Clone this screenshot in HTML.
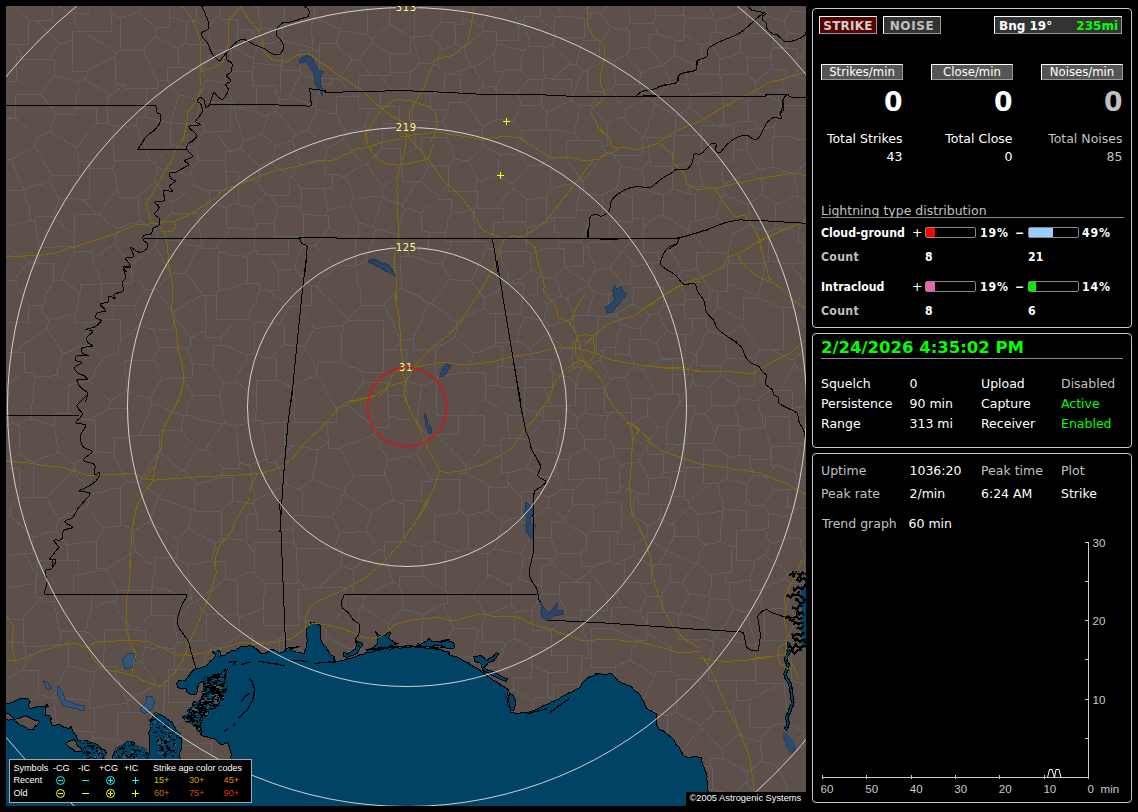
<!DOCTYPE html>
<html><head><meta charset="utf-8"><title>Lightning</title>
<style>
html,body{margin:0;padding:0;background:#000;overflow:hidden}
body{width:1138px;height:812px;position:relative;font-family:"DejaVu Sans","Liberation Sans",sans-serif;font-size:12.5px;color:#fff}
.a{position:absolute;white-space:nowrap;line-height:1}
.pn{position:absolute;border:1px solid #c8c8c8;border-radius:4px;box-sizing:border-box}
.btn{position:absolute;box-sizing:border-box;border:1px solid;border-color:#fff #999 #999 #fff;text-align:center}
.g{color:#c0c0c0}
.gr{color:#00ff00}
.b{font-family:"DejaVu Sans Condensed","DejaVu Sans",sans-serif;font-weight:bold;font-size:12.2px}
.r{text-align:right}
.bar{position:absolute;box-sizing:border-box;width:51px;height:11px;border:1px solid #8a8a8a;border-radius:2px}
.bar i{display:block;height:9px}
.hl{position:absolute;height:1px;background:#8a8a8a}
#map{position:absolute;left:6px;top:6px;width:800px;height:800px;background:#5d4f4a;overflow:hidden}
.lg{font-family:"Liberation Sans",sans-serif;font-size:9.6px}
</style></head><body>
<div id="map">
<svg width="800" height="800" viewBox="6 6 800 800" style="position:absolute;left:0;top:0">
<!--MAP--><defs><pattern id="mk" width="8" height="8" patternUnits="userSpaceOnUse"><rect width="8" height="8" fill="#000"/><rect x="1" y="0" width="2" height="1" fill="#004364"/><rect x="5" y="2" width="2" height="2" fill="#004364"/><rect x="0" y="4" width="1" height="2" fill="#004364"/><rect x="3" y="5" width="2" height="1" fill="#5d4f4a"/><rect x="6" y="6" width="1" height="2" fill="#004364"/><rect x="2" y="2" width="1" height="1" fill="#5d4f4a"/><rect x="4" y="0" width="1" height="1" fill="#5d4f4a"/><rect x="2" y="7" width="2" height="1" fill="#004364"/></pattern><pattern id="mb" width="8" height="8" patternUnits="userSpaceOnUse"><rect width="8" height="8" fill="#004364"/><rect x="1" y="1" width="2" height="1" fill="#000"/><rect x="5" y="0" width="1" height="2" fill="#000"/><rect x="3" y="3" width="2" height="2" fill="#000"/><rect x="6" y="5" width="2" height="1" fill="#000"/><rect x="0" y="6" width="2" height="1" fill="#000"/><rect x="4" y="6" width="1" height="2" fill="#5d4f4a"/><rect x="7" y="2" width="1" height="1" fill="#5d4f4a"/><rect x="1" y="4" width="1" height="1" fill="#000"/></pattern></defs>
<path d="M788 723 793 726 798 729 803 731M788 723 787 718 787 711 786 706 786 700 785 695 784 689 784 684M803 731 808 726 812 722 816 717 820 713M815 688 810 687 805 685 800 683 796 682 791 680M784 684 791 680M806 744 803 744 803 731M814 645 814 648 798 648M798 648 791 648 791 680M400 158 400 148 382 148M400 158 401 165 402 171M382 187 386 184 391 181 394 178 398 175 402 171M382 187 380 183 376 178 373 173 369 168 367 164M367 164 371 160 375 155 378 153 382 148M316 375 317 372M316 375 320 379 323 384 325 389 327 393 330 399 333 403 336 408M317 372 317 362 340 362M336 408 341 407 348 405M348 405 351 400 354 396 357 391 361 386 364 382M364 382 362 382 362 372M340 362 345 364 350 367 356 368 362 372M364 382 387 382 387 395M387 395 406 395 406 380M394 349 406 349 406 380M394 349 383 349 383 351M362 372 383 372 383 351M57 375 51 376 45 376 40 376 34 378M57 375 63 379 68 384M68 384 68 390 68 396 68 402 68 408 68 413M34 378 34 383 33 387 34 393 33 399 32 404 31 408 31 414 32 419M68 413 54 413 54 426M54 426 49 424 43 423 37 420 32 419M57 375 58 369 60 365 61 359 63 354M68 384 73 384 79 383 85 382 89 381M89 381 93 377 95 372 97 367 101 362 103 358M63 354 68 352 73 350 78 347 84 345M103 358 99 354 94 351 89 349 84 345M317 372 315 367 313 361 310 356 306 352 304 346M304 346 307 341 309 338 312 333 315 329M340 362 341 357 341 351 341 345 342 340 341 335 343 330 343 325M315 329 320 328 325 327 331 326 337 326 343 325M383 351 383 320 347 320M343 325 347 320M384 305 379 305 373 306 367 305 362 305M384 305 386 309 388 314 390 318 393 323 395 328 396 332 399 337 401 341M362 305 357 310 352 314 348 319M401 341 394 349M348 319 347 320M420 181 424 176 426 171 429 166M420 181 417 181M400 158 405 155 408 153 413 150 417 147M417 147 421 149M402 171 402 181 417 181M421 149 424 155 426 160 429 166M421 213 425 210 429 206 434 203 438 199M421 213 421 231 428 231M428 231 428 232 445 232M445 232 447 227 448 219 451 214M451 214 451 199 438 199M3 619 10 619 16 619 23 619M23 619 23 646 44 646M1 642 25 642 25 663M44 646 41 650 37 653 33 656 29 659 25 663M-6 682 -1 680 4 678 8 677 14 675 19 672 23 670M23 670 25 663M104 645 99 642 95 639 90 635 85 631M104 645 104 651 103 656 103 661 104 666M104 666 99 668 95 672M95 672 89 671 83 669 78 668 73 666 68 666M85 631 61 631 61 639M68 666 68 644 57 644M57 644 61 639M89 701 89 708 94 708M89 701 90 694 91 688 93 684 94 678 95 672M128 701 125 697 123 691 120 686 119 681 117 677 115 672M128 701 127 703M115 672 115 666 104 666M94 708 99 707 104 706 110 705 116 704 121 704 127 703M91 609 90 615 88 619 87 626 85 631M91 609 97 607 101 604 107 602 112 601M104 645 104 629 130 629M112 601 116 605 118 611 121 615 124 620 128 624 130 629M128 701 133 697 137 695 143 693 147 690 152 687 156 685M115 672 120 670 125 668 130 665 137 663 142 661M142 661 144 666 147 670 150 675 154 680 156 685M383 197 387 200 393 202 397 203 402 205M383 197 381 203 379 208 377 215 375 220 373 226M398 234 399 228 401 223 401 218 404 213 404 208M398 234 392 233 387 232 381 230 376 229M404 208 402 205M376 229 373 226M382 187 382 196 382 196M382 196 383 197M417 181 414 186 412 190 408 196 405 201 402 205M408 249 428 249 428 231M408 249 405 244 401 240 398 234M421 213 415 211 410 209 404 208M420 181 425 184 429 189 433 191 438 195M438 195 438 199M358 223 364 224 368 226 373 226M358 223 358 235 346 235M365 262 360 264 355 265M365 262 367 257 369 251 370 246 373 241 374 235 376 229M355 265 355 235 346 235M346 11 342 7 338 4 334 1 329 -2M346 11 351 8 357 6M357 6 356 1 355 -5 353 -9 352 -15M392 90 380 90 380 106M392 90 398 89 404 89 409 87M409 87 415 93M415 93 414 99 413 105 413 109 412 115 412 120M380 106 399 106 399 123M399 123 410 123 410 122M410 122 412 120M417 147 416 143 414 137 414 133 411 127 410 122M382 146 382 148M382 146 382 123 399 123M298 206 301 206 301 189M298 206 278 206 278 206M278 206 274 201 270 195M270 195 289 195 289 176M301 189 298 185 295 180 292 176M289 176 292 176M293 236 288 236M293 236 303 236 303 214M303 214 298 206M288 236 274 236 274 223M274 223 276 218 276 212 278 206M262 134 263 129 266 122 267 116M262 134 267 138 272 142 276 146M276 146 281 144 287 142 292 140M276 111 272 113 267 116M276 111 279 115 283 118 287 122 289 126 292 131 296 135M296 135 292 140M270 162 264 164 259 166M270 162 273 157 275 151 276 146M244 141 248 140 254 138 258 136 262 134M244 141 240 148M259 166 256 163 251 159 248 155 244 151 240 148M270 162 275 166 280 169 285 172 289 176M300 165 295 170 292 176M300 165 298 160 298 156 295 150 294 146 292 140M327 148 323 144 319 140 316 137 313 135 308 130M327 148 326 155 324 161M308 130 302 132 296 135M324 161 319 162 312 163 305 164 300 165M89 381 94 385 98 389 102 393 106 397 111 401M127 391 122 394 117 397 111 401M127 391 126 387 127 381 126 375 124 371 124 364 124 360M103 358 108 356 113 355 118 354M124 360 118 354M192 363 192 377 184 377M192 363 191 358 188 352 186 347M186 347 160 347 160 349M184 377 179 378 173 378 167 379 162 379M162 379 160 374 157 368 156 363 153 359M153 359 156 353 160 349M190 338 187 333 183 328 179 323 176 319 173 313M190 338 190 347 186 347M173 313 173 329 153 329M153 329 155 334 157 338 158 343 160 349M127 391 133 393 138 396 144 397 150 399M150 399 153 394 156 389 158 384 162 379M124 360 153 360 153 359M120 343 118 343 118 354M120 343 124 338 128 335 133 333 136 328 140 325M140 325 147 328 153 329M-5 395 -2 400 1 405 4 410 7 414 11 419 13 423M-12 435 -7 432 -3 430 2 427 8 425 13 423M-4 394 -0 391 4 387 8 384 12 381 15 379 20 376 24 372M24 372 34 372 34 378M32 419 26 420 22 422 17 425M13 423 17 425M95 451 95 420 89 420M95 451 101 452 108 452 114 453M114 453 114 437 128 437M128 437 128 408 108 408M89 420 94 417 99 414 104 412 108 408M74 464 80 461 85 458 89 455 95 451M74 464 69 460 64 455 58 452M68 413 74 415 79 416 83 419 89 420M58 452 58 446 56 442 56 437 55 431 54 426M74 469 76 474 79 479 83 481 85 486 89 490 91 494M74 469 74 464M120 488 115 488 108 490 103 492 96 492 91 494M120 488 126 481M126 481 123 476 121 471 118 464 116 460 114 453M111 401 108 408M150 399 152 404M140 435 142 430 144 424 146 419 148 414 150 409 152 404M140 435 134 436 128 437M362 305 360 299 360 296 360 290 358 285 357 280 357 276 356 271 354 265M348 319 344 315 341 313 338 309 334 305 330 300 327 298 323 294 320 290 317 286M354 265 334 265 334 268M317 286 320 281 324 277 330 273 334 268M354 265 355 265M328 228 335 231 340 234 346 235M328 228 325 233 322 238 319 241 316 245M334 268 331 263 327 258 323 254 319 250 316 245M293 236 303 236 303 246M325 215 319 215 313 215 309 214 303 214M325 215 328 215 328 228M303 246 309 246 316 245M703 470 703 483 712 483M703 470 703 467 689 467M689 467 685 471M685 471 685 476 684 482 684 487 684 492 684 498M712 483 708 486 704 489 700 493 696 495 691 498 688 501M688 501 684 498M806 291 811 294 815 294 820 296 824 299 830 300 835 301 840 304 844 305 849 307 854 307 858 310 863 312 868 314 872 314 877 317 883 317 888 320 893 321 898 322 902 324 907 326 911 328 917 330 921 331 926 333 931 335M806 291 806 283M806 283 810 280 814 275 818 271 823 269 826 264M806 291 802 295 799 299 795 303 792 307M792 307 795 311 798 316 801 320 805 324 807 330 810 334 813 338M822 384 817 380 813 377 809 373 804 371 798 368 795 364M813 338 809 343 806 347 802 351 797 357 794 360M794 360 795 364M815 443 809 442 804 443M804 443 789 443 789 416M814 404 809 406 804 407 798 407 792 409M789 416 792 409M795 364 792 369 789 373 786 380 783 385 781 390M792 409 792 390 781 390M716 125 714 125M716 125 718 126M722 161 702 161 702 157M722 161 733 161 733 150M702 157 702 151 701 146 701 141M701 141 701 125 714 125M718 126 733 126 733 150M806 105 781 105 781 105M781 136 774 136 774 127M781 136 786 136 791 137 796 139 801 139 806 140M774 127 776 122 778 116 779 111 781 105M718 126 722 124 728 124 734 124 738 122 743 121 748 121M733 150 740 149 747 150M747 150 747 129 756 129M748 121 756 121 756 129M590 12 596 12 600 14M590 12 590 18 584 18M599 44 599 40 583 40M599 44 603 40 605 36 608 31 611 27M583 40 581 37M584 18 584 37 581 37M600 14 604 18 607 23 611 27M649 47 644 47 639 48 634 49 629 50M649 47 649 34 657 34M657 34 656 28 653 23M653 23 629 23 629 25M629 50 629 30 625 30M625 30 629 25M675 40 683 40 683 35M675 40 669 37 664 36 657 34M686 18 685 24 684 28 683 35M686 18 684 15M653 23 656 16M656 16 656 15 684 15M590 12 587 12 587 3M584 18 579 18 573 17 568 16 563 16M556 -0 559 5 560 11 563 16M581 37 576 38 570 37 566 38 561 37 555 38M555 38 554 30M563 16 554 16 554 30M722 161 722 182 728 182M747 150 750 156 752 160 756 165 759 169M728 182 733 179 738 178 743 175 748 174 754 172 759 169M781 136 772 136 772 167M812 159 807 163 803 166 798 170 794 174M794 174 788 172 783 171 778 168 772 167M774 127 768 128 762 128 756 129M759 169 762 170M772 167 767 168 762 170M819 245 803 245 803 242M806 283 802 280 800 275 796 272 793 268 790 263M803 242 803 263 790 263M695 221 701 220 705 218 711 217 716 216M695 221 695 194 689 194M716 216 718 211 719 205 722 199 725 194M689 194 689 186 702 186M702 186 708 187 713 188 718 189 723 191M725 194 723 191M733 234 730 231 726 227 723 223 719 220 716 216M733 234 738 231 744 228 750 224M750 224 750 218 749 211 748 205M748 205 744 203 739 201 734 198 729 197 725 194M698 162 699 168 700 174 702 180 702 186M698 162 702 157M728 182 723 191M748 205 752 202 758 198 762 194M762 194 762 188 762 183 761 177 762 170M698 162 694 162 687 162 683 164 678 164 673 165M672 189 672 166 672 166M672 189 678 190 683 192 689 194M673 165 672 166M494 208 503 208 503 222M494 208 498 205 502 201 505 196 510 192 514 189M503 222 503 221 520 221M520 221 526 221 526 199M526 199 522 196 519 192 514 189M672 525 675 521 679 517 682 514 686 511 690 507M672 525 674 525 674 536M690 507 694 510 698 514M674 536 698 536 698 537M698 514 697 520 698 526 698 531 698 537M732 458 726 455 722 452 716 450M732 458 727 458 727 479M716 450 703 450 703 470M712 483 717 484M717 484 722 481 727 479M764 810 766 804M766 804 771 801 775 800 779 797 783 795 788 792M803 815 802 810 801 805 799 799 798 795M798 795 788 792M817 783 817 795 798 795M806 744 803 747 797 751 794 754 789 757 785 759 781 763 777 766M777 766 780 772 783 777 785 782 787 787 788 792M-34 500 -28 501 -23 501 -17 504 -12 505 -6 506 -2 508 4 508 10 510M10 510 11 516M11 516 -9 516 -9 540M11 516 14 519 18 523 22 526 25 530 28 534 32 537M-3 557 3 557 8 556 14 555 19 554 24 553M24 553 32 553 32 537M33 492 33 497 19 497M33 492 33 488 33 482 34 478 33 472 34 466 35 462M19 497 19 468 -3 468M-3 468 3 466 6 462 11 460 14 457 19 454M35 462 29 460 25 457 19 454M74 469 71 473 67 477 63 481 59 485 55 488 51 494 47 497M58 452 54 455 49 456 43 457 39 460 35 462M47 497 33 497 33 492M10 510 12 505 15 500 19 497M17 425 19 425 19 454M140 746 145 741 149 737M123 745 117 739M117 739 117 712 130 712M151 724 151 712 130 712M94 708 94 732 90 732M90 732 93 737M93 737 98 738 106 739 111 739 117 739M127 703 130 712M91 742 93 737M22 807 21 806M6 790 1 789 -4 787 -9 787M51 806 41 806 41 812M89 701 84 700 79 699 74 699 69 698 63 699 58 699 54 698M90 732 84 731 78 731 72 729M56 725 56 719 55 714 55 709 54 703 54 698M23 670 38 670 38 694M44 646 50 645 57 644M68 666 65 671 63 676 60 681 57 687 56 692 53 697M38 694 43 695 48 697 53 697M53 697 54 698M-15 736 -11 739 -6 744 -3 747 2 750 6 753M4 712 6 712M-13 780 -13 755 6 755M38 694 33 698 30 702M156 685 164 686M164 686 164 692 164 698 164 704 163 709 163 716M211 743 205 743 198 744 193 745 187 745 181 745M211 743 211 759 220 759M220 759 215 762M163 811 168 809 173 806M159 810 158 806M164 686 168 685M168 685 168 702 195 702M174 725 178 722 184 719M211 743 211 738M85 79 79 82M85 79 88 81 93 85 98 87 103 90 106 93 111 96M79 82 78 87 78 93 76 97 75 103 75 108M111 96 107 96 107 122M107 122 107 123 96 123M75 108 96 108 96 123M75 108 75 114 56 114M96 123 93 127 89 131 86 135 83 140 80 144 76 148M76 148 72 145 68 143 63 139 60 137 54 134 50 131M56 114 54 120 52 125 50 131M85 79 88 71M125 84 121 87 115 92 111 96M125 84 115 84 115 56M88 71 92 68 96 66 101 64 105 61 111 58 115 56M339 29 334 26 330 25 325 22 319 20 314 18M339 29 342 23 344 17 346 11M314 18 314 13 315 7 315 2M139 13 132 14 127 16 120 18M139 13 141 7 142 0 143 -6M120 18 116 16 111 12M111 12 110 7 107 1M120 50 116 53M120 50 120 50 120 18M116 53 111 50 107 46 102 43 97 41 94 37 88 35 84 31M84 31 111 31 111 12M120 50 144 50 144 49M155 27 155 36M155 27 151 23 147 20 143 17 139 13M144 49 147 44 152 41 155 36M336 113 339 119 340 124 344 128 346 133M336 113 336 96 354 96M346 133 353 131 359 129 365 127M365 127 366 122 367 117 369 112 371 108M371 108 358 108 358 96M354 96 358 96M327 148 333 145 337 143 343 139M343 139 346 133M317 110 323 111 329 113 336 113M317 110 315 116 312 121 310 125 308 130M367 164 363 164M363 164 360 159 356 156 353 152 350 147 347 143 343 139M382 146 378 141 373 136 369 132 365 127M380 106 380 108 371 108M370 75 379 75M370 75 358 75 358 96M379 75 383 79 385 83 389 87 392 90M346 176 341 176 337 175 332 174M346 176 348 182 351 188 353 193 354 198M332 174 332 188 322 188M322 188 324 193 326 199 327 205 328 210M328 210 333 209 340 207 346 206 350 204M354 198 350 204M363 164 358 168 354 170 350 173 346 176M324 161 324 174 332 174M382 196 376 197 371 196 365 198 360 199 354 198M301 189 306 188 313 188 318 188 322 188M325 215 328 210M358 223 356 219 355 214 352 209 350 204M430 93 444 93 444 73M430 93 430 109 448 109M448 109 448 102 460 102M460 102 460 74 452 74M452 74 444 73M415 93 419 93 425 94 430 93M412 120 417 121 423 120 428 122 433 121 439 122 443 122M443 122 445 116 448 109M370 75 367 69 363 65 359 60M379 75 390 75 390 60M359 60 362 56 365 51 368 48 372 43M372 43 377 46 383 50 389 53M390 60 389 53M409 87 409 83 411 77 410 72M390 60 390 72 410 72M474 353 472 358 470 363 469 368 467 372M474 353 470 350 465 345 460 342 455 337M455 337 450 341 444 344 439 346 435 349M435 349 435 376 439 376M467 372 462 372 456 374 449 375 444 375 439 376M401 341 406 340 413 338M422 386 417 384 412 383 406 380M422 386 428 384 436 381M413 338 413 349 435 349M436 381 439 376M244 141 242 136 240 129 239 124 237 120 236 114 234 108M213 131 230 131 230 109M213 131 217 135 220 138 224 144 227 148 232 151M240 148 232 151M230 109 234 108M259 166 259 180 255 180M270 195 266 194M266 194 262 190 259 184 255 180M279 324 284 324 284 344M279 324 273 323 268 323 263 322 257 323 252 322M284 344 280 348 277 351 274 355 269 358M252 322 254 322 254 353M254 353 259 355 264 357 269 358M316 375 312 377 307 379 302 382 298 384 293 387M304 346 299 346 295 345 289 345 284 344M293 387 286 385 282 382 276 380M269 358 276 358 276 380M185 415 187 410 188 406 190 400 193 395M185 415 191 416 195 418 201 420 206 420 212 422 217 423 222 424M193 395 220 395 220 391M220 391 220 397 221 402 222 407 223 413 224 418 225 423M225 423 222 424M184 377 186 383 190 390 193 395M184 416 178 414 174 412 168 410 163 408 158 405 152 404M184 416 185 415M205 331 206 327 206 320 206 315 205 311 205 305 205 300 205 295M205 331 200 333 195 336 190 338M173 312 173 313M173 312 176 310 182 307 186 305 189 301 194 300 199 297 203 295M203 295 205 295M221 337 226 333 229 328 233 323 237 319M221 337 205 337 205 331M237 319 216 319 216 292M205 295 216 295 216 292M249 319 242 319 237 319M249 319 250 314 252 308 256 303 257 296 259 291M259 291 259 283 247 283M247 283 242 284 238 286 233 288 228 289 223 289 218 291M216 292 218 291M247 283 247 257 246 257M218 291 218 252 221 252M246 257 242 256 236 255 230 255 227 253 221 252M185 273 188 268 191 262 193 256 196 251 199 246M185 273 189 277 193 281 196 286 199 290 203 295M221 252 217 248M217 248 202 248 202 244M199 246 202 244M114 166 114 160 150 160M114 166 115 161 114 157 113 150 113 146 113 141 114 135 113 131 113 126M150 160 148 156 147 150 145 144 142 140 140 135 138 129 136 125M113 126 118 125 125 126 130 126 136 125M185 273 171 273 171 274M158 237 164 238 168 240 173 240 178 241 183 242 188 245 193 245 199 246M158 237 155 246M155 246 158 251 161 256 163 260 165 264 168 269 171 274M173 312 169 308 167 303 162 299 160 294 156 290M171 274 167 277 163 282 160 286 156 290M134 305 138 300 142 295 146 290M134 305 135 310 137 316 139 320 140 325M156 290 151 289 146 290M2 197 2 190 24 190M24 190 25 195 26 200 28 205 30 210 29 216 31 220M31 220 26 222 20 223 14 225 8 225 3 228M86 322 93 322 98 320 105 319M86 322 75 322 75 314M75 314 77 309 78 304 78 299 80 293M80 293 80 284 101 284M101 284 101 305 113 305M113 305 113 319 105 319M84 345 86 345 86 322M120 343 120 319 105 319M134 305 129 305 123 305 118 306 113 305M63 354 60 350 58 345 55 340 52 337 49 332 47 328M75 314 70 315 64 316 59 318 54 318 49 320M47 328 49 320M24 372 24 352 14 352M47 328 43 331 39 334 35 337 31 340 26 342 22 345 19 349 14 352M-1 343 -1 352 14 352M159 451 159 448M159 451 163 455 168 458 172 463 177 467 182 470M159 448 159 430 181 430M181 430 184 434 187 439 192 442 196 446 198 450M198 450 194 454 192 458 189 462 187 467 183 470M182 470 183 470M140 482 143 477 145 474 148 468 150 464 154 459 156 456 159 451M140 482 133 482 126 481M140 435 159 435 159 448M140 482 145 485 148 488 152 492 157 496M157 496 162 492 165 488 168 485 172 481 175 478 178 474 182 470M184 416 182 423 181 430M206 450 208 445 211 441 214 436 217 433 220 428 222 424M206 450 198 450M311 287 307 282 303 279 299 274 295 269M311 287 311 305 297 305M290 307 297 305M290 307 285 304 281 300 275 297 272 293 267 290M295 269 278 269 278 270M267 290 278 290 278 270M317 286 311 287M303 246 300 251 298 257 296 263 295 269M315 329 311 324 307 320 304 315 301 310 297 305M279 324 282 320 284 315 287 311 290 307M252 322 249 319M259 291 267 290M288 236 288 254 268 254M268 254 271 259 274 264 278 270M268 254 256 254 256 251M246 257 250 253 256 251M155 568 151 564 146 562 143 557 139 554 135 551M155 568 155 557 174 557M174 557 177 557 177 539M134 530 133 536 133 540 135 546 135 551M134 530 139 528 143 525 149 522M177 539 172 537 168 533 163 530 159 528 153 525 149 522M120 488 120 525 124 525M124 525 128 527 134 530M157 496 158 497M149 522 151 517 153 512 154 508 157 501 158 497M212 561 225 561 225 579M212 561 207 561 201 563 194 564 188 565M225 579 222 582 216 586 213 590 208 592 204 596 199 600 196 602M188 565 188 571 189 577 190 582 190 587 191 593 191 599M191 599 194 602M196 602 194 602M152 585 152 586M152 585 152 579 155 574 155 568M174 557 178 559 183 562 188 565M152 586 157 588 162 588 167 590 172 592 176 594 182 595 186 597 191 599M804 443 800 446M800 446 771 446 771 448M789 416 765 416 765 428M765 428 767 434 769 441 770 447M771 448 770 447M739 455 739 429 744 429M739 455 749 455 749 459M744 429 749 429 755 428 759 427 764 427M764 427 765 428M770 447 770 459 749 459M732 458 739 455M727 479 733 481 739 482 746 484M746 484 750 480 754 475M754 475 752 470 750 464 749 459M660 519 666 522 672 525M660 519 660 519 660 504M690 507 688 501M684 498 684 496 670 496M660 504 670 504 670 496M685 471 680 472 675 471 670 472 664 472M670 496 670 477 660 477M664 472 660 477M764 427 762 421 762 417 760 412 759 406 758 401M781 390 776 390 770 390M758 401 761 397 766 393 770 390M777 766 772 764 767 763 762 761M762 761 758 764 752 769 747 772M766 804 762 801 758 796 754 791 749 787 745 783M747 772 747 783 745 783M701 728 699 732 695 736 691 739 689 743 684 748 681 752M701 728 706 732 710 737 714 742 718 745 722 750M710 767 710 758 722 758M710 767 703 766M722 750 722 758M798 648 794 644 789 640M816 609 816 614 794 614M789 640 789 634 791 630 793 625 793 619 794 614M784 684 781 683M781 683 755 683 755 654M755 654 755 645M755 645 756 644M756 644 764 640M789 640 783 640 777 640 770 640 764 640M788 723 782 724 775 725 770 727M781 683 777 686 773 689 767 691 762 693 759 696 753 698 749 701M749 701 749 727 770 727M762 761 762 755 760 748 760 742M747 772 741 768 737 766 732 764 727 760 722 758M722 750 726 746 730 742 735 738 738 735M738 735 743 737 749 739 754 740 760 742M770 727 767 732 762 736 760 742M736 680 736 700 743 700M736 680 708 680 708 669M696 678 701 674 708 669M696 678 699 682 700 687 703 692 706 698 709 703 712 707 714 712M714 712 720 711 727 711 733 710M733 710 733 700 743 700M755 654 755 680 736 680M749 701 743 700M701 726 701 728M701 726 705 721 710 717 714 712M738 735 737 730 736 724 736 720 734 714 733 710M535 450 532 456 529 463 527 468M535 450 541 451 546 453 552 452 556 453M555 470 558 464 560 459M555 470 555 476 540 476M556 453 560 459M540 476 533 472 527 468M781 105 778 100M794 74 798 77 803 79 806 84 810 86M794 74 790 76 785 78M785 78 783 84 782 89 779 95 778 100M701 45 710 43M701 45 701 63 692 63M710 43 712 46 716 51 718 55 722 59M695 71 692 63M695 71 695 74 719 74M719 74 719 59 722 59M712 18 715 21M712 18 712 18 686 18M683 35 689 37 692 39 696 43 701 45M715 21 716 27 716 32M716 32 710 32 710 43M675 40 674 46 674 51 674 56M674 56 681 58 686 61 692 63M555 38 552 45M554 30 549 26 545 24 539 19 535 16M530 46 529 42 528 36 526 31 524 27 524 21M530 46 544 46 544 49M544 49 552 45M524 21 524 16 535 16M540 5 540 16 535 16M779 204 784 202 788 199 793 197 798 196M779 204 775 204 775 228M798 232 792 230 787 229 782 229 775 228M798 232 800 227 803 223 805 218 807 214 809 210 811 205M811 205 806 203 802 198 798 196M794 174 795 179 796 185 797 191 798 196M762 194 767 198 773 201 779 204M750 224 754 226 759 229 763 230 769 232M769 232 775 228M769 232 768 232 768 261M803 242 798 242 798 232M768 261 774 261 780 262 785 264 790 263M728 253 728 258 728 263 727 268 727 273 727 279 727 284M728 253 728 263 766 263M727 284 733 285 738 288 743 289 747 292 752 293 758 296M766 263 764 268 763 275 762 280 761 285 759 291 758 296M733 234 731 240 729 247 728 253M768 261 766 263M728 253 728 253M769 349 760 350M769 349 783 349 783 308M760 350 758 347 754 343 751 338 748 335 746 331 742 326M783 308 779 307 773 305 769 302 764 301 759 298M759 298 743 298 743 320M743 320 742 326M792 307 783 308M794 360 789 359 784 356 780 354 774 351 769 349M758 296 759 298M674 56 669 60 663 65M695 71 686 71 686 85M686 85 680 84 675 83 670 82M670 82 668 77 666 71 663 65M649 47 652 52 656 56 658 60 661 65M661 65 663 65M672 189 668 192 663 195M695 221 689 221 689 230M689 230 685 228 679 225 675 222 669 219 666 218 660 215M663 195 663 215 660 215M701 141 701 135 675 135M714 125 708 121 704 119 699 115 694 111 689 108M689 108 683 112 676 116M675 135 675 116 676 116M673 165 673 159 673 153 674 148 674 142 674 136M675 135 674 136M689 108 690 102 691 96M691 96 689 90 686 85M653 101 658 96 662 92 666 87 670 82M653 101 655 104M676 116 671 113 666 110 661 107 655 104M672 166 650 166 650 161M674 136 668 137 662 137 657 137 651 137 646 137M650 161 649 155 648 150 648 143 646 137M655 104 653 109 652 115 649 121 648 126 646 131 644 136M644 136 646 137M541 165 541 165 529 165M541 165 546 161 550 157M550 157 550 130 546 130M529 165 525 161 522 156 520 153 517 148M546 130 522 130 522 132M522 132 521 138 518 143 517 148M526 199 533 199 539 198 546 197M514 189 513 184M546 197 550 189M550 189 550 165 541 165M513 184 517 179 521 174 526 169 529 165M499 154 499 158 498 165 499 169 498 174M499 154 517 154 517 148M513 184 508 181 502 178 498 174M613 456 614 448M613 456 606 458 599 461M614 448 611 443 608 438 604 433M604 433 604 439 585 439M585 439 584 449M584 449 590 452 594 456 599 461M585 439 580 433 576 428M556 453 557 448 557 441 559 435M560 459 568 459M568 459 573 455 579 452 584 449M576 428 559 428 559 435M421 149 421 137 447 137M443 122 446 128 448 134M447 137 448 134M475 191 448 191 448 186M475 191 475 182 478 182M478 182 476 177 473 172 471 166 468 161M448 186 449 181 448 176 448 171 448 165M468 161 461 160 454 159M448 165 454 159M451 214 457 212 463 212 468 210 474 208M438 195 443 190 448 186M474 208 477 204M477 204 477 191 475 191M477 204 477 208 494 208M498 174 494 177 488 178 483 181 478 182M499 154 494 151 489 149 485 145M485 145 482 148 476 154 472 158 468 161M429 166 435 167 442 165 448 165M447 137 449 143 451 147 453 153 454 159M448 134 453 134 460 134 466 133 470 132 476 131 482 130M485 145 482 145 482 130M474 208 474 214 473 219 475 225 474 231 475 235 475 241M503 222 493 222 493 248M493 248 486 249M475 241 486 241 486 249M445 232 445 241 452 241M475 241 475 241 452 241M698 514 705 514 710 513 716 512 722 511M698 537 701 541 705 544M705 544 709 544 715 543 720 541M720 541 720 537 720 531 721 527 722 521 722 516 722 511M717 484 719 489 719 494 722 499 722 504 724 509M746 484 746 500 749 500M749 500 744 503 739 506 735 510M735 510 730 509 724 509M722 511 724 509M91 609 91 594 73 594M61 639 59 634 59 629 58 623 56 618 56 612 55 607 54 601M73 594 54 594 54 601M23 619 26 614 30 610 34 605 38 601 42 597M54 601 42 601 42 597M4 588 9 588 14 586 21 586 26 584 31 584 35 583M42 597 35 597 35 583M24 553 27 557 30 563 32 568 35 572 37 576M35 583 37 576M291 814 291 806 284 806M256 817 259 813 262 809 267 806M242 816 241 811 238 806M211 844 211 838 209 833 207 828 206 822 204 817 203 811 202 806M174 621 174 615 151 615M174 621 174 626 176 632 177 637 178 643M178 643 174 648M174 648 168 648 162 647 157 648 150 648 145 647M151 615 147 618 143 623 140 626 135 630M135 630 145 630 145 647M152 586 151 586 151 615M194 602 189 605 186 610 182 614 178 618 174 621M142 661 143 655 145 647M168 685 168 669 179 669M179 669 174 669 174 648M152 585 152 590 116 590M112 601 116 601 116 590M130 629 135 630M179 669 184 669 190 669 195 669M205 640 212 647M205 640 206 640 206 614M206 614 211 614 217 614 222 615 226 615 232 614 237 615M219 648 212 647M219 648 223 644 229 642 235 639 240 635M240 635 240 630 239 623 240 617M237 615 240 617M178 643 184 642 188 641 195 641 200 640 205 640M201 668 204 662 206 657 209 652 212 647M196 602 200 606 202 611 206 614M231 580 237 580 237 615M231 580 225 579M223 655 221 652M221 651 219 648M252 646 252 645M252 645 252 635 240 635M15 118 19 121 22 124 27 128 30 131 34 135 37 138M15 118 -10 118 -10 139M11 159 6 159 -0 157 -5 155M11 159 16 157 20 154 26 152 31 149 35 146M35 146 37 138M24 190 24 190M24 190 22 185 19 180 17 175 15 170 13 165 11 159M88 71 72 71 72 40M115 56 116 53M84 31 80 31M72 40 72 31 80 31M89 -9 89 13 74 13M80 31 77 26 75 20 74 13M155 27 169 27 169 17M171 -9 170 -3 170 1 169 6 169 12 169 17M210 45 210 40 208 33 207 28M210 45 205 46 200 44 196 44 189 44 185 43M207 28 202 25 196 22 190 20M185 43 186 37 187 32 186 27 187 22M187 22 190 20M214 50 222 50M214 50 210 45M229 46 229 50 222 50M229 46 237 46 237 29M220 15 216 18 212 23 207 28M220 15 220 19 231 19M231 19 237 19 237 29M215 5 220 5 220 15M196 1 196 20 190 20M155 36 159 39 165 41 170 44 174 46 178 49M178 49 185 43M169 17 175 18 181 20 187 22M253 58 248 56 243 54 239 50 234 48 229 46M253 58 256 51 260 44M237 29 244 29 251 30M251 30 255 35 257 39 260 44M258 7 252 6 245 3M258 7 263 4 268 1 272 -4 276 -7M231 19 235 14 239 10 242 6 245 3M251 30 260 30 260 20M260 20 258 20 258 7M367 34 372 39M367 34 367 8 365 8M372 39 376 36 381 31 385 28 390 24M390 24 389 18 389 11M389 11 389 3 377 3M365 8 370 6 377 3M339 29 340 31M357 6 365 8M340 31 346 31 350 32 356 33 362 34 367 34M372 43 372 39M389 53 410 53 410 37M410 37 406 33 400 31 394 27 390 24M409 1 389 1 389 11M337 78 331 78M337 78 341 74 345 70 349 65 352 60M331 78 319 78 319 51M352 60 348 55 343 52 339 47 336 43M336 43 319 43 319 51M359 60 352 60M354 96 350 92 345 87 342 82 337 78M340 31 338 37 336 43M317 110 315 107M331 78 331 84 322 84M315 107 316 102 318 96 320 89 322 84M125 84 125 88 146 88M107 122 113 126M136 125 136 117 145 117M146 88 146 93 146 99 146 106 145 111 145 117M144 49 145 54 149 59 150 65 153 71 155 76 157 80M146 88 157 88 157 80M155 163 150 160M155 163 160 158 163 153 167 148 171 144M171 144 170 139 171 134 170 128 170 123M145 117 150 118 155 119 160 121 165 122 170 123M497 44 502 45 508 47 512 48 518 49 523 51M497 44 494 54M494 54 494 71 505 71M523 51 522 56 521 63 520 69M520 69 505 69 505 71M517 94 521 88 525 84 529 79M517 94 512 93 506 92 500 90 495 89M529 79 524 74 520 69M495 89 498 84 500 79 502 76 505 71M465 102 468 107 471 110 474 114 477 119 480 123 484 126M465 102 469 99 473 97 477 93 480 89 484 86M494 89 494 86 484 86M494 89 496 89 496 119M496 119 490 123 484 126M460 102 465 102M482 130 484 126M471 66 474 67M471 66 465 69 461 71 456 72 452 74M474 67 476 72 479 76 482 82 484 86M474 67 480 64 485 60 490 57 494 54M495 89 494 89M517 94 520 100 521 105M513 122 516 115 518 110 521 105M513 122 508 120 502 119 496 119M513 122 518 127 522 132M410 72 416 68 419 63M410 37 413 37M419 63 419 58 417 53 415 47 414 43 413 37M444 73 440 69 438 64M419 63 425 63 432 64 438 64M471 66 469 61 466 55 464 48M464 48 456 44M456 44 449 47 443 50M438 64 438 50 443 50M256 85 252 85 252 71M256 85 256 107 236 107M252 71 231 71 231 74M236 107 235 107M235 107 233 103 230 96 229 93 226 88 225 82M231 74 225 74 225 82M253 58 254 64M222 50 231 50 231 74M254 64 252 71M267 116 261 115 256 112 252 111 245 110 242 109 236 107M234 108 235 107M224 345 228 347 234 349 239 352 243 353 248 355M224 345 213 345 213 366M248 355 246 361 242 365 240 371 237 376 235 382M213 366 216 371 218 375 222 380 224 384M224 384 230 382 235 382M221 337 221 345 224 345M254 353 248 355M192 363 197 364 202 364 208 365 213 366M256 395 256 380 276 380M256 395 251 392 247 390 243 387 239 384 235 382M220 391 224 384M236 426 230 425 225 423M236 426 241 424 245 424 251 421 255 420M255 420 256 413 256 407 256 400 256 395M231 227 237 228 243 229 247 229 254 230M231 227 226 227 226 208M226 208 234 203M234 203 240 205 247 206 252 208M252 208 253 214 255 220 257 226M257 226 254 230M256 251 254 251 254 230M217 248 219 243 223 239 226 236 229 230 231 227M266 194 262 198 257 202 252 208M255 180 249 181 243 183 238 183M238 183 238 203 234 203M274 223 257 223 257 226M155 163 157 167M157 167 163 169 169 170 174 170 179 172 184 174 190 175M195 148 190 147 183 147 177 146 171 144M195 148 198 156M190 175 192 170 194 165 197 162 198 156M213 131 208 131 203 132M232 151 225 151 225 160M203 132 200 137 198 143 195 148M198 156 198 160 225 160M238 183 238 171 226 171M226 171 225 171 225 160M198 220 198 213 171 213M198 220 201 215 205 209 209 204M209 204 209 190 203 190M171 202 176 200 181 196 186 193 191 188 195 185M171 202 171 202 171 213M203 190 195 185M158 237 155 229M155 229 159 225 164 221 168 217 171 213M202 244 201 239 200 233 199 227 198 220M226 208 220 206 214 205 209 204M226 171 226 190 203 190M155 183 155 178 157 173 157 167M155 183 159 186 162 191 164 195 168 199 171 202M190 175 193 180 195 185M155 183 150 186 146 190 141 193 138 197M155 229 151 227 145 224 140 221M138 197 138 203 138 209 139 214 140 221M76 148 78 154 78 161M50 131 44 134 37 138M35 146 38 151 41 156 43 160 45 165 49 170 51 175M78 161 78 175 51 175M24 190 29 187 33 186 38 184 43 184 49 181M49 181 51 175M-1 282 -1 280 15 280M1 322 28 322 28 305M15 280 17 285 20 291 23 295 25 300 28 305M49 320 45 315 41 310M28 305 41 305 41 310M146 290 142 285 139 279 135 275 131 270M101 284 101 283M101 283 131 283 131 270M155 246 151 250 146 254 141 257 137 260 132 264M131 270 132 264M255 420 262 420 262 423M293 387 293 392 294 398 294 406 294 411M262 423 268 424 273 422 279 422 284 422M294 411 289 417 284 422M336 408 336 422 327 422M294 411 294 422 327 422M262 423 263 428 264 434 264 439 265 443 265 449 266 454 267 459M267 459 267 462 276 462M276 462 279 458 283 455 287 453 290 448 295 445M284 422 284 445 295 445M568 459 568 479 584 479M599 461 599 478 591 478M591 478 584 479M660 504 638 504 638 497M648 478 655 478 660 477M648 478 648 493 637 493M638 497 637 493M620 464 626 464 633 463 639 462M620 464 620 470 619 475 619 480 619 486M639 462 643 467 646 473 648 478M637 493 631 490 625 488 619 486M613 456 617 460 620 464M591 478 606 478 606 492M619 486 619 492 606 492M776 465 771 471 766 476M776 465 782 467 788 470 794 471M766 476 768 482 771 485 774 491M796 474 794 471M796 474 796 489 787 489M787 489 780 490 774 491M771 448 771 465 776 465M754 475 761 476 766 476M800 446 799 452 798 456 796 461 795 466 794 471M749 500 749 505 764 505M764 505 767 500 770 496 774 491M816 479 816 474 796 474M811 508 804 508 798 507M798 507 787 507 787 489M685 443 687 438 688 433 690 430 691 424 692 419 694 414M685 443 713 443 713 442M713 442 716 433M716 433 713 429 711 423 708 418 705 413M705 413 700 413 694 414M716 450 713 442M689 467 684 467 684 444M684 444 685 443M744 429 738 425M738 425 716 425 716 433M724 336 729 334 733 332 738 328 742 326M724 336 725 341 725 347 727 354 726 359M760 350 755 357M755 357 749 357 744 358 739 358 733 358 726 359M770 390 765 386 762 380 759 376 754 372M755 357 755 363 754 372M654 806 654 815 656 815M691 806 688 810 684 813 680 817 677 821M674 536 672 541 669 546 666 551M666 551 666 551M666 551 672 553 677 556 680 557 686 560 691 562 696 564M705 544 702 550 700 553 699 559 697 563M696 564 697 563M786 608 772 608 772 609M786 608 788 604 788 598 788 593 790 588 790 583M772 609 761 609 761 600M786 578 790 583M786 578 782 580 776 583 771 584 765 588 760 590M760 590 761 590 761 600M764 640 764 609 772 609M794 614 786 608M814 591 814 583 790 583M756 644 754 638 753 634 751 629 749 623 749 617 747 612M747 612 752 608 757 605 761 600M615 806 615 806M458 415 462 415 468 415M458 415 458 434 435 434M468 415 484 415 484 445M484 445 480 449 477 453 474 457 469 462 466 465M466 465 461 461 459 457 454 453 451 449 447 445 442 442 440 438 435 434M535 450 532 445 528 439M559 435 559 420 543 420M543 420 539 425 536 430 531 433 528 439M511 472 515 471 522 469 527 468M511 472 501 472 501 446M501 446 501 438 509 438M528 439 522 439 516 438 509 438M524 806 524 806M524 806 525 806M561 806 561 818 558 818M558 818 552 816 547 814 541 813 537 810 531 808 526 806M496 814 496 806 490 806M748 121 749 116 748 111 748 106 747 101M778 100 773 98 767 96 762 94 756 92M756 92 751 97 747 101M716 125 723 125 723 96M747 101 741 99 735 98 729 97 723 96M719 74 721 79M691 96 697 94 704 93 708 94 715 92 721 92M721 79 721 92 721 92M721 92 723 96M600 14 605 9 609 4 614 1M611 27 618 29 625 30M629 25 629 20 629 14 628 9 628 5M656 16 655 10 653 4M684 15 683 10 685 3 684 -2 685 -8M712 -4 712 1 711 6 712 12 712 18M794 74 797 74 797 59M821 64 816 61 812 60 807 59 801 57M797 59 801 57M716 32 721 33 726 34 730 37 735 38 741 39M722 59 727 57 731 56 736 54 741 52M741 39 740 46 741 52M508 5 511 9 514 15 518 20M508 5 503 6 497 7 492 8M518 20 518 40 496 40M492 8 489 13 486 18 484 23 482 27M496 40 496 31 484 31M482 27 484 31M524 21 518 20M477 -8 480 -4 485 0 488 4 492 8M530 46 523 51M497 44 496 40M462 17 468 20 472 22 477 25 482 27M462 17 462 12 463 6 462 1 462 -4M464 48 468 44 472 41 475 38 480 34 484 31M462 17 462 24 454 24M456 44 455 39 455 34 455 30 454 24M807 36 806 42 804 46 804 51 801 57M671 252 674 248 678 244 681 239 686 236 689 231M671 252 674 256 677 260 679 265 682 270M682 270 690 270 696 268M696 268 696 252 710 252M710 252 706 249 702 245 699 241 695 238 693 235 689 231M728 253 723 253 717 252 710 252M689 230 689 231M724 336 718 334 713 332 708 331M708 331 705 323M743 320 738 318 733 315 727 312 724 309 718 307M718 307 715 311 711 315 707 319 705 323M727 284 727 291 717 291M718 307 717 307 717 291M696 268 699 272 703 278 706 284 709 289M717 291 709 289M629 50 627 55M661 65 656 67 651 68 646 71 641 73M627 55 630 60 634 64 638 69 641 73M653 101 647 98M647 98 645 94 641 88 639 84M641 73 640 79 639 84M663 195 656 193 650 191 645 188M650 161 645 165 641 170M645 188 644 182 643 176 641 170M643 227 647 224 651 221 656 218 660 215M643 227 643 218 632 218M645 188 640 191 634 194 630 197M632 218 632 197 630 197M621 165 625 167 631 168 635 169 641 170M621 165 619 172 619 177 618 184 616 189M630 197 625 195 621 192 616 189M520 221 524 224 528 228M493 248 500 251M500 251 505 252 510 251 515 251 522 251 527 251M528 228 527 233 527 240 526 245 527 251M555 217 546 217 546 197M555 217 554 220M528 228 533 226 539 225 543 223 550 222 554 220M532 270 531 265 530 259 530 253M532 270 527 273 524 276 520 279 515 280 511 283M500 251 501 256 502 262 505 268 507 272 508 279 509 283M511 283 509 283M527 251 530 253M644 136 642 136M621 165 617 160 613 155M613 155 642 155 642 136M544 49 543 56 543 60 543 67 544 73 544 78M529 79 542 79 542 79M544 78 542 79M521 105 528 105 534 105 541 105M542 79 542 85 542 89 541 94 542 100 541 105M546 130 546 130M546 130 546 113 549 113M549 113 544 109 541 105M408 249 408 256M452 241 450 247 447 252 444 259 442 264M442 264 437 263 433 263 427 261 423 260 418 258 413 257 408 256M384 305 389 300 392 295 398 292 402 288M365 262 370 262 375 263 379 264 384 265 390 266 394 267 400 267M402 288 401 283 401 277 401 273 400 267M413 338 415 333 418 327 420 323 423 318 424 313 427 307 429 303M402 288 406 291 411 293 416 295 421 297 424 301 429 303M400 267 400 256 408 256M811 557 804 554M804 554 802 549 800 544M800 544 803 539 808 535 811 530 814 525 818 520M787 572 804 572 804 554M787 572 786 578M73 594 73 575 78 575M37 576 37 560 66 560M66 560 78 560 78 575M116 590 114 584 112 580 109 575 108 570M78 575 83 574 87 573 93 572 98 571 102 570 108 570M135 551 130 554 126 557 122 560 117 562 112 566 108 568M108 570 108 568M322 807 322 806M72 40 66 42 60 44M60 44 55 40 52 36 47 32 44 28 39 23 35 20M74 13 68 11 64 9 58 6 52 4M35 20 52 20 52 4M79 82 73 80 69 79 64 78 59 77 54 76M60 44 56 48 53 54 49 59M54 76 54 59 49 59M56 114 54 110 50 105 47 102 44 98 41 94M54 76 51 80 47 85 44 89 41 94M15 118 15 117M15 117 15 94 33 94M41 94 33 94M312 21 312 26 311 32 312 37 312 43 312 48M312 21 307 21 301 22 296 24 291 24 285 25M312 48 307 47 302 45 297 44 292 42 288 42 283 40M285 25 283 28M283 28 282 28 282 39M282 39 283 40M314 18 312 21M319 51 313 50M313 50 312 48M284 1 284 25 285 25M260 20 260 28 283 28M260 44 265 43 272 43 277 41 282 39M280 65 280 92 275 92M280 65 282 63M282 63 282 70 300 70M275 92 280 99M300 70 301 73M301 73 299 78 296 82 294 87 291 93 289 97M280 99 289 99 289 97M254 64 260 63 264 65 270 64 275 65 280 65M256 85 275 85 275 92M283 40 283 45 282 51 282 58 282 63M313 50 300 50 300 70M276 111 278 105 280 99M322 84 316 81 311 78 306 76 301 73M315 107 310 105 305 102 299 101 295 98 289 97M178 49 179 55 178 60 179 67M157 80 167 80 167 80M179 67 167 67 167 80M214 50 211 54 208 59 205 65 202 69M179 67 185 68 191 69 196 68 202 69M225 82 220 82 214 81 207 80M202 69 204 74 207 80M196 123 170 123 170 123M196 123 197 118 198 113 199 108 200 102M170 123 172 118 174 111 176 106 177 100 179 95M179 95 185 96 191 98 198 99M200 102 198 99M203 132 203 123 196 123M170 123 170 123M230 109 230 102 200 102M167 80 171 86 175 91 179 95M207 80 204 84 203 89 200 94 198 99M431 35 424 36 420 36 414 36M431 35 433 31 438 27 441 22M414 36 414 4 417 4M441 22 441 6 432 6M432 6 419 6 419 3M443 50 439 44 434 40 431 35M413 37 414 36M454 24 454 22 441 22M451 -6 446 -2 442 1 438 3 432 6M140 221 134 223 129 224 123 227 116 228M132 264 128 260 126 257 121 253 118 248 115 244M116 228 117 234 115 239 115 244M101 283 100 278 98 273 96 269 93 263 92 259M115 244 110 247 105 249 102 253 97 256 92 259M252 645 258 644 263 642 269 641 275 641 280 639M263 608 257 611 252 613 245 615 240 617M263 608 263 625 286 625M286 625 286 636 283 636M280 639 283 636M280 639 279 639 279 653M177 539 180 536 185 532 188 528M212 561 213 554 215 549 216 543M216 543 212 541 207 539 202 535 197 534 193 531 188 528M158 497 163 500 168 501 172 503 177 504 182 507 187 508 192 510M188 528 190 523 191 517 192 510M567 655 551 655 551 634M567 655 567 672 547 672M547 672 542 670 536 667 531 664M551 634 551 647 530 647M531 664 531 658 531 653 530 647M666 551 664 556 661 560 658 564M682 583 686 577 689 573 693 568 696 564M682 583 675 582 670 582M670 582 670 564 658 564M633 515 627 518 621 521M633 515 637 519 643 522 647 525M634 544 617 544 617 531M634 544 641 541 646 536M621 521 621 531 617 531M647 525 647 531 646 536M638 497 633 497 633 515M606 492 606 502 604 502M604 502 621 502 621 521M660 519 654 523 647 525M666 551 662 547 656 544 651 541 646 536M633 555 634 555 634 544M633 555 638 558 642 560 647 563 651 566M658 564 651 566M771 543 775 542 781 541 786 540 790 538M771 543 767 538 766 532 762 528M790 538 789 533 788 527 788 522 787 516M762 528 768 528 768 513M768 513 774 514 781 516 787 516M787 572 782 568 778 565 774 562 769 559 765 555M765 555 768 550 771 543M800 544 800 538 790 538M798 507 792 512 787 516M764 505 768 513M746 530 746 510 735 510M746 530 762 530 762 528M614 448 632 448 632 437M604 433 605 427 606 422 608 416M632 437 631 432 631 425M608 416 613 412M631 425 631 412 613 412M639 462 641 457 644 452 647 448M664 472 663 466 663 461 663 454M663 454 647 454 647 448M684 444 682 444M663 454 667 452 673 448 678 446 682 444M632 437 637 441 643 444 647 446M647 448 647 446M708 331 705 335 703 340 701 345 699 350 696 354M726 359 720 365M720 365 696 365 696 354M732 817 732 794 731 794M716 824 712 819 708 816 705 813 701 810 697 806M731 794 726 793 721 791 716 791 712 789M712 789 708 792M745 783 741 788 736 791 731 794M710 767 712 767 712 789M662 594 662 596 647 596M662 594 666 588 670 582M651 566 651 583 639 583M639 583 643 590 647 596M593 509 599 506 604 502M593 509 593 531 591 531M617 531 610 531 610 535M610 535 610 531 591 531M655 676 655 671 672 671M655 676 653 680 650 686 648 690 645 696 643 700M646 707 651 710 656 712 661 714 667 716M685 679 679 676 672 671M685 679 676 679 676 712M676 712 667 716M701 726 697 723 691 720 686 718 680 715 676 712M696 678 696 679 685 679M664 732 667 732 667 716M679 614 678 614 678 639M679 614 671 612M671 612 647 612 647 625M678 639 674 643 670 647M670 647 665 644 660 641 655 638 650 635 646 633M647 625 646 633M680 614 679 614M680 614 682 609 684 604 686 599 689 594M682 583 686 588 689 594M662 594 662 612 671 612M640 612 642 606 645 601 647 596M640 612 642 616 645 620 647 625M714 640 708 640 703 639 698 640 694 640 688 639 683 640 678 639M714 640 713 646 711 651 710 657 709 663 708 669M672 671 670 671 670 647M636 640 635 645 632 650 631 656 630 660M636 640 646 640 646 633M630 660 634 663 638 664 642 667 647 670 651 674 655 676M612 628 616 630 622 633 627 636 631 637 636 640M612 628 611 626M640 612 634 611 629 608 623 607M611 626 611 607 623 607M589 653 591 654M589 653 589 658 581 658M591 654 591 667 615 667M581 658 581 663 581 668 581 674 580 678 579 684M579 684 581 686M615 667 615 667 615 677M612 628 591 628 591 654M611 626 607 622 603 620 598 617 594 613 590 610M590 610 589 610M580 618 580 610 589 610M580 618 582 623 583 628 584 634 586 639 587 643 588 649 589 653M567 655 581 655 581 658M551 634 551 630M551 630 554 628 559 623 563 621 567 617M580 618 574 617 567 617M630 660 625 662 620 664 615 667M765 555 760 558 755 560M760 590 750 590 750 580M750 580 751 575 753 569 754 565 755 560M746 530 736 530 736 546M755 560 736 560 736 546M720 541 726 544 731 546M731 546 736 546M755 645 748 645 743 643 738 642 733 641 727 640 722 639 716 638M747 612 741 611 734 609M734 609 731 613 729 618 726 624 722 628 719 633 716 638M680 614 685 615 691 616 696 617 701 619 705 620M714 640 715 638M705 620 707 624 711 629 713 633 715 638M715 638 716 638M601 807 601 806M492 487 488 487 488 510M492 487 487 485 484 482 479 480 474 477 469 475 465 473M465 473 459 473 459 479M459 479 459 511 461 511M488 510 483 512 477 513 472 515 467 516M467 516 461 511M511 472 507 472 507 481M501 446 494 445 489 446 484 445M507 481 507 487 492 487M466 465 465 473M368 652 362 650 356 647M343 660 347 655 350 649M350 649 356 647M295 445 301 447 306 447 312 449 318 450M327 422 327 429 328 435 328 442M328 442 323 446 318 450M288 485 285 481 283 476 280 471 278 467 276 462M288 485 292 487 298 489M318 450 317 455 316 459 316 465 314 470 313 475 312 479M298 489 303 487 308 483 312 479M387 395 388 400 388 405 389 411 388 416M422 386 421 391 420 396 420 401 419 406 418 412 417 417 417 421M417 421 411 420 405 419 400 419 393 416 388 416M458 415 436 415 436 381M435 434 427 435M417 421 421 427 423 431 427 435M348 405 353 409 357 412 361 416 366 420 370 423 375 427M388 416 388 427 375 427M459 479 432 479 432 481M427 435 425 439 422 444 420 448 416 453M432 481 430 477 426 472 425 467 422 463 418 457 416 453M461 511 455 513 449 514 443 515 437 516M432 481 421 481 421 500M437 516 433 512 429 508 425 504 421 500M543 420 543 417M543 417 539 414 534 412 529 410 524 407M509 438 509 432 508 426 507 420 507 415M524 407 524 415 507 415M468 415 473 411 477 406 480 403 485 399M507 415 503 412 499 408 494 405 489 402 485 399M467 372 485 372 485 396M485 396 485 399M746 57 770 57 770 53M746 57 747 63 747 69 747 74M747 74 751 78 755 81M755 81 759 79 763 75 767 73 771 69M771 69 771 53 770 53M721 79 721 74 747 74M741 52 746 57M756 92 756 87 755 81M785 78 785 69 771 69M797 59 797 48 773 48M773 48 770 53M715 21 721 19 725 18 731 16 735 15 741 12M741 39 746 34M746 34 746 12 741 12M745 4 745 12 741 12M805 11 808 17 811 22 814 27M805 11 811 11 811 -1M785 -7 787 -1 790 5 792 11M792 11 798 11 805 11M682 270 679 276M709 289 709 299 686 299M679 276 681 282 682 288 685 293 686 299M705 323 705 318 692 318M692 318 684 318 684 304M686 299 684 304M678 334 692 334 692 318M678 334 685 334 685 350M696 354 695 355M685 350 689 352 695 355M627 55 621 57 615 61M639 84 639 84 616 84M616 84 615 78 614 72 614 67 615 61M599 44 599 58 607 58M607 58 615 61M554 220 554 232 558 232M530 253 534 253 539 251 545 249 550 248M558 232 558 248 550 248M576 210 576 217 555 217M576 210 590 210 590 219M558 232 558 242 581 242M590 219 588 224 586 229 583 235 581 242M550 248 564 248 564 266M564 266 583 266 583 245M581 242 583 245M632 218 632 221 609 221M605 194 602 194 602 216M605 194 610 191 616 189M609 221 602 216M546 130 552 130 557 130 563 131 569 132 574 132M571 100 567 102 563 104 558 107 553 110 549 113M571 100 576 104 580 106M574 132 575 127 577 121 578 116 579 112 580 106M551 79 571 79 571 99M551 79 557 75 561 71 565 68 571 64M571 99 573 95 575 90 577 84 579 79 582 75 583 70M583 70 576 64M576 64 571 64M544 78 551 79M571 100 571 99M552 45 556 48 560 52 563 56 568 60 571 64M583 40 581 47 579 52 578 58 576 64M587 70 592 67 598 65 601 62 607 58M587 70 583 70M576 428 577 422 578 417M608 416 602 415 596 415 590 414 585 413M578 417 585 413M450 279 447 282 444 287 441 290 438 295 435 298 431 303M450 279 456 280 461 280 466 280 471 281M471 281 474 285 478 289 481 294 484 298M456 322 452 320 448 315 444 312 440 309 435 306 431 303M456 322 461 320 466 317 471 315 475 312 479 310 485 308M485 308 484 308 484 298M442 264 445 269 447 273 450 279M429 303 431 303M486 249 483 255 482 260 479 264 476 271 474 276 471 281M509 283 504 285 500 289 494 293 490 295 484 298M455 337 456 332 457 327 456 322M532 270 537 273 541 277M511 283 523 283 523 298M541 277 537 277 537 294M523 298 531 295 537 294M485 308 489 313M523 298 522 302 521 308 520 314M489 313 494 313 500 313 505 314 510 314 515 314 520 314M67 545 72 544 76 543 81 543 87 542 91 541 96 541M67 545 63 539 60 535 56 531M59 519 57 525 56 531M59 519 64 517 67 514 72 513 77 511 82 509 87 507M87 507 91 511 93 515 97 520 100 524 104 528M104 528 101 534 96 541M66 560 67 560 67 545M108 568 96 568 96 541M32 537 38 536 44 533 51 532 56 531M47 497 49 501 51 506 54 511 57 515 59 519M91 494 89 500 87 507M124 525 120 526 114 526 109 527 104 528M106 821 110 816 114 811 118 806M76 806 75 808M145 816 140 813 134 810 128 806M63 806 75 806 75 808M355 815 356 806M391 810 388 806M231 753 231 760 221 760M221 760 223 762M220 759 221 760M15 117 -3 117 -3 100M-14 16 -14 2 13 2M35 20 28 20M28 20 25 16 21 12 16 7 13 2M138 197 118 197 118 188M116 228 112 225 107 222 103 217 99 214M99 214 102 210 105 205 108 201 111 196 115 193 118 188M114 166 112 168M118 188 116 184 116 178 114 173 112 168M78 161 89 161 89 169M112 168 89 168 89 169M323 643 327 637M327 637 332 639 336 642 341 644 346 647 350 649M283 636 283 647 297 647M297 647 304 653M183 470 187 473 190 478 194 480 198 485M192 510 194 508M198 485 194 485 194 508M216 543 225 538M225 538 221 538 221 511M194 508 194 511 221 511M534 703 532 711M534 703 534 697 551 697M553 697 555 701M553 697 551 697M547 672 547 697 551 697M513 689 516 691 521 694 525 697 531 700 534 703M513 689 513 677 512 677M512 677 531 677 531 664M579 684 553 684 553 697M513 689 508 693M479 670 480 667M512 677 508 673 503 669 498 665M480 667 498 667 498 665M647 416 647 408 648 401M647 416 651 420 654 423 658 427M666 427 658 427M666 427 668 422 670 418 673 414 676 409 679 405M679 405 679 405M679 405 679 394 661 394M648 401 652 398 656 394M656 394 661 394M631 398 631 412 613 412M631 398 648 398 648 401M631 425 636 422 641 418 647 416M613 412 613 412M647 446 649 442 652 437 656 433 658 427M682 444 666 444 666 427M694 414 694 405 679 405M692 383 692 374 688 374M692 383 690 388 687 391 684 396 681 400 679 405M672 375 677 374 682 374 688 374M672 375 672 394 661 394M709 387 713 383 716 379 720 375M709 387 711 393 711 399 712 404M720 375 725 378 729 381 734 383 738 386M712 404 712 405 734 405M738 386 738 398 740 398M734 405 740 398M720 365 720 375 720 375M692 383 697 385 703 386 709 387M688 374 689 369 692 365 693 359 695 355M705 413 709 410 712 404M754 372 754 386 738 386M738 425 738 420 737 416 735 411 734 405M758 401 752 400 746 399 740 398M624 583 621 589 616 595M624 583 624 564 617 564M607 595 607 595 616 595M607 595 604 590 600 585 597 581 594 576 590 572M617 564 609 561M609 561 604 563 598 564 593 566M590 572 593 566M639 583 634 582 629 582 624 583M623 607 620 602 616 595M633 555 628 559 622 561 617 564M590 610 607 610 607 595M589 610 589 582 576 582M576 582 580 579 586 575 590 572M610 535 609 541 609 546 609 551 609 555 609 561M581 550 581 566 593 566M581 550 586 550 586 535M586 535 591 531M567 617 565 613 564 606 561 602 559 597M576 582 575 582M575 582 559 582 559 597M532 610 532 630 551 630M532 610 535 605 539 598 543 594M559 597 559 594 543 594M729 600 724 599 717 599 711 598M729 600 729 582 740 582M740 582 725 582 725 572M709 596 710 590 711 586 711 580 712 575M709 596 711 598M712 575 718 574 725 572M734 609 731 605 729 600M705 620 707 614 708 608 709 603 711 598M750 580 740 580 740 582M731 546 731 572 725 572M689 594 694 594 699 595 704 595 709 596M697 563 702 568 706 572 712 575M581 550 581 553 557 553M575 582 571 578 565 575 560 571 557 568 552 564M557 553 554 559 552 564M519 579 520 574 522 568 522 562 524 558M519 579 525 581 530 583 536 584 541 586M541 586 541 565 550 565M524 558 550 558 550 565M541 586 543 594M550 565 552 564M507 481 510 485 514 490 517 493 521 497M488 510 493 514 498 519 503 522M503 522 509 520 515 518 521 517M521 497 521 505 521 510 521 517M540 476 540 484 539 491M521 497 521 491 539 491M390 648 392 646M392 646 398 647 403 646 409 646 416 646M416 647 416 646M454 628 451 633 447 638 445 642M454 628 477 628 477 632M473 658 474 653 475 647 475 643 477 637 477 632M473 658 473 657 457 657M450 655 450 653M449 653 447 647 445 642M480 667 473 667 473 658M416 646 421 641M421 641 421 642 445 642M421 641 421 637 421 630 422 625 422 619 423 615M454 628 451 622 450 618 447 613 445 609 443 603M443 603 438 607 433 609 428 612 423 615M327 637 325 630M356 647 356 642 356 636 357 631 357 625 358 620 358 616 358 609M358 609 351 610 345 609M325 630 330 625 333 622 337 618 340 613 345 609M286 625 298 625 298 616M325 630 320 627M311 623 305 619 298 616M467 516 467 522 468 526 468 532 468 537 468 542 469 548M495 549 497 543 498 539 500 532 501 528 503 522M495 549 487 554M469 548 475 550 481 553 487 554M519 579 514 582 509 585M495 549 500 549 505 551 510 551 516 553 521 554M509 585 504 583 499 580 496 578 490 575M524 558 521 554M487 554 487 575 490 575M345 609 345 587 320 587M298 616 298 589 306 589M306 589 313 588 320 587M524 407 524 407 524 389M485 396 485 385 497 385M524 389 519 388 513 387 508 387 502 387 497 385M773 47 773 33 761 33M773 47 787 47 787 31M761 33 763 28 764 21 767 15M767 15 773 18 778 19 784 21M784 21 785 25 787 31M773 48 773 47M746 34 746 33 761 33M807 36 802 35 798 34 792 33 787 31M762 5 765 9 767 15M792 11 788 15 784 21M613 412 604 412 604 389M585 413 586 407 585 400 585 395 585 388M585 388 591 388 598 388 604 389M631 398 630 392 628 387 627 381 625 377M625 377 618 377 611 379M604 389 608 384 611 379M672 375 672 359 662 359M685 350 685 358 662 358M662 358 662 359M656 394 653 389 651 384 649 379 645 374 643 369M662 359 657 362 653 364 647 367 643 369M625 377 630 371 634 367M643 369 634 367M590 219 597 216 602 216M583 245 588 248M609 221 609 242 609 242M609 242 588 242 588 248M580 140 601 140 601 145M580 140 566 140 566 158M566 158 568 162 572 167 576 172 578 176 581 180M606 152 601 145M606 152 603 155 599 160 596 164 593 169 590 172 587 177 583 180M583 180 582 181M581 180 582 181M550 157 556 157 561 157 566 158M574 132 580 140M550 189 554 188 561 186 565 185 571 184 576 182 581 180M605 194 583 194 583 180M613 155 606 152M576 210 577 203 579 197 579 192 580 186 582 181M591 106 594 110 599 115 603 120 607 124M591 106 594 102 598 95 603 91M611 89 603 91M611 89 614 94 617 98 621 105 625 109M607 124 611 121 617 119 622 117M625 109 625 117 622 117M580 106 585 105 591 106M601 145 607 145 607 124M587 70 587 91 603 91M616 84 611 89M647 98 641 101 635 104 631 106 625 109M642 136 638 132 634 129 629 125 626 121 622 117M543 417 543 406 552 406M578 417 573 414 568 411 563 408 559 405M552 406 559 405M541 277 555 277 555 276M564 266 564 267M564 267 559 272 555 276M22 56 16 56 16 77M22 56 18 49 14 44M16 77 16 81 3 81M14 44 9 44 4 43 -1 43 -7 43M49 59 22 59 22 56M33 94 29 90 24 85 20 81 16 77M28 20 28 44 14 44M83 199 87 205 92 209 96 214M83 199 77 199 71 198 65 198 59 198M96 214 74 214 74 236M74 236 70 231 65 228 62 224 57 220 54 216M59 198 58 204 56 209 54 216M99 214 96 214M89 169 89 199 83 199M49 181 52 186 55 192 59 198M31 220 35 222M35 222 35 216 54 216M38 247 44 247 50 247 56 247 61 246 68 246 73 246M38 247 38 261 28 261M28 261 28 263M28 263 53 263 53 280M61 278 64 272 67 268 70 261 72 257 75 251M61 278 61 280 53 280M75 251 73 246M35 222 36 228 36 233 37 237 38 242 38 247M74 236 74 246 73 246M2 242 7 245 10 248 14 252 20 254 23 257 28 261M15 280 17 276 21 272 24 267 28 263M41 310 44 305 45 300 46 294 49 290 51 285 53 280M80 293 75 289 70 285 66 282 61 278M92 259 92 251 75 251M232 501 232 477 220 477M232 501 237 501 242 502 247 503 253 503M254 501 254 496 254 491 252 485 252 480 251 476 251 470 249 465M254 501 253 503M239 462 239 468 224 468M239 462 244 464 249 465M224 468 220 477M198 485 203 482 209 481 214 479 220 477M221 511 226 506 232 501M246 541 246 514 257 514M246 541 240 539 236 540 229 538 225 538M257 514 255 509 253 503M288 485 282 488 277 489 273 491 269 494 263 496 259 498 254 501M267 459 262 461 255 463 249 465M206 450 209 453 213 458 216 461 220 465 224 468M236 426 236 432 237 437 237 442 237 447 238 451 239 457 239 462M455 818 458 812 461 806M433 815 433 806 428 806M392 810 399 806M486 614 491 613 496 611 501 609 506 607 511 606M486 614 485 618 483 624 482 629M482 629 482 642 506 642M519 612 514 612 514 639M519 612 511 606M514 639 506 642M509 585 511 585 511 606M473 594 476 591 479 587 483 583 487 579 490 575M473 594 476 600 480 603 482 609 486 614M477 632 482 629M443 603 447 603 447 593M473 594 468 594 462 594 457 593 451 594 447 593M498 665 500 659 502 654 504 649 506 642M530 647 525 644 520 641 514 639M532 610 525 610 519 612M557 553 554 547 553 543 551 537M521 554 523 550 525 544 528 541 531 535 533 531M533 531 533 537 551 537M521 517 521 522 528 522M533 531 528 531 528 522M586 535 581 531 575 529 569 526 565 522M551 537 551 522 565 522M392 646 391 641 390 634 389 629 388 623M358 609 362 607M388 623 383 621 379 617 376 615 371 612 367 610 362 607M423 615 417 613 411 611 404 609M388 623 391 620 396 615 400 612 404 609M298 489 302 489 302 515M312 479 317 481 322 483 327 486 334 487 338 489 344 491M344 493 344 491M344 493 341 497 340 503 337 508 335 512 331 517M331 517 326 517 321 516 316 517 312 516 306 516 302 515M257 514 257 529 293 529M302 515 293 515 293 529M297 578 297 573 297 568 297 563 296 558 296 552 297 548M297 578 297 583 264 583M264 583 261 579 255 576 251 572M293 542 297 548M293 542 254 542 254 553M254 553 254 572 251 572M263 608 263 604 263 598 265 593 265 588 264 583M306 589 302 584 297 578M231 580 237 578 241 576 246 573 251 572M246 541 250 547 254 553M293 529 293 535 293 542M388 461 387 466 384 470M388 461 387 457 384 453 381 449 379 443 376 438 374 434M384 470 384 475 354 475M374 434 369 437 363 439 359 441 354 443 349 444 344 446 340 448M340 448 342 452 345 457 346 461 349 465 352 471 354 475M416 453 411 456 405 456 399 458 394 459 388 461M403 504 403 500 421 500M403 504 398 502 394 500M394 500 392 495 391 489 390 484 387 480 386 475 384 470M375 427 374 434M371 513 367 509 362 505 358 502 353 499 349 497 344 493M371 513 376 510 381 507 384 504 390 502 394 500M344 491 347 485 351 481 354 475M328 442 328 448 340 448M474 353 479 352 484 350 488 348 494 346M497 385 497 366 502 366M502 366 502 346 494 346M489 313 495 313 495 344M494 346 495 344M678 334 672 333 667 331M662 358 660 354 658 348 657 344M657 344 659 339 663 336 667 331M684 304 678 304 674 305 667 306 663 307M663 307 658 313M667 331 665 326 662 322 661 318 658 313M621 324 627 326 633 328 640 329M621 324 620 330 617 335 617 341 615 347M615 347 615 354 629 354M629 354 629 339 642 339M640 329 642 339M604 350 604 347 615 347M604 350 602 355 600 360M600 360 602 365 606 370 608 374 611 379M634 367 633 360 629 354M657 344 652 341 646 339 642 339M658 313 650 315M650 315 647 320 643 325 640 329M679 276 674 278 668 279 662 281 657 284M663 307 663 287 655 287M657 284 655 287M604 350 596 350 596 340M596 340 597 334 597 327 598 321M621 324 616 316M616 316 598 316 598 321M524 389 524 388M502 366 507 367 513 367 518 367 525 367M524 388 525 388 525 367M552 406 550 402 548 397 546 391 543 387M524 388 531 387 537 387 543 387M600 360 594 362 588 366 582 367M585 388 576 388 576 381M582 367 579 374 576 381M543 387 552 387 552 371M532 359 525 359 525 367M532 359 550 359 550 368M550 368 552 371M559 405 575 405 575 381M552 371 557 374 561 376 566 376 570 378 575 381M576 381 575 381M537 294 542 299 547 304M555 276 556 280 559 286 560 292 561 296M547 304 552 301 557 298 561 296M565 519 561 516 557 513 553 509 548 507M565 519 567 514 571 509 575 504M575 504 572 504 572 492M548 497 548 502 548 507M548 497 554 495 559 491 563 489M563 489 572 489 572 492M528 522 533 517 539 514 544 510 548 507M565 522 565 519M593 509 593 504 575 504M584 479 580 484 576 487 572 492M539 491 544 495 548 497M555 470 558 475 559 480 562 485 563 489M445 590 445 551 460 551M445 590 440 587 436 585 431 582 427 579 423 576M423 576 423 571 422 565 422 559 421 553 421 547M460 551 454 549 449 547 445 545 439 543 434 541M434 541 427 544 421 547M447 593 445 590M469 548 460 551M404 609 403 603 402 597 401 591 399 585M399 585 399 576 423 576M437 516 434 516 434 541M403 504 404 510 404 514 403 520 403 525 403 531 404 536 404 541M404 541 409 543 416 546 421 547M404 541 384 541 384 551M399 585 393 582M384 551 385 556 386 561 388 566 390 572 391 576 393 582M362 607 364 601 366 596M366 596 371 593 375 591 380 588 384 586 388 584 393 582M495 344 500 342 506 342 512 342 517 341M532 359 532 354 530 349M530 349 526 346 522 343 517 341M520 314 524 318M517 341 518 334 520 329 522 324 524 318M547 304 547 310 545 314 544 320M524 318 529 317 534 319 539 320 544 320M643 227 643 233M671 252 665 251 658 252M643 233 643 252 658 252M657 284 656 279 655 274 653 267 652 262M658 252 658 262 652 262M588 248 589 254 592 259 594 264 596 270M564 267 568 270 573 274 579 276 584 280 588 282M596 270 592 276 588 282M588 315 589 309 591 304 593 297 593 291M588 315 574 315 574 318M574 318 573 312 571 308 569 303 567 298M567 298 570 296 576 293 579 290 584 288 588 285M593 291 588 285M561 296 567 298M588 282 588 285M573 319 569 320 564 322 558 322 553 325 548 325M573 319 574 325 575 331 577 336 577 341M563 348 572 348 572 347M563 348 560 344 555 340 552 337 548 332M548 332 548 325M577 341 572 341 572 347M574 318 573 319M544 320 548 325M596 340 589 341 583 342 577 341M598 321 598 315 588 315M582 367 572 367 572 347M550 368 553 362 557 358 560 353 563 348M530 349 535 345 539 341 544 337 548 332M366 531 361 531 356 532 350 532 345 532 340 533M366 531 369 535 373 539 375 545 379 549M379 549 375 553 370 556 367 558 361 563 357 566 353 569M340 533 338 538 336 544 333 548M333 548 341 548 341 566M341 566 347 568 353 569M371 513 370 518 368 525 366 531M331 517 335 522 337 527 340 533M384 551 379 549M366 596 353 596 353 569M297 548 297 548 333 548M320 587 323 583 329 579 332 575 337 571 341 566M609 242 612 245 616 249 621 252M596 270 603 269 610 268M610 268 614 262 617 258 621 252M643 233 639 237 635 241 630 243 626 247 622 251M621 252 622 251M652 262 647 264 641 265 636 266M622 251 625 254 629 259 633 262 636 266M622 283 630 284M622 283 617 288 612 292 608 295M632 304 633 298 633 293 634 288M632 304 627 307 621 311 616 314M634 288 630 284M616 314 608 314 608 295M610 268 613 272 619 279 622 283M636 266 630 266 630 284M593 291 599 293 602 294 608 295M650 315 646 311 642 309 637 307 632 304M655 287 649 287 644 288 638 287 634 288M616 316 616 314" fill="none" stroke="#606060" stroke-width="1" shape-rendering="crispEdges"/>
<g fill="#004364" stroke="#000" stroke-width="1" stroke-linejoin="round" shape-rendering="crispEdges">
<path d="M-2.0 815.0 -2.0 704.6 0.7 703.8 4.1 703.3 6.9 703.4 9.8 703.2 12.0 702.2 15.5 701.1 17.6 699.6 21.1 698.3 24.0 698.1 28.1 699.0 30.2 701.8 28.1 706.0 30.2 708.1 33.3 707.9 36.6 706.7 38.8 706.1 42.4 706.9 45.0 706.0 47.1 704.6 48.5 706.7 45.7 707.4 45.6 709.8 45.9 711.9 45.0 715.1 49.9 715.9 51.1 718.6 50.8 721.4 52.0 725.0 55.3 725.1 59.1 724.3 61.9 726.4 64.9 727.6 68.9 728.5 71.0 726.4 72.3 729.4 73.1 732.7 76.6 735.5 77.3 739.8 79.9 740.5 82.2 742.6 84.4 740.5 86.6 740.7 90.0 741.9 94.2 743.3 98.4 745.4 101.2 748.9 105.4 750.3 106.2 753.1 104.0 757.3 104.0 762.0 107.1 761.9 109.4 762.1 112.5 762.0 112.5 757.3 113.3 754.2 114.8 752.0 115.3 748.9 117.7 747.6 120.9 746.1 123.1 745.0 125.5 742.5 127.2 741.2 132.2 741.2 134.2 742.7 135.0 745.4 137.7 746.1 140.6 746.1 142.9 748.2 146.2 750.3 147.6 753.1 146.2 757.3 146.2 762.0 146.5 759.7 148.0 757.0 148.9 754.1 149.5 750.7 149.8 748.1 150.0 745.0 149.9 742.4 150.0 740.6 149.2 737.7 149.0 735.0 148.8 732.7 150.0 730.5 150.7 726.9 150.4 724.8 151.0 722.0 151.3 718.9 153.0 716.0 155.0 714.0 158.0 713.0 159.7 714.7 162.1 715.3 165.0 717.0 167.2 719.2 169.1 720.3 172.0 722.0 173.4 725.2 175.1 727.8 176.0 730.0 177.2 732.4 178.8 735.5 181.1 737.0 182.0 740.0 181.3 742.1 181.1 745.0 181.4 747.2 181.0 750.0 179.8 752.9 179.8 756.1 180.1 759.3 179.0 762.0 181.6 762.2 184.5 761.4 187.4 762.4 190.0 762.4 191.9 761.9 194.2 762.2 196.7 761.4 199.6 761.5 202.4 761.4 204.5 761.5 207.3 761.8 209.8 762.5 213.2 761.5 215.3 761.8 218.1 761.5 221.4 762.7 223.5 762.0 225.6 761.4 228.6 761.7 231.4 762.0 231.9 758.9 230.7 757.3 231.4 754.0 230.0 749.7 229.1 746.8 228.2 744.3 227.2 742.6 223.7 744.0 220.1 744.0 218.8 742.4 216.1 740.1 214.5 738.4 210.5 738.1 207.5 737.0 204.7 736.7 201.9 735.6 201.6 732.4 201.9 730.0 199.5 729.3 196.2 727.2 193.9 725.5 190.6 723.0 188.2 721.9 185.0 720.1 182.2 716.6 185.0 715.6 188.5 714.5 187.8 710.3 189.7 708.2 192.0 707.5 192.1 704.4 193.4 701.9 195.9 702.1 199.1 701.9 201.1 699.0 201.9 696.2 202.9 694.1 203.4 690.4 203.3 687.8 203.2 684.3 204.0 681.5 200.5 682.2 198.6 684.6 197.6 687.8 197.1 691.5 196.2 694.1 191.3 694.8 187.1 692.7 186.4 688.5 182.2 689.2 178.0 687.8 176.6 683.6 179.4 680.1 182.7 680.0 185.0 680.1 187.3 678.0 189.2 675.1 190.7 672.9 193.4 670.2 196.2 668.1 199.6 668.2 201.9 667.4 205.0 666.3 207.5 665.3 208.4 663.6 210.3 661.1 212.2 659.8 214.5 657.6 215.9 654.8 212.4 652.0 215.9 649.8 219.0 650.4 220.8 651.2 220.8 656.2 223.0 655.5 225.2 654.9 228.0 652.7 230.0 652.0 231.8 650.5 235.2 650.5 237.0 649.1 238.6 648.2 241.2 646.3 244.7 646.5 246.6 646.4 249.1 645.6 252.5 646.3 255.9 648.6 258.1 650.5 260.9 653.4 263.8 653.6 266.5 652.7 268.6 651.4 270.8 649.1 275.0 650.5 277.5 651.5 279.2 653.4 283.4 652.0 286.2 648.4 288.7 647.8 291.8 647.7 294.2 647.4 296.9 646.7 300.0 646.3 297.0 647.4 294.8 647.4 292.6 648.5 290.0 648.5 292.7 650.8 295.6 652.0 298.4 652.8 301.3 652.8 304.1 654.1 305.0 650.5 306.2 647.8 306.2 644.7 307.6 640.8 306.4 637.2 306.2 633.7 306.8 631.0 306.9 628.1 308.7 625.3 311.1 622.5 316.0 623.2 320.2 625.3 320.3 629.2 320.2 632.3 320.0 635.9 320.9 639.4 322.0 641.9 323.7 645.0 325.9 647.1 327.3 649.2 329.1 652.4 330.8 654.8 335.0 656.9 333.6 659.1 336.4 661.9 339.5 661.1 341.6 660.5 344.0 660.0 346.5 659.1 349.1 658.3 351.8 658.1 355.0 657.1 358.1 655.4 360.3 654.8 363.2 654.5 366.4 652.5 368.7 652.0 370.7 651.4 373.2 650.5 375.7 650.6 379.3 650.3 381.4 649.2 383.5 649.3 386.8 648.2 389.7 649.2 391.3 648.9 394.1 648.0 396.9 647.8 400.4 648.1 402.0 647.4 405.3 647.2 407.7 647.0 410.9 647.1 414.0 646.6 416.6 647.3 418.7 647.3 422.3 647.7 425.0 647.8 427.2 648.8 431.0 649.0 432.9 648.3 435.6 649.3 439.0 649.2 441.5 649.6 444.4 651.5 447.7 651.5 450.0 652.7 448.4 654.1 450.4 655.6 453.5 656.2 455.2 656.1 458.3 657.6 461.0 658.8 462.6 660.7 465.8 661.8 468.1 662.6 470.3 664.7 473.1 666.4 476.6 667.5 478.6 669.0 480.8 671.6 482.6 672.2 485.0 674.5 487.1 675.6 488.7 676.9 490.7 678.3 493.4 680.1 495.5 681.5 498.5 683.1 500.5 685.1 503.3 686.3 505.9 687.7 508.9 690.0 507.5 692.8 506.8 697.0 507.6 699.9 507.3 702.6 508.2 705.4 509.7 707.2 510.5 710.0 511.0 712.5 515.9 713.2 518.7 713.4 521.4 712.7 524.4 712.5 528.1 712.5 531.4 711.1 533.5 710.6 536.4 709.4 538.4 708.3 541.1 706.9 543.4 705.4 546.9 704.7 548.7 703.9 551.4 701.8 553.7 701.5 556.7 699.8 559.7 698.7 561.3 696.7 563.8 695.5 566.5 694.2 568.9 692.7 571.8 692.0 575.0 690.0 578.4 688.6 580.6 687.2 582.0 683.0 583.8 681.5 586.2 678.7 588.3 677.6 590.2 676.7 593.3 675.9 596.6 674.5 600.0 673.1 595.6 673.4 598.0 673.8 600.6 674.0 604.1 674.8 606.3 674.4 609.0 673.6 612.5 674.1 614.1 676.0 616.4 678.8 618.1 681.1 620.9 682.4 623.3 683.7 625.3 684.0 628.0 685.3 631.1 686.6 633.2 689.0 634.7 691.0 637.8 692.3 639.8 694.6 640.9 697.0 641.5 698.7 643.4 700.8 644.4 703.6 645.7 705.9 646.2 707.8 648.7 709.8 651.2 710.9 653.3 712.0 657.5 714.1 656.6 716.1 656.0 719.1 656.1 721.9 656.5 724.7 658.0 726.7 658.9 728.9 661.4 730.6 663.6 731.0 665.9 733.1 668.7 735.3 670.6 736.9 673.0 738.7 674.6 740.9 675.8 744.4 678.2 746.1 680.0 748.6 680.3 750.6 682.2 752.9 682.8 755.6 687.0 757.0 690.9 757.3 694.0 756.3 697.5 756.8 701.1 757.7 701.7 761.1 702.5 764.0 703.9 767.0 704.6 769.7 706.7 774.0 707.1 776.2 706.6 779.2 707.7 782.0 707.7 784.3 707.2 787.4 708.0 790.5 708.2 793.5 708.2 795.7 708.0 798.6 708.0 800.9 708.6 803.7 708.7 807.4 707.3 809.5 708.4 812.9 708.0 815.0Z"/>
<path d="M356.1 640.8 358.9 642.2 361.7 642.2 363.1 645.0 360.3 647.8 358.8 650.3 357.5 653.4 354.3 655.0 351.9 655.5 348.7 656.7 346.2 657.6 343.4 656.2 344.1 652.0 347.6 654.1 349.3 652.8 351.9 651.3 355.4 649.2 356.8 645.0Z"/>
<path d="M375.1 631.6 377.9 634.4 380.0 635.9 382.1 635.1 385.6 635.1 387.6 632.6 388.4 630.9 390.5 633.0 389.9 635.5 388.4 638.0 391.3 640.0 393.3 641.5 395.5 643.0 398.3 643.6 394.0 645.0 391.2 645.5 388.4 647.1 384.3 647.8 381.4 648.5 379.0 649.2 376.3 650.2 374.4 651.3 371.3 652.4 368.7 652.7 365.9 649.9 368.8 649.2 373.0 647.8 375.5 645.2 377.2 643.6 378.0 641.0 377.9 638.0 376.9 634.5Z"/>
<path d="M417.2 643.6 420.8 644.3 423.8 642.4 427.1 640.8 429.2 638.0 432.0 641.5 436.1 641.6 439.0 641.5 441.7 640.7 444.7 640.1 447.1 639.2 450.0 639.4 447.0 640.5 444.7 641.3 442.2 641.2 440.0 642.2 443.5 640.8 447.0 640.1 450.0 641.7 453.4 642.2 454.5 645.4 454.8 647.8 451.8 648.7 448.4 648.5 446.2 648.1 443.1 647.0 440.0 647.1 444.7 646.4 441.4 645.6 437.6 645.0 434.4 645.9 430.6 646.4 427.5 646.1 425.5 646.4 422.2 647.1 419.7 645.2Z"/>
<path d="M473.7 656.2 477.0 656.2 480.8 655.5 484.2 657.7 486.4 660.5 488.9 658.8 491.2 657.5 493.4 656.2 496.2 652.7 499.1 654.1 497.0 655.8 495.4 658.8 494.1 660.5 491.0 661.5 487.8 663.3 486.2 666.0 483.6 667.5 485.6 668.5 487.8 670.3 490.2 670.7 493.2 671.7 496.2 673.1 498.7 674.6 501.9 676.6 504.8 678.1 507.5 678.7 506.1 681.5 504.0 680.5 501.3 679.7 499.1 678.7 496.1 677.1 492.9 675.7 490.6 674.5 488.4 672.7 485.0 671.9 482.2 670.3 481.9 666.4 480.8 663.3 477.7 662.3 475.1 661.9 474.3 659.0Z"/>
<path d="M509.6 692.8 513.1 695.6 515.1 698.8 515.9 701.2 516.0 703.5 514.6 707.1 514.8 709.7 511.0 711.1 510.6 708.2 509.2 705.4 508.9 701.3 508.5 698.4 508.9 696.1Z"/>
<path d="M801 586L800.500 600L802 612L800.500 626L802 638L801 648L812 648L812 586Z" stroke="none"/>
<path d="M783.3 731.2 785.9 733.0 787.9 734.2 789.8 735.9 790.6 737.8 792.4 740.1 793.9 741.8 795.1 744.5 795.7 747.1 796.4 749.4 794.5 751.0 792.4 752.7 790.9 753.9 789.2 752.3 788.0 749.7 786.4 747.9 785.3 745.4 785.0 743.5 783.8 740.7 783.3 738.8 783.4 736.3 783.2 733.5Z" fill="#2b496b" stroke="none"/>
</g>
<path d="M789.6 642.1 788.6 644.2 787.4 647.3 787.9 649.8 788.8 652.5 786.6 656.2 785.4 660.6 788.1 664.3 787.1 668.7 786.6 671.5 785.1 673.9 786.3 678.3 788.4 680.5 789.7 682.7 789.9 685.1 791.1 688.2 790.9 690.2 791.5 693.3 791.9 696.5 792.2 699.2 792.7 702.4 791.9 705.9 790.4 708.0 789.7 711.5 788.0 714.5 786.7 717.6 787.6 720.3 788.2 723.6 787.0 726.9 785.2 729.7" fill="none" stroke="#000" stroke-width="3.6" shape-rendering="crispEdges"/>
<path d="M789.6 642.1 788.5 644.5 787.4 647.3 788.4 649.8 788.8 652.5 786.6 656.2 785.4 660.6 788.1 664.3 787.1 668.7 786.3 671.2 785.1 673.9 786.3 678.3 787.8 680.7 789.7 682.7 790.0 685.6 790.6 687.8 790.9 690.6 791.5 693.3 792.0 696.6 792.1 699.3 792.7 702.4 791.5 705.7 790.5 708.2 789.7 711.5 787.9 714.5 786.7 717.6 787.7 720.8 788.2 723.6 786.8 727.0 785.2 729.7" fill="none" stroke="#004364" stroke-width="1.6" shape-rendering="crispEdges"/>
<path d="M789.0 574.8 791.9 574.0 793.7 576.7 796.3 572.7 798.8 574.3 800.9 574.1 802.6 572.6 804.5 574.1M791.9 574.0l1.8 -2.6M796.3 572.7l1.9 -2.0M800.9 574.1l-0.6 2.3M804.5 574.1l1.3 -0.5M796.0 580.0 797.6 579.9 799.6 581.8 801.4 579.4 804.3 577.9 806.4 581.4M797.6 579.9l1.1 -3.2M801.4 579.4l-1.9 -3.1M806.4 581.4l1.7 -1.7M793.0 588.0 795.6 589.8 797.6 587.0 800.6 588.5 802.5 589.0 804.4 587.0M795.6 589.8l-2.0 1.8M800.6 588.5l1.7 0.9M804.4 587.0l1.8 -3.3M786.0 595.5 787.9 595.4 790.8 597.5 792.9 594.4 795.0 595.5 797.9 594.1 800.6 596.5 803.3 596.7M787.9 595.4l0.4 -1.2M792.9 594.4l-0.7 -1.0M797.9 594.1l1.1 -2.9M803.3 596.7l-1.2 1.8M795.0 601.0 796.9 599.1 798.4 601.2 800.4 603.1 803.2 603.1 805.1 599.2M796.9 599.1l-1.6 -0.0M800.4 603.1l0.8 -0.4M805.1 599.2l-1.1 -0.6M792.0 607.3 794.4 608.1 797.1 608.8 799.5 605.6 802.3 606.4M794.4 608.1l0.3 -0.9M799.5 605.6l1.0 -2.1M796.0 613.0 797.9 611.9 799.6 614.7 802.0 612.2 804.1 615.2M797.9 611.9l0.0 -1.9M802.0 612.2l1.2 1.1M785.0 618.4 788.0 616.7 790.2 619.8 793.0 620.2 794.5 617.5 796.2 617.0 799.2 618.8 802.1 617.8M788.0 616.7l1.5 -0.4M793.0 620.2l-1.0 1.9M796.2 617.0l1.8 -2.8M802.1 617.8l0.4 0.8M793.0 624.0 794.8 623.4 796.5 622.7 798.4 624.4 800.9 622.7 802.4 623.2M794.8 623.4l0.7 -2.2M798.4 624.4l-0.8 -2.1M802.4 623.2l1.2 0.3M797.0 629.0 798.6 627.2 800.7 629.2 803.1 627.2M798.6 627.2l-1.3 1.4M803.1 627.2l-0.4 -1.5M792.0 634.0 794.0 636.0 795.9 634.3 798.0 633.6 800.8 636.2 802.8 632.7 805.4 632.7M794.0 636.0l-2.0 2.8M798.0 633.6l-0.3 2.2M802.8 632.7l-0.4 2.7M794.0 640.0 796.2 638.5 797.7 640.2 800.2 641.8 801.8 640.5 803.9 640.0 805.6 639.0M796.2 638.5l0.1 3.0M800.2 641.8l-1.6 -0.1M803.9 640.0l1.2 3.3M788.0 647.3 789.8 645.7 792.7 649.4 794.9 645.3 797.8 646.8 800.7 647.8 803.4 645.8 806.1 646.1M789.8 645.7l-0.4 2.4M794.9 645.3l1.3 -2.2M800.7 647.8l-1.1 -0.7M806.1 646.1l0.1 -0.8M790.0 652.0 791.7 650.9 794.3 653.7 795.8 652.3 798.5 650.0 801.2 650.3M791.7 650.9l0.4 0.4M795.8 652.3l0.5 -1.4M801.2 650.3l-0.3 0.6" fill="none" stroke="#000" stroke-width="2.2" stroke-linejoin="round" shape-rendering="crispEdges"/>
<clipPath id="ck0"><path d="M204.0 680.8 204.1 678.8 204.7 675.9 207.3 676.4 210.3 677.3 210.9 676.2 214.5 673.6 216.6 673.0 220.3 673.2 222.2 671.6 224.2 669.4 226.4 668.0 228.6 668.1 227.4 670.2 227.3 672.6 228.6 675.1 227.2 675.6 226.2 677.6 224.4 680.8 226.3 683.5 226.7 683.1 227.9 686.4 226.8 687.8 227.2 688.7 225.9 693.3 223.7 693.4 224.7 697.2 224.4 699.1 221.3 702.0 220.1 701.9 220.8 706.1 221.5 707.5 220.4 705.7 216.6 706.1 216.4 709.1 212.9 708.9 213.1 711.0 211.8 709.6 208.9 710.3 209.5 712.4 207.5 715.9 206.4 716.2 203.3 718.7 202.6 722.9 201.9 724.4 201.2 725.9 202.4 728.5 202.6 731.4 200.7 732.5 201.9 735.6 199.7 735.3 200.2 733.5 197.4 731.5 196.1 729.0 196.2 727.2 194.8 725.3 193.7 724.5 190.6 723.0 189.0 723.2 185.6 722.7 185.0 720.1 184.0 718.0 182.2 716.6 185.2 715.2 188.0 715.5 188.5 714.5 187.7 713.3 187.8 710.3 189.7 707.9 192.0 707.5 193.5 703.2 193.4 701.9 197.3 701.1 199.1 701.9 200.4 701.5 201.2 698.6 201.9 696.2 201.6 692.5 201.1 690.9 203.3 689.7 203.3 687.8 203.5 686.7 202.6 682.2Z"/></clipPath><g clip-path="url(#ck0)" shape-rendering="crispEdges"><path d="M204.0 680.8 204.1 678.8 204.7 675.9 207.3 676.4 210.3 677.3 210.9 676.2 214.5 673.6 216.6 673.0 220.3 673.2 222.2 671.6 224.2 669.4 226.4 668.0 228.6 668.1 227.4 670.2 227.3 672.6 228.6 675.1 227.2 675.6 226.2 677.6 224.4 680.8 226.3 683.5 226.7 683.1 227.9 686.4 226.8 687.8 227.2 688.7 225.9 693.3 223.7 693.4 224.7 697.2 224.4 699.1 221.3 702.0 220.1 701.9 220.8 706.1 221.5 707.5 220.4 705.7 216.6 706.1 216.4 709.1 212.9 708.9 213.1 711.0 211.8 709.6 208.9 710.3 209.5 712.4 207.5 715.9 206.4 716.2 203.3 718.7 202.6 722.9 201.9 724.4 201.2 725.9 202.4 728.5 202.6 731.4 200.7 732.5 201.9 735.6 199.7 735.3 200.2 733.5 197.4 731.5 196.1 729.0 196.2 727.2 194.8 725.3 193.7 724.5 190.6 723.0 189.0 723.2 185.6 722.7 185.0 720.1 184.0 718.0 182.2 716.6 185.2 715.2 188.0 715.5 188.5 714.5 187.7 713.3 187.8 710.3 189.7 707.9 192.0 707.5 193.5 703.2 193.4 701.9 197.3 701.1 199.1 701.9 200.4 701.5 201.2 698.6 201.9 696.2 201.6 692.5 201.1 690.9 203.3 689.7 203.3 687.8 203.5 686.7 202.6 682.2Z" fill="#000"/><path d="M223 673h1v1h-1zM182 713h2v1h-2zM215 713h3v1h-3zM208 706h3v1h-3zM195 714h3v1h-3zM192 685h1v1h-1zM227 687h2v1h-2zM186 686h2v1h-2zM198 669h1v2h-1zM217 712h3v2h-3zM219 724h3v2h-3zM228 731h1v1h-1zM182 673h1v2h-1zM183 719h1v1h-1zM192 675h1v1h-1zM221 693h1v1h-1zM194 734h3v2h-3zM214 721h3v1h-3zM214 707h1v1h-1zM222 674h2v2h-2zM216 668h2v1h-2zM211 678h2v1h-2zM196 681h2v1h-2zM223 672h1v1h-1zM226 701h1v1h-1zM222 723h3v1h-3zM200 695h1v2h-1zM182 689h2v1h-2zM194 688h2v1h-2zM206 710h3v1h-3zM206 728h2v2h-2zM226 668h1v1h-1zM228 697h3v1h-3zM195 718h3v2h-3zM186 689h1v1h-1zM183 682h1v2h-1zM192 712h1v2h-1zM183 671h1v1h-1zM226 673h1v2h-1zM184 676h3v1h-3zM194 676h2v1h-2zM197 694h1v1h-1zM184 672h1v2h-1zM222 704h2v1h-2zM190 680h1v1h-1zM202 711h2v1h-2zM183 712h2v1h-2zM185 715h2v2h-2zM214 728h2v2h-2zM183 720h1v1h-1zM215 680h2v1h-2zM227 674h3v2h-3zM195 679h3v1h-3zM192 723h1v2h-1zM194 704h1v1h-1zM204 730h1v1h-1zM226 691h2v2h-2zM204 733h2v2h-2zM192 704h1v2h-1zM196 731h1v1h-1zM222 678h2v2h-2zM217 681h2v1h-2zM188 719h2v2h-2zM187 722h1v1h-1zM195 706h2v1h-2zM216 732h1v1h-1zM222 697h2v1h-2zM216 672h2v2h-2zM202 734h1v1h-1zM224 709h1v1h-1zM210 700h3v1h-3zM190 710h2v2h-2zM226 698h3v1h-3zM199 706h3v1h-3zM228 687h1v2h-1zM202 734h2v1h-2zM197 709h1v1h-1zM228 681h1v2h-1zM188 693h2v1h-2zM191 706h2v1h-2zM199 693h1v2h-1zM188 703h1v1h-1zM211 672h1v1h-1zM209 696h3v2h-3zM200 727h1v1h-1zM198 719h1v2h-1zM197 723h3v2h-3zM223 721h1v2h-1zM228 697h1v2h-1zM189 726h2v1h-2zM198 680h2v1h-2zM207 688h2v1h-2zM212 726h1v2h-1zM208 734h1v2h-1zM202 669h2v1h-2zM188 672h2v2h-2zM195 688h1v2h-1zM204 680h3v1h-3zM216 694h2v2h-2zM183 715h3v1h-3zM208 726h1v2h-1zM193 718h3v1h-3zM228 713h1v1h-1zM199 716h2v1h-2zM182 677h2v1h-2zM222 713h3v1h-3zM188 696h2v2h-2zM207 735h1v1h-1zM211 695h1v1h-1zM186 692h2v2h-2zM217 696h1v1h-1zM224 720h2v1h-2zM217 684h2v1h-2zM196 702h2v2h-2zM198 722h1v1h-1zM182 703h2v1h-2zM223 706h2v1h-2zM213 722h3v2h-3zM187 714h1v1h-1zM206 675h1v2h-1zM202 685h3v1h-3zM222 669h1v1h-1zM186 705h2v2h-2zM188 686h1v1h-1zM210 712h1v1h-1zM207 689h3v2h-3zM220 679h3v2h-3zM201 693h2v2h-2zM195 735h1v2h-1zM210 682h3v1h-3zM198 721h1v1h-1zM212 731h3v1h-3zM212 727h1v2h-1zM213 699h2v1h-2zM216 668h1v1h-1zM211 731h2v1h-2zM205 722h2v2h-2zM186 691h2v2h-2zM223 671h1v2h-1zM184 710h1v2h-1zM212 730h1v1h-1zM195 721h1v1h-1zM188 714h2v1h-2zM215 694h2v1h-2zM203 722h2v2h-2zM185 705h2v1h-2zM213 719h2v2h-2zM199 732h2v1h-2zM223 731h1v1h-1zM194 708h2v1h-2zM219 679h1v1h-1zM228 719h3v2h-3zM185 719h2v1h-2zM182 673h1v1h-1zM220 675h3v2h-3zM221 716h3v1h-3zM222 678h1v1h-1zM224 726h1v1h-1zM224 691h1v1h-1zM188 669h2v1h-2zM201 701h2v1h-2zM208 672h2v1h-2zM209 674h2v2h-2zM215 673h1v1h-1zM218 719h2v1h-2zM182 717h3v2h-3zM224 687h2v1h-2zM217 681h1v2h-1zM212 695h1v2h-1zM182 722h1v1h-1zM225 683h1v1h-1zM189 684h2v1h-2zM199 699h2v2h-2zM193 674h2v2h-2zM227 686h1v1h-1zM222 731h2v2h-2zM198 674h1v1h-1zM185 669h3v1h-3zM206 707h2v2h-2zM220 689h2v2h-2zM185 708h2v2h-2zM228 724h2v2h-2zM192 686h1v1h-1zM223 688h2v1h-2zM206 725h2v2h-2zM203 705h2v1h-2zM221 710h3v2h-3zM182 687h3v1h-3zM219 722h1v1h-1zM206 716h3v1h-3zM210 704h1v1h-1zM198 702h2v1h-2zM219 673h2v1h-2zM218 686h2v2h-2zM225 731h2v2h-2zM187 730h2v1h-2zM228 697h2v2h-2zM185 718h2v2h-2zM195 700h3v1h-3zM206 726h3v1h-3zM216 713h1v1h-1zM207 734h2v2h-2zM202 729h3v2h-3zM194 692h1v1h-1zM187 691h2v1h-2zM218 713h2v2h-2zM191 699h1v1h-1zM205 681h2v2h-2zM211 678h1v1h-1zM220 671h2v1h-2zM215 670h1v1h-1zM195 730h3v2h-3zM195 701h2v1h-2zM188 725h3v2h-3zM190 700h1v1h-1zM194 691h2v1h-2zM183 674h1v2h-1zM205 726h2v1h-2zM220 718h1v2h-1zM187 700h2v2h-2zM196 679h3v1h-3zM193 725h1v1h-1zM197 696h1v1h-1zM198 713h1v2h-1zM183 674h2v2h-2zM227 729h1v1h-1zM191 708h1v1h-1zM225 706h3v2h-3zM210 681h2v1h-2zM205 700h2v1h-2zM205 729h2v1h-2zM210 698h1v2h-1zM182 727h1v1h-1zM192 696h1v2h-1zM205 685h2v1h-2zM206 670h1v1h-1zM203 709h1v1h-1zM189 714h1v1h-1zM196 675h1v2h-1zM210 686h2v1h-2zM199 721h2v1h-2zM191 671h2v2h-2zM200 710h1v1h-1zM213 681h2v1h-2zM212 682h1v2h-1zM185 695h3v1h-3zM200 683h2v1h-2zM205 723h2v1h-2zM197 680h2v1h-2zM208 688h1v2h-1zM200 686h1v1h-1zM214 711h3v1h-3zM210 668h3v1h-3zM193 714h2v1h-2zM208 695h2v2h-2zM193 685h1v2h-1zM196 690h1v2h-1zM187 679h3v2h-3zM213 703h1v1h-1zM190 692h3v1h-3zM194 669h1v2h-1zM228 734h2v2h-2zM185 734h2v1h-2zM200 731h1v1h-1zM208 729h1v2h-1zM199 699h1v2h-1zM205 672h1v2h-1zM205 668h2v2h-2zM210 734h1v1h-1zM204 699h2v2h-2zM206 675h2v1h-2zM228 731h2v2h-2zM183 735h3v1h-3zM183 699h1v1h-1zM221 691h1v1h-1zM201 700h3v1h-3zM183 680h1v1h-1zM183 727h3v1h-3zM226 724h1v1h-1zM188 690h1v1h-1zM189 727h2v2h-2zM214 703h1v1h-1zM189 719h1v2h-1zM219 697h1v1h-1zM224 727h2v1h-2zM183 717h2v2h-2zM220 735h1v1h-1zM185 714h2v1h-2zM197 710h2v2h-2zM202 719h3v1h-3zM202 734h1v2h-1zM204 699h2v2h-2zM222 669h2v1h-2zM215 691h1v1h-1zM209 693h3v2h-3zM183 696h1v1h-1zM207 726h1v1h-1zM184 702h3v1h-3zM222 672h3v1h-3zM198 683h3v1h-3zM209 698h1v1h-1zM189 707h2v2h-2zM192 683h1v2h-1zM214 702h1v1h-1zM219 686h2v1h-2zM214 684h2v1h-2zM218 704h2v1h-2zM187 704h2v2h-2zM226 696h2v1h-2zM217 714h2v2h-2zM201 729h2v1h-2zM183 699h2v1h-2zM194 733h3v1h-3zM219 718h1v1h-1zM192 698h2v2h-2zM202 730h2v1h-2zM195 705h1v1h-1zM192 676h3v1h-3zM210 675h3v1h-3zM210 713h1v2h-1zM196 687h2v1h-2zM224 713h1v2h-1zM194 703h3v1h-3zM212 702h1v1h-1zM188 668h2v2h-2zM219 683h2v1h-2zM218 687h2v1h-2zM221 682h2v1h-2zM226 726h2v2h-2zM204 705h2v1h-2zM215 717h2v1h-2zM213 716h2v1h-2zM193 706h1v1h-1zM218 716h3v1h-3zM187 710h2v2h-2zM197 709h1v1h-1zM182 671h1v1h-1zM218 731h2v2h-2zM201 723h3v2h-3zM228 723h2v1h-2zM204 673h3v2h-3zM204 725h1v2h-1zM186 735h1v1h-1zM208 715h3v1h-3zM223 687h1v1h-1zM213 719h2v2h-2zM219 711h3v2h-3zM187 689h2v1h-2zM205 677h2v2h-2zM193 682h2v2h-2zM203 733h2v2h-2zM192 735h2v2h-2zM195 732h1v1h-1zM193 675h3v2h-3zM188 713h3v2h-3zM222 673h2v1h-2zM182 707h3v1h-3zM201 718h1v2h-1zM182 671h1v1h-1zM213 702h3v2h-3zM191 693h2v2h-2zM189 686h1v2h-1zM214 681h1v1h-1zM186 689h3v1h-3zM211 723h1v2h-1zM182 709h1v2h-1zM197 713h2v1h-2zM184 702h1v2h-1zM186 712h1v1h-1zM221 717h1v1h-1zM196 718h3v1h-3zM210 674h3v1h-3zM197 696h1v1h-1zM219 690h2v1h-2zM211 706h2v2h-2zM198 731h1v1h-1zM225 717h3v1h-3zM208 707h2v2h-2zM213 670h1v1h-1zM193 689h2v1h-2zM193 668h2v1h-2zM217 714h1v1h-1zM216 717h2v1h-2zM223 676h1v1h-1zM204 699h2v1h-2zM211 704h2v1h-2zM209 672h2v2h-2zM183 711h1v1h-1zM227 684h1v1h-1zM199 684h3v1h-3zM211 698h1v1h-1zM204 695h2v1h-2zM222 694h2v1h-2zM214 694h1v1h-1zM225 684h2v2h-2zM210 715h3v1h-3zM207 733h1v1h-1zM189 733h1v2h-1zM199 717h1v2h-1zM227 686h2v1h-2zM206 679h1v1h-1zM202 692h1v1h-1zM217 714h3v1h-3zM194 676h2v1h-2zM196 704h1v2h-1zM207 704h2v1h-2zM211 684h2v1h-2zM183 714h2v1h-2zM183 727h1v1h-1zM204 680h1v1h-1zM189 702h3v2h-3zM196 673h2v1h-2zM220 688h2v1h-2zM201 687h2v2h-2zM184 707h1v2h-1zM196 731h3v1h-3zM209 712h1v1h-1zM223 704h1v2h-1zM220 674h1v2h-1zM189 672h2v1h-2zM204 679h2v2h-2zM207 696h2v2h-2zM187 712h2v1h-2zM203 732h2v2h-2zM185 694h2v2h-2zM214 684h2v1h-2zM184 701h1v2h-1zM192 698h3v1h-3zM197 675h1v1h-1zM204 720h1v1h-1zM222 707h1v1h-1zM225 730h2v1h-2zM227 698h1v2h-1zM226 724h1v2h-1zM204 706h1v2h-1zM191 698h2v2h-2zM189 722h1v2h-1zM224 687h3v1h-3zM207 694h1v2h-1zM200 669h2v1h-2zM195 673h1v1h-1zM201 693h1v2h-1zM201 725h1v1h-1zM202 724h2v2h-2zM205 705h1v2h-1zM186 673h1v1h-1zM213 678h2v2h-2zM218 701h1v2h-1zM213 723h2v1h-2zM216 709h1v1h-1zM187 704h3v2h-3zM223 700h1v1h-1zM190 671h1v1h-1zM191 705h2v1h-2zM222 735h1v1h-1zM228 707h3v1h-3zM206 691h2v1h-2zM196 715h1v2h-1zM205 700h1v1h-1zM184 681h3v2h-3zM227 719h1v1h-1zM213 722h2v2h-2zM192 706h3v2h-3zM222 678h1v2h-1zM196 688h1v1h-1zM222 719h1v1h-1zM210 729h1v1h-1zM228 715h1v1h-1zM221 733h2v1h-2zM200 677h1v2h-1zM227 721h2v1h-2zM210 669h1v2h-1zM192 716h2v1h-2zM210 712h3v1h-3zM212 678h3v1h-3zM215 726h2v2h-2zM222 687h2v2h-2zM221 678h1v2h-1zM225 710h3v2h-3zM201 721h2v1h-2zM224 685h2v1h-2zM215 671h1v1h-1zM225 725h1v1h-1zM224 715h3v2h-3zM208 714h3v1h-3zM218 724h2v1h-2zM189 697h1v1h-1zM217 682h1v1h-1zM223 680h1v2h-1zM224 700h2v1h-2zM217 726h1v2h-1zM218 682h3v2h-3zM218 678h2v2h-2zM186 724h1v2h-1zM217 732h1v2h-1zM228 733h1v1h-1zM225 718h3v1h-3zM194 728h1v1h-1zM205 675h2v1h-2zM185 715h1v1h-1zM226 695h2v1h-2zM189 685h2v1h-2zM221 693h3v1h-3zM228 713h1v1h-1zM203 669h2v1h-2zM197 715h3v2h-3zM215 713h2v1h-2zM220 713h1v1h-1zM217 709h3v1h-3zM184 699h2v1h-2zM194 725h1v2h-1zM210 682h1v1h-1zM189 677h2v1h-2zM191 705h2v1h-2zM219 700h3v2h-3zM199 724h1v1h-1zM203 687h2v2h-2zM212 672h1v1h-1zM193 718h2v1h-2zM226 725h2v1h-2zM221 734h1v1h-1zM203 735h1v1h-1zM190 673h1v1h-1zM205 727h2v2h-2zM211 717h2v1h-2zM182 710h3v1h-3zM203 697h1v1h-1zM211 673h1v2h-1zM224 686h2v1h-2zM199 676h3v1h-3zM204 735h3v1h-3zM226 672h3v1h-3zM194 722h3v2h-3zM188 714h2v1h-2zM191 677h2v1h-2zM205 733h1v1h-1zM217 719h2v1h-2zM227 711h2v1h-2zM214 715h1v1h-1zM204 687h1v1h-1zM182 726h2v1h-2z" fill="#004364"/><path d="M207 706h1v2h-1zM186 686h2v2h-2zM201 700h3v2h-3zM224 711h1v1h-1zM219 678h3v1h-3zM201 713h2v1h-2zM226 722h1v1h-1zM202 690h2v1h-2zM216 670h1v2h-1zM199 698h1v1h-1zM185 719h2v1h-2zM220 704h3v2h-3zM188 693h1v2h-1zM185 684h3v1h-3zM187 677h3v1h-3zM228 685h1v1h-1zM199 669h2v1h-2zM195 709h2v2h-2zM183 730h2v2h-2zM225 711h1v1h-1zM208 673h1v2h-1zM221 710h2v2h-2zM207 700h2v1h-2zM183 708h3v2h-3zM202 675h2v2h-2zM227 710h1v1h-1zM183 687h1v1h-1zM215 679h2v1h-2zM209 712h3v2h-3zM219 687h3v2h-3zM203 697h3v1h-3zM227 729h1v2h-1zM201 726h3v1h-3zM205 734h3v1h-3zM190 700h1v2h-1zM212 680h2v1h-2zM222 697h2v1h-2zM183 685h1v1h-1zM216 732h1v2h-1zM193 701h3v1h-3zM191 690h1v2h-1zM183 712h1v1h-1zM213 695h2v1h-2zM211 695h2v1h-2zM188 669h1v2h-1zM207 712h1v1h-1zM218 716h2v1h-2zM224 696h1v1h-1zM183 701h2v1h-2zM196 713h1v1h-1zM209 703h2v1h-2zM195 688h2v1h-2zM190 706h2v1h-2zM203 668h2v1h-2zM192 708h3v2h-3zM210 695h3v1h-3zM195 714h1v1h-1zM193 723h1v1h-1zM225 671h1v1h-1zM182 685h2v1h-2zM214 713h1v1h-1zM211 718h1v1h-1zM203 718h2v1h-2zM219 698h1v2h-1zM226 669h1v1h-1zM214 697h3v1h-3zM226 681h1v1h-1zM202 676h1v1h-1zM213 685h3v1h-3zM182 690h1v2h-1zM216 686h3v2h-3zM189 735h2v1h-2zM186 712h1v1h-1zM228 677h2v2h-2zM193 669h2v1h-2zM186 673h1v2h-1zM185 720h3v1h-3zM199 669h2v2h-2zM184 726h3v1h-3zM217 710h2v2h-2zM227 702h2v1h-2zM202 721h2v1h-2zM206 717h2v1h-2zM222 668h1v2h-1zM214 700h3v2h-3zM206 698h1v2h-1zM189 679h3v1h-3zM227 674h2v2h-2zM217 709h2v2h-2zM224 708h2v2h-2zM182 728h2v2h-2zM203 716h1v2h-1zM206 713h1v1h-1zM215 702h3v2h-3zM225 709h1v2h-1zM216 696h3v1h-3zM198 728h2v2h-2zM219 729h3v1h-3zM191 676h3v1h-3zM215 694h3v1h-3zM205 698h1v1h-1zM224 726h1v2h-1zM223 673h2v1h-2zM205 722h1v1h-1zM191 700h2v1h-2zM205 713h3v2h-3zM201 725h1v1h-1zM207 705h2v2h-2zM189 725h2v2h-2zM193 734h1v1h-1zM225 684h2v1h-2zM215 698h3v1h-3zM215 711h2v1h-2zM183 693h1v2h-1zM198 675h3v1h-3zM201 703h2v1h-2zM197 701h2v1h-2zM215 731h1v1h-1zM190 722h2v2h-2zM205 673h2v1h-2zM205 673h2v1h-2zM209 700h2v1h-2zM206 684h3v1h-3zM227 715h1v2h-1zM195 710h1v1h-1zM210 716h2v2h-2zM208 731h1v1h-1zM219 727h2v2h-2zM209 721h2v1h-2zM186 724h2v1h-2zM190 733h1v2h-1zM196 693h2v2h-2zM184 705h3v1h-3zM206 726h1v1h-1zM196 677h3v1h-3zM188 731h1v1h-1zM218 726h1v2h-1zM194 710h2v1h-2zM217 721h3v1h-3zM208 674h1v1h-1zM203 692h3v1h-3zM193 703h3v1h-3z" fill="#5d4f4a"/></g>
<clipPath id="cb0"><path d="M149.8 724.4 149.9 722.1 153.2 720.0 154.1 718.7 153.4 717.2 153.4 713.1 156.9 711.7 157.9 713.4 157.0 716.0 158.3 718.7 159.8 719.9 161.2 719.7 162.6 722.4 165.3 723.0 168.4 724.5 169.5 723.9 172.0 725.6 172.3 727.2 174.0 728.9 176.4 730.0 176.0 729.0 179.4 731.4 181.7 734.3 179.8 734.2 182.2 737.0 179.9 738.2 178.0 741.2 176.1 744.6 176.4 744.7 175.1 746.9 176.2 748.4 174.9 750.8 177.3 753.0 176.6 756.7 173.4 757.9 173.5 756.7 168.9 757.4 169.2 755.6 165.5 757.4 165.2 757.7 162.4 755.6 161.2 757.4 158.3 756.7 158.1 754.5 156.9 751.2 156.1 749.5 158.4 748.9 156.9 745.9 156.9 744.0 157.2 743.4 154.1 738.9 154.3 738.8 154.9 737.0 153.5 734.7 151.4 731.2 151.2 730.0 150.7 726.3Z"/></clipPath><g clip-path="url(#cb0)" shape-rendering="crispEdges"><path d="M149.8 724.4 149.9 722.1 153.2 720.0 154.1 718.7 153.4 717.2 153.4 713.1 156.9 711.7 157.9 713.4 157.0 716.0 158.3 718.7 159.8 719.9 161.2 719.7 162.6 722.4 165.3 723.0 168.4 724.5 169.5 723.9 172.0 725.6 172.3 727.2 174.0 728.9 176.4 730.0 176.0 729.0 179.4 731.4 181.7 734.3 179.8 734.2 182.2 737.0 179.9 738.2 178.0 741.2 176.1 744.6 176.4 744.7 175.1 746.9 176.2 748.4 174.9 750.8 177.3 753.0 176.6 756.7 173.4 757.9 173.5 756.7 168.9 757.4 169.2 755.6 165.5 757.4 165.2 757.7 162.4 755.6 161.2 757.4 158.3 756.7 158.1 754.5 156.9 751.2 156.1 749.5 158.4 748.9 156.9 745.9 156.9 744.0 157.2 743.4 154.1 738.9 154.3 738.8 154.9 737.0 153.5 734.7 151.4 731.2 151.2 730.0 150.7 726.3Z" fill="#004364"/><path d="M163 736h1v1h-1zM173 720h2v1h-2zM154 723h2v1h-2zM160 738h2v2h-2zM174 718h1v1h-1zM156 753h1v2h-1zM182 744h1v1h-1zM180 733h1v1h-1zM154 723h2v1h-2zM168 749h3v2h-3zM154 723h1v1h-1zM166 725h3v1h-3zM151 748h3v1h-3zM149 733h1v1h-1zM168 714h1v1h-1zM171 739h2v1h-2zM170 734h1v1h-1zM168 715h3v1h-3zM155 746h1v1h-1zM174 740h1v1h-1zM151 743h3v1h-3zM175 752h1v1h-1zM171 715h2v2h-2zM159 734h1v2h-1zM154 732h1v2h-1zM179 730h1v1h-1zM155 717h1v1h-1zM158 742h2v2h-2zM156 731h2v1h-2zM159 747h3v1h-3zM181 727h2v1h-2zM167 736h3v1h-3zM157 726h3v2h-3zM164 717h1v1h-1zM152 742h3v1h-3zM163 716h1v1h-1zM165 712h2v1h-2zM182 718h2v2h-2zM156 716h3v1h-3zM163 726h3v2h-3zM152 726h1v2h-1zM170 717h1v1h-1zM160 730h2v1h-2zM178 748h1v1h-1zM169 737h2v1h-2zM154 726h1v2h-1zM181 754h1v1h-1zM171 719h1v1h-1zM163 754h2v2h-2zM153 711h2v1h-2zM180 744h2v1h-2zM153 723h1v1h-1zM175 716h2v2h-2zM159 742h2v1h-2zM165 755h2v1h-2zM178 754h3v1h-3zM176 735h3v1h-3zM156 715h2v1h-2zM164 723h3v1h-3zM164 742h3v2h-3zM152 736h2v2h-2zM170 735h2v1h-2zM163 752h2v2h-2zM176 730h1v1h-1zM180 749h1v1h-1zM179 737h2v2h-2zM168 740h1v1h-1zM162 716h2v1h-2zM178 750h1v1h-1zM170 716h2v1h-2zM177 737h3v1h-3zM156 724h1v1h-1zM160 735h2v1h-2zM158 734h1v1h-1zM171 750h2v1h-2zM180 731h3v2h-3zM161 721h2v2h-2zM149 711h1v1h-1zM164 740h3v2h-3zM165 733h1v2h-1zM181 753h2v1h-2zM165 753h2v1h-2zM181 750h2v1h-2zM166 729h2v1h-2zM173 744h1v2h-1zM180 742h2v2h-2zM150 714h1v2h-1zM173 739h2v2h-2zM158 757h3v2h-3zM178 713h2v1h-2zM157 711h2v1h-2zM161 748h3v2h-3zM151 736h1v2h-1zM166 751h1v1h-1zM150 737h3v1h-3zM154 754h2v1h-2zM172 755h2v1h-2zM159 747h2v1h-2zM171 719h1v2h-1zM152 721h2v2h-2zM182 721h2v1h-2zM168 735h2v2h-2zM160 728h2v1h-2zM161 750h2v1h-2zM174 717h2v1h-2zM174 731h2v1h-2zM166 718h1v2h-1zM177 743h2v2h-2zM159 731h1v1h-1zM166 745h2v2h-2zM175 715h2v1h-2zM172 756h2v2h-2zM167 751h1v1h-1zM177 711h1v2h-1zM168 733h3v1h-3zM165 726h1v2h-1zM155 749h2v2h-2zM156 730h1v2h-1zM160 757h1v1h-1zM174 732h2v1h-2zM180 732h2v1h-2zM158 745h3v1h-3zM167 719h1v1h-1zM153 737h1v2h-1zM149 747h1v2h-1zM176 736h1v2h-1zM166 754h1v1h-1zM163 753h1v2h-1zM156 729h1v2h-1zM173 729h1v2h-1zM173 750h2v2h-2zM153 749h3v2h-3zM166 749h1v1h-1zM168 717h2v2h-2zM154 734h1v2h-1zM182 715h1v1h-1zM162 711h2v2h-2zM157 739h2v2h-2zM152 739h3v2h-3zM151 713h3v1h-3zM156 741h1v1h-1zM170 732h3v2h-3zM163 724h3v1h-3zM167 747h3v2h-3zM150 725h1v1h-1zM181 728h2v1h-2zM153 751h2v2h-2zM154 748h1v1h-1zM173 743h3v1h-3zM163 753h1v1h-1zM170 753h2v1h-2zM179 747h1v1h-1zM178 754h3v1h-3zM161 732h3v1h-3zM156 736h1v1h-1zM161 715h3v1h-3zM177 723h1v1h-1zM161 746h2v2h-2zM150 757h3v2h-3zM150 715h2v1h-2zM175 711h3v1h-3zM171 751h1v2h-1zM169 733h2v1h-2zM151 722h2v1h-2zM150 756h2v1h-2zM170 717h1v1h-1zM179 742h1v1h-1zM169 741h1v1h-1zM182 747h2v2h-2zM173 724h2v1h-2zM150 723h2v2h-2zM176 757h2v1h-2zM176 719h1v1h-1zM156 724h3v2h-3zM173 712h1v1h-1zM178 713h1v2h-1zM153 731h2v2h-2zM178 742h1v1h-1zM164 724h2v1h-2zM155 717h3v1h-3zM161 739h2v2h-2zM177 715h3v2h-3zM152 741h1v1h-1zM164 756h2v2h-2zM179 749h1v1h-1zM180 749h2v1h-2zM164 725h1v1h-1zM163 751h1v1h-1zM155 723h1v1h-1zM178 714h2v1h-2zM163 754h1v2h-1zM175 727h1v1h-1zM178 712h2v1h-2zM155 722h1v2h-1zM159 750h3v1h-3zM155 743h2v1h-2zM153 712h3v2h-3zM154 743h3v2h-3zM153 756h1v2h-1zM167 740h2v2h-2zM149 746h1v1h-1zM160 743h2v1h-2zM156 756h1v2h-1z" fill="#000"/><path d="M176 718h3v1h-3zM182 733h1v1h-1zM164 717h1v1h-1zM166 730h2v1h-2zM158 742h3v2h-3zM170 723h1v1h-1zM153 713h1v2h-1zM162 744h2v1h-2zM175 750h3v2h-3zM162 757h1v1h-1zM152 756h1v2h-1zM157 738h1v1h-1zM167 739h2v2h-2zM157 727h2v1h-2zM150 731h2v1h-2zM159 739h1v2h-1zM179 750h2v1h-2zM164 711h2v2h-2zM150 732h1v2h-1zM171 732h1v1h-1zM170 716h3v1h-3zM155 713h2v1h-2zM170 734h1v2h-1zM156 740h1v1h-1zM182 714h3v1h-3zM175 744h1v2h-1zM162 724h2v1h-2zM165 738h1v1h-1zM177 750h1v2h-1zM167 736h1v1h-1zM165 712h1v2h-1zM162 752h2v2h-2zM158 752h1v2h-1zM153 755h2v1h-2zM153 715h1v2h-1zM149 715h2v1h-2zM158 746h1v2h-1zM180 752h3v2h-3zM166 739h1v1h-1zM165 730h2v1h-2zM160 739h1v1h-1zM170 731h1v1h-1zM173 725h1v1h-1zM171 753h2v1h-2zM149 723h1v1h-1zM159 753h3v1h-3zM165 722h1v1h-1z" fill="#5d4f4a"/></g>
<clipPath id="cb1"><path d="M149.0 719.4 151.8 719.7 154.7 718.0 155.0 718.6 156.9 721.0 160.0 722.2 158.8 723.5 159.7 727.6 162.1 727.7 161.1 729.2 160.8 733.0 161.0 733.2 161.7 736.2 160.1 737.1 158.8 734.5 156.2 736.6 153.3 734.8 150.7 733.2 152.4 731.5 151.2 727.7 149.0 726.4 150.3 723.3 147.5 720.4Z"/></clipPath><g clip-path="url(#cb1)" shape-rendering="crispEdges"><path d="M149.0 719.4 151.8 719.7 154.7 718.0 155.0 718.6 156.9 721.0 160.0 722.2 158.8 723.5 159.7 727.6 162.1 727.7 161.1 729.2 160.8 733.0 161.0 733.2 161.7 736.2 160.1 737.1 158.8 734.5 156.2 736.6 153.3 734.8 150.7 733.2 152.4 731.5 151.2 727.7 149.0 726.4 150.3 723.3 147.5 720.4Z" fill="#004364"/><path d="M159 728h1v1h-1zM147 732h2v1h-2zM150 720h2v2h-2zM162 719h2v1h-2zM162 732h1v1h-1zM160 731h1v1h-1zM153 719h2v1h-2zM161 732h1v1h-1zM148 719h3v1h-3zM162 723h3v2h-3zM159 720h1v1h-1zM148 724h3v1h-3zM157 723h1v1h-1zM162 725h2v1h-2zM151 719h2v2h-2zM157 720h1v1h-1zM158 719h1v2h-1zM162 732h2v1h-2zM147 737h3v1h-3zM162 718h3v2h-3zM154 732h3v1h-3zM158 721h2v1h-2zM148 728h1v2h-1zM154 717h3v1h-3zM149 731h1v1h-1zM156 731h1v1h-1zM156 727h3v1h-3zM149 729h1v2h-1zM152 717h2v1h-2zM154 719h2v1h-2zM162 723h3v1h-3zM153 732h1v1h-1zM161 725h1v1h-1zM148 730h1v1h-1zM160 717h3v1h-3zM152 724h1v1h-1zM155 736h2v1h-2zM159 721h2v1h-2z" fill="#000"/><path d="M150 725h2v1h-2zM151 733h1v2h-1zM157 718h1v1h-1zM160 722h1v2h-1zM161 730h2v2h-2zM154 721h2v2h-2zM160 720h1v1h-1zM150 717h2v1h-2z" fill="#5d4f4a"/></g>
<clipPath id="cb2"><path d="M112.5 758.7 112.4 758.3 114.8 754.5 114.3 753.9 115.7 751.4 115.3 748.9 117.2 746.7 118.2 747.5 120.9 746.1 122.8 745.8 125.4 745.1 124.7 741.0 127.2 741.2 131.0 741.4 132.2 741.2 132.5 743.9 135.0 745.4 137.0 744.9 140.6 746.1 142.0 747.6 144.9 747.5 146.2 750.3 147.6 753.1 148.0 756.3 146.9 758.7 144.8 759.3 143.8 757.2 140.8 759.3 139.5 759.2 135.8 760.2 135.7 757.9 132.5 760.2 129.8 758.4 130.2 760.0 125.8 759.5 124.2 759.3 123.5 757.5 119.7 757.8 117.8 757.2 115.4 758.4 114.3 757.4Z"/></clipPath><g clip-path="url(#cb2)" shape-rendering="crispEdges"><path d="M112.5 758.7 112.4 758.3 114.8 754.5 114.3 753.9 115.7 751.4 115.3 748.9 117.2 746.7 118.2 747.5 120.9 746.1 122.8 745.8 125.4 745.1 124.7 741.0 127.2 741.2 131.0 741.4 132.2 741.2 132.5 743.9 135.0 745.4 137.0 744.9 140.6 746.1 142.0 747.6 144.9 747.5 146.2 750.3 147.6 753.1 148.0 756.3 146.9 758.7 144.8 759.3 143.8 757.2 140.8 759.3 139.5 759.2 135.8 760.2 135.7 757.9 132.5 760.2 129.8 758.4 130.2 760.0 125.8 759.5 124.2 759.3 123.5 757.5 119.7 757.8 117.8 757.2 115.4 758.4 114.3 757.4Z" fill="#004364"/><path d="M141 751h3v2h-3zM134 752h2v1h-2zM123 756h1v2h-1zM122 753h2v1h-2zM130 758h1v2h-1zM127 759h1v1h-1zM131 749h1v1h-1zM141 759h1v1h-1zM112 760h3v1h-3zM147 749h1v1h-1zM112 746h1v2h-1zM127 741h1v1h-1zM123 749h1v1h-1zM113 744h1v1h-1zM124 745h2v1h-2zM116 757h2v1h-2zM130 754h2v1h-2zM133 742h1v1h-1zM122 749h1v1h-1zM115 749h1v2h-1zM133 751h3v1h-3zM121 747h3v2h-3zM115 745h2v1h-2zM130 741h1v1h-1zM116 756h1v1h-1zM121 747h2v1h-2zM126 760h1v2h-1zM142 759h2v1h-2zM112 747h3v1h-3zM118 755h1v1h-1zM144 754h3v2h-3zM133 742h1v1h-1zM113 748h3v1h-3zM125 755h3v1h-3zM123 747h2v2h-2zM128 745h1v1h-1zM126 755h2v2h-2zM131 753h2v2h-2zM131 742h3v1h-3zM117 750h1v1h-1zM144 748h1v1h-1zM127 755h1v1h-1zM132 744h3v2h-3zM145 752h2v2h-2zM131 743h1v2h-1zM116 760h2v1h-2zM142 743h2v2h-2zM144 748h2v1h-2zM142 754h2v2h-2zM140 751h3v1h-3zM118 755h1v2h-1zM129 745h1v2h-1zM120 743h2v2h-2zM114 750h1v2h-1zM133 754h3v1h-3zM121 753h1v2h-1zM115 742h2v2h-2zM120 757h1v2h-1zM116 751h1v2h-1zM138 746h1v1h-1zM136 754h2v1h-2zM119 748h2v2h-2zM119 743h2v2h-2zM136 756h1v1h-1zM130 755h2v2h-2zM124 745h1v1h-1zM118 757h2v1h-2zM113 749h3v1h-3zM121 760h2v1h-2zM123 751h1v2h-1zM138 742h1v1h-1zM148 752h1v1h-1zM114 742h2v1h-2zM132 749h2v1h-2zM135 760h2v1h-2zM136 750h1v1h-1zM112 754h3v1h-3zM115 746h1v1h-1zM128 757h2v1h-2zM139 750h1v1h-1zM146 751h1v1h-1zM123 751h1v2h-1zM146 742h3v1h-3zM133 756h2v2h-2zM125 751h2v1h-2zM116 744h1v1h-1zM113 741h1v1h-1zM116 760h1v1h-1zM115 747h2v2h-2zM137 750h2v1h-2zM131 759h2v1h-2zM134 750h2v2h-2zM118 760h3v2h-3z" fill="#000"/><path d="M116 756h2v1h-2zM112 748h1v1h-1zM135 758h2v2h-2zM119 759h1v1h-1zM148 754h1v2h-1zM120 754h1v1h-1zM145 750h3v2h-3zM134 744h1v2h-1zM115 748h2v2h-2zM139 746h2v2h-2zM116 754h1v1h-1zM131 751h3v2h-3zM123 756h3v2h-3zM112 745h3v1h-3zM147 746h1v1h-1zM147 744h3v1h-3zM115 742h1v2h-1zM113 757h1v2h-1zM141 745h3v1h-3zM121 745h2v1h-2zM139 745h3v2h-3z" fill="#5d4f4a"/></g>
<clipPath id="cb3"><path d="M78.7 741.9 80.8 740.4 84.4 740.5 86.1 741.1 88.2 740.3 88.7 741.6 92.9 743.5 94.2 743.3 95.1 743.9 97.8 745.0 99.8 748.8 101.2 748.9 101.9 750.6 105.2 752.5 106.2 753.1 106.1 756.6 104.7 758.7 102.0 759.8 102.0 757.3 100.1 758.6 95.3 757.4 95.5 759.3 91.4 758.6 90.9 760.3 87.9 759.6 85.6 757.8 84.4 758.7 82.3 756.1 82.9 753.4 81.5 751.7 81.2 748.0 83.0 746.1 79.5 743.0Z"/></clipPath><g clip-path="url(#cb3)" shape-rendering="crispEdges"><path d="M78.7 741.9 80.8 740.4 84.4 740.5 86.1 741.1 88.2 740.3 88.7 741.6 92.9 743.5 94.2 743.3 95.1 743.9 97.8 745.0 99.8 748.8 101.2 748.9 101.9 750.6 105.2 752.5 106.2 753.1 106.1 756.6 104.7 758.7 102.0 759.8 102.0 757.3 100.1 758.6 95.3 757.4 95.5 759.3 91.4 758.6 90.9 760.3 87.9 759.6 85.6 757.8 84.4 758.7 82.3 756.1 82.9 753.4 81.5 751.7 81.2 748.0 83.0 746.1 79.5 743.0Z" fill="#004364"/><path d="M88 743h3v1h-3zM83 753h2v1h-2zM102 758h2v1h-2zM86 755h3v1h-3zM93 758h3v1h-3zM94 745h1v1h-1zM89 752h1v1h-1zM81 751h2v1h-2zM89 752h1v1h-1zM105 758h3v1h-3zM79 755h2v2h-2zM98 752h2v2h-2zM87 745h3v2h-3zM99 740h1v2h-1zM89 752h2v2h-2zM96 747h2v1h-2zM95 757h2v2h-2zM83 749h1v1h-1zM106 740h3v1h-3zM103 755h2v1h-2zM86 751h3v1h-3zM89 757h3v1h-3zM98 755h1v1h-1zM86 752h3v2h-3zM96 748h1v1h-1zM103 752h1v1h-1zM103 760h3v1h-3zM86 750h2v1h-2zM83 752h1v1h-1zM84 746h1v2h-1zM103 744h1v1h-1zM85 747h1v1h-1zM86 743h1v1h-1zM95 757h1v1h-1zM91 746h1v2h-1zM93 752h2v1h-2zM98 745h3v1h-3zM87 741h1v1h-1zM83 743h1v1h-1zM88 760h1v1h-1zM92 745h1v1h-1zM84 759h2v2h-2zM84 751h1v1h-1zM88 752h2v1h-2zM92 747h2v1h-2zM99 745h1v1h-1zM106 744h2v2h-2zM101 760h1v1h-1zM94 759h1v1h-1zM95 758h1v1h-1zM92 740h3v2h-3zM88 752h3v1h-3zM105 741h3v2h-3zM82 755h1v2h-1zM90 745h1v2h-1zM103 756h1v1h-1zM91 746h3v1h-3zM101 753h2v1h-2zM96 759h1v1h-1zM106 752h1v1h-1zM106 746h3v1h-3zM96 750h2v2h-2zM102 757h2v2h-2zM88 745h3v2h-3zM93 748h1v1h-1zM104 741h1v1h-1zM102 742h3v1h-3zM87 758h3v1h-3zM100 740h1v2h-1zM102 744h1v1h-1zM86 743h3v1h-3zM92 748h1v2h-1zM92 760h2v1h-2zM79 755h2v1h-2z" fill="#000"/><path d="M80 760h2v1h-2zM103 751h1v2h-1zM94 756h2v2h-2zM100 760h2v1h-2zM98 750h2v2h-2zM100 755h1v1h-1zM101 744h2v1h-2zM97 757h1v1h-1zM98 752h1v1h-1zM104 756h1v1h-1zM93 740h1v1h-1zM105 741h1v1h-1zM97 755h1v2h-1zM87 750h3v1h-3zM82 760h1v2h-1zM83 756h2v1h-2zM83 745h1v1h-1z" fill="#5d4f4a"/></g>
<clipPath id="cb4"><path d="M140.0 746.9 144.0 746.7 145.6 748.3 145.6 749.0 145.9 754.1 147.1 756.2 148.4 756.7 144.9 756.3 144.6 758.2 141.2 756.4 140.0 756.7 139.9 753.6 138.6 751.4 140.5 749.3Z"/></clipPath><g clip-path="url(#cb4)" shape-rendering="crispEdges"><path d="M140.0 746.9 144.0 746.7 145.6 748.3 145.6 749.0 145.9 754.1 147.1 756.2 148.4 756.7 144.9 756.3 144.6 758.2 141.2 756.4 140.0 756.7 139.9 753.6 138.6 751.4 140.5 749.3Z" fill="#004364"/><path d="M146 749h2v1h-2zM146 756h1v2h-1zM143 752h1v1h-1zM145 753h2v1h-2zM147 751h1v2h-1zM145 758h3v1h-3zM140 751h1v1h-1zM144 747h1v1h-1zM147 750h2v1h-2zM147 754h1v1h-1zM138 751h1v1h-1zM139 750h2v2h-2zM143 755h2v1h-2zM148 749h3v2h-3zM148 748h2v1h-2z" fill="#000"/><path d="M147 749h2v1h-2zM141 757h3v1h-3zM144 746h1v2h-1z" fill="#5d4f4a"/></g>
<g fill="#5d4f4a" stroke="#000" stroke-width="1" shape-rendering="crispEdges">
<path d="M14.1 720.1 16.0 719.1 18.9 718.4 21.1 717.3 23.3 716.2 26.0 715.9 29.0 717.2 32.3 719.4 35.2 720.2 38.7 720.8 39.4 722.9 37.4 724.4 35.1 726.4 33.0 729.9 28.8 729.9 26.8 727.7 23.9 726.4 20.9 725.4 18.3 723.6 16.4 721.8Z"/>
<path d="M65.4 743.3 67.7 742.1 70.3 740.5 74.5 739.8 76.6 742.6 77.3 746.1 79.5 747.2 81.5 748.9 80.8 751.7 77.8 751.8 74.5 751.0 72.5 749.0 69.6 747.5 67.2 745.0Z"/>
<path d="M6.0 713.0 9.8 714.4 11.7 716.8 13.4 718.7 11.4 719.5 8.4 720.1 6.0 719.4 5.9 716.7Z"/>
</g>
<g fill="none" stroke="#000" stroke-width="1.3" shape-rendering="crispEdges">
<path d="M290.0 660.7 293.8 660.5 298.4 660.2 301.9 660.7 305.3 661.6 308.3 661.9"/>
<path d="M313.9 663.6 317.7 663.2 321.7 662.6 325.1 662.7 328.5 662.1 332.6 662.2 336.4 661.9"/>
<path d="M249.0 678.0 252.5 682.2 253.4 685.6 254.6 689.2 254.1 692.4 253.9 696.2 252.8 699.7 251.1 703.3 249.0 706.5 246.9 710.3 243.8 712.8 241.2 715.9 238.4 718.0"/>
<path d="M235.6 723.0 233.5 725.8"/>
<path d="M227.9 728.6 224.4 731.4"/>
<path d="M228.6 662.5 232.3 661.8 235.6 661.8 233.5 664.6"/>
<path d="M241.2 664.6 245.3 663.3 249.7 661.8"/>
<path d="M258.1 661.1 262.0 661.8 266.5 662.5 270.7 663.4 275.0 663.9 278.4 664.2 281.2 665.2 284.8 665.3"/>
<path d="M241.2 701.9 242.9 699.4 245.4 696.2 249.7 693.4"/>
<path d="M549.7 712.5 552.0 710.9 554.9 709.0 557.0 707.2 559.5 705.4 561.6 704.1 564.8 701.6 567.3 700.0 569.3 698.4"/>
<path d="M527.2 713.6 530.5 713.1 534.4 711.7 538.4 711.1 542.9 709.9 546.9 708.3"/>
<path d="M365.9 650.6 368.9 649.7 372.3 649.1 375.4 648.9 378.4 648.1 381.4 647.8 384.4 647.9 387.3 647.3 391.0 647.0 393.8 647.1 396.9 646.4 400.6 646.5 404.1 646.4 407.2 645.7 410.9 646.0 414.1 646.2 418.1 646.1 421.4 646.3 425.0 646.7 428.3 646.8 432.0 647.2 435.5 647.9 439.0 648.1"/>
</g>
<g fill="#2a4568" stroke="#1c3454" stroke-width="0.8" shape-rendering="crispEdges">
<path d="M300.0 58.9 302.2 57.4 304.0 56.6 306.2 55.4 308.6 56.1 311.4 57.1 312.4 59.3 313.6 60.8 314.9 63.3 315.8 65.6 316.4 67.0 317.6 69.4 319.3 70.1 321.5 71.3 323.7 72.1 321.9 74.0 320.2 75.6 320.0 77.6 320.6 80.3 320.2 82.6 321.0 84.6 322.0 87.6 322.8 89.6 322.5 91.6 322.8 94.4 322.8 96.7 321.3 94.1 320.9 92.1 319.3 89.6 318.5 88.1 316.8 86.4 315.8 84.1 314.9 82.6 315.1 80.2 314.2 78.5 314.2 76.3 314.1 73.8 312.7 72.0 311.6 70.0 310.8 68.5 309.7 66.8 308.3 65.4 307.5 63.1 306.2 61.5 303.8 62.3 301.7 62.5 300.0 63.3 299.7 61.4Z"/>
<path d="M367.8 260.9 369.6 259.9 372.0 259.5 374.0 258.3 375.9 259.4 377.9 260.4 379.6 261.8 381.0 262.7 383.5 263.4 385.3 263.8 387.8 264.4 389.8 265.3 390.9 267.6 392.5 269.9 393.3 272.0 391.1 271.7 388.3 271.9 386.3 272.0 384.6 270.4 382.6 269.2 381.1 268.3 379.3 267.1 377.0 266.2 375.0 265.6 372.7 264.5 370.5 263.6Z"/>
<path d="M367.8 261.8 369.7 261.4 371.6 260.4 374.0 260.0 376.0 261.2 378.6 262.5 380.7 263.3 382.8 264.4 384.4 265.2 386.9 266.4 389.1 267.0 390.7 267.9 391.9 269.5 392.7 271.0 393.9 273.1 394.8 274.9 396.0 276.7 394.3 275.9 392.7 274.3 390.9 273.3 388.9 272.3 386.9 271.4 385.2 269.9 382.7 268.8 381.0 267.9 379.6 266.4 377.2 265.6 375.7 265.0 374.0 263.5 371.8 262.7 369.6 262.5Z"/>
<path d="M439.0 376.9 440.0 374.8 440.4 373.1 441.4 370.6 442.5 369.0 443.7 366.8 445.3 365.2 446.9 363.7 449.3 364.6 451.3 365.4 449.2 367.5 447.8 369.8 446.6 372.3 445.8 374.3 444.2 376.0 441.5 376.2Z"/>
<path d="M604.6 307.3 607.4 306.2 609.8 304.7 611.0 303.1 612.5 301.4 614.2 300.3 614.1 298.0 613.6 296.1 613.0 293.7 613.0 292.1 612.5 289.8 613.1 287.5 614.2 285.4 615.8 287.4 616.9 288.9 618.8 287.6 621.3 286.2 622.2 289.2 623.0 291.5 624.9 292.4 627.4 293.3 625.7 295.3 624.9 297.7 623.0 299.4 621.3 300.7 620.3 302.4 619.2 304.0 617.8 305.6 616.3 306.9 615.2 308.7 613.8 310.0 612.5 311.7 609.8 312.8 607.2 313.5 606.3 311.0 605.6 309.3Z"/>
<path d="M424.0 412.8 425.4 414.3 426.6 416.4 427.0 418.7 427.6 420.8 427.5 423.4 429.3 425.2 430.6 426.5 431.9 427.8 432.0 430.1 431.2 432.2 431.0 433.9 428.4 433.1 427.9 430.7 427.4 428.9 426.0 427.1 425.7 425.1 425.4 423.4 425.0 420.9 425.0 418.7 424.6 416.6 424.1 414.9Z"/>
<path d="M525.8 502.1 527.0 503.5 529.0 505.1 530.2 506.5 531.9 504.6 533.5 503.2 533.5 505.5 533.2 507.8 532.7 510.2 532.7 511.7 532.4 514.2 531.7 516.1 530.5 518.2 530.2 520.5 529.1 523.0 531.3 524.1 534.0 524.4 536.8 525.1 535.2 527.2 533.6 529.7 532.4 531.7 532.5 534.6 533.4 536.5 533.5 539.4 531.2 538.1 529.1 536.1 527.8 533.9 526.5 531.8 525.8 529.5 526.3 527.4 525.9 524.9 526.2 523.2 526.7 520.9 526.9 518.6 526.4 516.5 525.7 514.0 524.7 512.0 525.0 509.7 525.4 506.7 525.3 504.4Z"/>
<path d="M541.2 602.0 541.8 604.3 543.0 606.2 543.9 607.9 544.5 609.7 546.5 610.7 547.8 612.2 550.0 613.0 551.0 611.3 551.9 609.2 553.6 607.4 554.4 606.1 555.4 604.2 557.6 603.1 557.4 605.7 556.6 608.5 556.5 610.8 558.4 611.0 561.3 610.2 563.1 610.4 563.1 614.1 561.3 614.3 558.9 615.3 557.2 615.2 555.0 615.7 553.3 616.3 551.2 617.9 548.6 619.1 546.7 620.7 545.2 619.2 543.2 618.2 541.2 617.4 541.3 615.4 541.0 613.2 540.8 610.6 541.5 608.7 541.5 606.5 540.8 603.9Z"/>
</g>
<g fill="#34547a" stroke="#1c3454" stroke-width="0.8" shape-rendering="crispEdges">
<path d="M121.9 660.0 123.1 658.2 125.0 656.8 126.0 655.1 127.4 653.4 129.9 653.3 131.8 653.3 134.0 653.4 135.0 655.8 135.8 657.5 136.2 660.0 134.9 662.2 134.0 663.5 132.8 665.4 131.8 667.6 129.3 668.0 127.6 668.3 125.2 668.7 124.3 666.5 123.7 664.6 123.0 662.3Z"/>
<path d="M42.8 680.8 45.0 681.1 47.2 681.9 48.7 684.5 50.5 686.0 51.6 688.5 49.6 689.0 47.2 689.6 45.9 687.8 44.8 685.6 44.1 682.8Z"/>
<path d="M58.2 685.2 59.7 687.7 61.0 689.5 62.6 691.8 63.1 693.8 64.3 696.5 64.9 698.6 65.9 700.6 68.4 701.3 70.5 702.0 72.5 703.1 74.7 703.9 77.0 704.5 78.4 704.9 80.3 705.6 82.5 705.6 84.6 706.1 84.3 708.5 83.5 710.5 81.2 710.3 78.8 709.3 77.2 709.0 74.8 708.7 72.5 708.3 70.3 707.3 68.7 707.2 66.3 706.4 64.3 705.8 62.6 705.0 61.7 702.8 61.2 701.6 59.8 699.8 59.1 697.3 58.0 696.1 57.1 694.0 57.8 691.9 57.7 690.0 57.7 687.3Z"/>
<path d="M140.6 708.3 141.6 707.0 143.6 704.9 144.4 703.5 146.1 702.4 147.2 700.6 146.3 698.5 146.1 696.2 149.2 696.0 151.6 696.2 152.4 698.2 154.0 700.4 154.9 702.8 153.5 704.6 153.0 707.0 151.6 709.4 149.2 711.2 147.1 712.5 145.0 713.8 143.1 712.4 140.6 711.6Z"/>
</g>
<g fill="none" stroke="#7e6c08" stroke-width="1" shape-rendering="crispEdges">
<path d="M181.7 6.2 185.1 9.9 188.2 13.4 191.4 17.6 193.2 22.2 195.4 26.9 197.5 31.6 199.0 36.9 200.2 42.2 200.0 46.2 200.3 50.6 200.3 54.6 200.2 58.6 200.4 62.5 200.4 67.1 200.4 70.7 199.9 74.8 200.5 79.4 200.5 83.2 199.9 87.4 200.2 91.4 198.3 96.6 195.8 101.9 192.8 105.3 190.5 108.7 187.9 112.5 187.1 117.4 187.0 121.8 186.1 126.5 185.0 132.0 183.5 136.8 182.6 142.0M240.6 6.2 237.4 9.3 234.8 12.9 232.0 15.8 229.2 19.3 228.7 23.1 228.6 27.2 228.6 31.8 228.7 35.5 228.2 39.9 228.3 43.9 227.3 48.2 225.9 53.0 224.5 57.2 223.0 61.5 218.7 64.8 214.2 67.7 210.1 68.6 205.4 70.0 201.1 71.2M240.6 6.2 243.2 10.3 246.2 14.9 248.5 19.3 251.5 22.8 255.1 26.3 258.2 29.9 259.5 33.9 261.0 37.8 262.2 41.6 263.4 45.7 264.3 52.7 268.6 56.0 272.2 59.8 277.4 60.4 282.7 61.0 288.0 61.5 291.3 58.6 295.1 56.2 300.0 54.5M300.0 54.5 304.2 54.3 308.8 53.6 312.9 56.3 317.6 59.8 320.8 62.5 324.7 65.2 328.4 67.6 331.8 70.0 335.4 72.9 338.7 75.6 342.5 78.1 346.5 80.2 350.3 82.3 353.6 84.9 357.8 87.5 361.5 89.6 365.1 93.2 368.2 96.5 372.4 100.1 375.6 103.7 378.8 106.0 382.2 108.7 385.4 111.1 388.3 113.4 391.4 116.0 395.8 118.1 400.7 120.7 405.4 123.0 405.4 130.9M474.0 6.2 473.3 10.4 473.2 14.4 472.3 18.3 471.5 22.3 471.4 26.4 470.1 30.8 469.3 35.2 467.8 39.6 467.0 43.9 463.8 46.5 460.7 49.4 457.6 51.7 454.7 54.5 450.6 55.8 446.9 56.7 443.1 57.5 439.1 58.7 435.3 59.8 433.0 65.3 430.1 70.3 428.8 74.7 427.2 79.4 425.7 84.4 423.8 87.5 421.4 91.5 419.5 94.9 417.3 98.6 415.6 101.9 413.0 105.6 410.9 109.2 409.0 112.5 409.6 117.8 410.7 123.0 408.1 126.9 405.4 130.9M366.8 142.0 367.1 138.1 366.8 133.6 369.1 129.0 371.3 124.3 373.8 119.5 376.5 116.8 378.9 113.5 381.7 110.2 384.4 107.2 387.8 104.3 391.4 101.8 394.9 99.3 399.3 99.4 403.4 100.3 407.8 100.7 412.5 101.1 416.6 102.5 421.5 104.4 425.6 105.6 430.1 107.2 435.3 112.5 436.0 117.5 436.8 121.6 437.1 126.5 435.4 131.6 433.6 137.1 430.1 142.0M588.4 6.2 587.8 10.6 587.7 14.5 587.6 18.7 587.0 22.8 588.8 27.6 591.4 32.4 593.1 36.9 597.0 39.0 600.2 41.3 604.6 47.5 604.3 51.3 604.9 56.0 604.6 59.8 603.3 63.7 602.3 67.8 601.5 71.3 600.2 75.6 600.5 79.9 600.2 84.4 602.2 87.9 604.6 91.4 603.7 98.4 600.4 101.4 597.2 104.3 593.8 107.4 590.5 110.7 592.8 116.0 595.8 121.3 598.4 128.3 601.6 131.5 605.6 134.2 609.0 137.1 610.7 142.0M737.2 99.8 741.9 97.5 746.8 95.1 751.2 92.8 754.7 90.6 759.0 88.6 762.5 86.5 766.6 83.8 770.9 81.5 775.3 80.9 780.5 79.8 785.0 78.7 790.5 76.9 796.2 75.2 800.9 73.3 806.1 71.7M184.5 130.0 184.5 137.0 181.7 140.8 178.7 145.2 175.7 149.3 174.1 153.6 173.1 158.1 170.9 162.4 168.1 165.9 165.8 170.0 163.4 173.9 161.2 177.9 159.1 182.1 157.0 185.6 154.7 189.8 152.2 193.4 150.4 196.9 147.9 200.1 145.9 203.8 147.3 208.0 148.4 212.8 149.8 216.7 151.1 221.4 154.7 224.9M6.2 256.9 10.5 256.9 14.1 256.5 18.3 256.0 23.0 256.4 26.9 255.7 30.8 255.6 35.1 255.7 39.2 255.2 43.8 254.9 48.3 254.0 52.7 253.9 57.3 252.2 60.9 251.3 65.5 249.6 70.1 248.0 74.3 247.2 78.6 245.6 82.6 244.2 86.9 242.8 90.9 241.4 95.3 240.4 99.8 238.6 104.3 237.3 108.2 235.7 112.5 234.6 116.0 233.1 120.1 231.3 123.9 229.4 127.9 228.1 131.7 226.8 135.3 224.9 140.0 224.8 144.9 224.5 149.9 223.9 154.7 224.0 159.0 223.0 163.4 221.4 168.6 221.4 174.0 221.4 175.7 226.7 173.1 231.1 167.1 231.4 161.7 231.6 160.8 225.8M174.0 222.3 178.2 219.9 182.1 218.0 186.3 216.1 191.1 213.4 195.7 211.1 200.0 208.2M164.3 231.9 165.3 236.0 166.3 240.2 167.0 244.2 167.5 248.6 168.0 253.4 168.6 257.8 168.6 262.9 168.9 267.5 169.6 272.0M200.0 207.3 203.7 205.4 206.9 203.4 210.3 200.8 214.2 199.1 217.6 196.8 221.1 190.6 225.9 189.0 230.8 187.3 235.1 185.4 239.1 183.6 243.2 182.7 246.6 180.9 251.0 179.8 254.4 178.0 258.8 176.9 262.3 175.0 266.4 173.9 270.3 172.2 273.9 171.0 278.4 170.1 282.4 169.7 286.3 168.5 289.8 167.7 294.3 166.9 297.7 166.3 301.9 165.1 306.3 163.7 310.3 162.2 314.2 160.8 318.7 160.3 322.9 160.2 326.8 160.5 330.8 160.3 335.3 159.9 338.7 158.2 342.1 156.0 345.9 154.3 349.7 152.5 352.9 150.2 356.6 149.1 361.0 148.4 364.5 147.7 368.7 146.7 373.1 145.6 377.6 143.8 382.0 142.7 386.3 141.4 390.6 140.7 395.1 139.9 400.0 138.8M365.2 130.0 365.4 135.1 366.1 140.5 368.4 145.7 371.4 151.1 374.6 154.9 377.5 158.1 382.0 161.4 386.3 164.3 390.9 164.5 395.1 164.8 400.0 165.1M400.0 166.9 398.7 171.4 398.2 175.9 396.8 181.0 397.3 185.5 396.9 190.1 397.1 195.0 397.6 199.0 397.7 203.8 397.8 208.0 398.0 212.6 397.9 217.0 398.1 221.6 398.5 225.5 398.3 230.0 398.2 234.5 398.6 239.0 397.1 243.4 395.9 248.5 394.2 253.0 394.3 257.9 394.4 262.2 394.6 267.2 395.1 272.0M405.3 133.5 408.3 137.0 411.4 140.4 414.6 144.2 417.6 147.6 421.1 151.2 424.3 155.5 428.1 159.0 431.0 163.0 433.3 166.4 436.1 170.1 438.4 173.6 441.1 177.2 443.9 181.0 447.2 183.9 451.2 187.0 454.7 190.4 458.0 193.3 460.5 196.5 463.0 199.4 465.2 202.8 467.5 206.1 470.3 209.1 472.6 212.4 474.4 216.1 476.7 219.9 478.4 222.8 480.9 226.8 482.6 230.2 487.0 232.1 490.8 233.8 495.6 235.3 499.3 237.1 503.7 239.0M400.0 137.0 404.2 136.6 408.2 135.8 412.2 135.1 416.3 134.4 420.7 134.3 424.9 133.6 428.8 133.0 432.6 132.4 436.9 131.8 441.1 132.8 445.2 133.1 449.9 134.0 453.5 134.6 458.0 135.3 462.1 136.1 466.4 136.4 470.2 137.2 474.2 138.2 478.4 139.2 482.6 139.7 487.1 138.7 491.9 138.0 496.1 137.3 500.6 136.9 505.4 136.2 510.3 136.6 514.6 137.2 519.5 137.9 523.0 139.9 526.2 142.4 530.3 144.7 533.7 147.0 537.1 149.3 540.9 151.4 544.1 153.5 547.8 156.2 551.1 158.1 555.8 158.1 559.7 157.8 564.5 157.6 568.7 157.2 572.8 158.0 577.4 158.8 581.7 160.1 586.3 160.8 590.9 160.1 595.5 159.5 600.0 159.0M407.0 133.5 406.1 138.3 405.8 143.0 405.3 147.6 404.3 152.0 403.6 156.2 402.4 160.8 401.8 165.1M400.0 165.1 404.4 164.3 408.7 163.5 413.5 162.2 417.6 161.6 423.1 160.4 428.1 159.0 430.1 154.1 431.8 149.1 433.4 144.1M593.3 159.9 590.9 163.1 588.3 166.5 585.9 169.5 583.6 172.9 581.0 176.1 578.5 179.6 575.7 182.7 572.8 186.4 570.0 189.9 567.7 193.4 564.9 196.6 561.9 200.1 559.5 204.2 556.4 207.3 553.7 210.5 551.0 214.6 548.3 217.6 545.9 221.4 542.0 223.9 538.2 226.7 534.8 229.2 530.8 231.9 526.9 234.5 523.0 237.2 518.0 236.5 512.5 235.4 508.2 237.9 503.7 239.8M503.7 239.8 501.8 244.3 500.5 248.8 498.4 253.0 497.3 256.9 496.9 261.4 495.8 265.3M600.0 128.6 602.9 131.3 606.3 134.2 609.2 136.9 610.9 142.5 612.9 148.0 620.3 147.1 624.8 147.5 628.5 148.5 632.6 149.1 636.9 149.8 641.5 148.2 646.4 147.1 650.7 145.7 655.4 144.3 659.3 141.6 662.7 139.6 666.3 136.9 670.1 135.0 673.8 132.3 677.6 130.4 681.9 128.7 685.5 127.0 689.4 125.5 693.3 123.9 697.5 122.3 701.5 120.3 705.1 117.8 709.0 115.7 712.6 113.6 715.9 111.3 719.9 109.2 723.8 106.8 728.2 104.6 732.7 102.6 736.6 100.0M600.0 157.2 604.4 155.7 608.4 154.0 612.9 152.6 616.5 149.9 620.3 147.1M659.1 143.4 662.2 145.6 665.5 148.6 668.5 151.2 672.0 153.5 672.6 158.6 673.8 163.7 677.5 166.8 681.2 170.8 684.9 173.8 685.9 178.9 686.7 184.0 691.7 186.5 696.0 189.5 700.8 189.2 704.9 188.8 709.8 188.9 714.4 188.6 718.3 187.4 722.1 186.8 726.3 185.9 730.6 184.9 734.2 183.9 738.4 183.0 742.6 182.5 746.1 181.2 750.1 180.6 754.3 179.7 758.3 178.8 762.2 178.3 766.1 177.5 770.5 176.5 774.3 176.2 778.7 175.8 783.1 174.7 787.5 174.1 791.4 173.6 795.6 172.9 800.5 174.2 805.8 175.7M715.3 188.6 717.3 192.5 719.5 195.6 721.8 199.6 724.5 203.1 726.8 206.3 729.4 209.9 732.1 213.1 734.7 216.3 739.8 216.1 744.9 215.3 747.6 219.4 750.6 223.6 753.2 227.3 755.9 231.7 758.7 236.6 759.5 240.5 760.1 244.7 760.5 248.9M745.8 248.9 749.7 247.0 753.5 244.9 756.6 242.8 760.5 241.2 764.8 239.1 768.3 237.4 772.6 235.0 776.6 232.9 780.3 231.0 784.5 229.2 788.6 227.4 792.8 225.9 797.3 225.0 801.6 223.5 805.8 221.8M167.8 260.0 168.5 264.3 169.8 268.9 170.2 273.3 171.3 277.6 171.9 282.0 173.1 286.4 172.6 290.3 172.8 294.7 172.2 298.4 172.1 302.6 171.7 307.2 171.4 311.0 172.5 314.6 173.6 318.4 174.4 322.2 175.6 326.4 176.6 330.3 176.5 334.6 177.2 338.8 177.1 343.5 177.5 347.9 178.8 352.0 180.0 356.5 181.5 361.0 182.8 365.4 182.9 369.6 183.2 374.0 183.2 378.3 183.7 383.0 182.2 387.5 180.3 392.7 179.3 397.4 177.5 402.0M393.3 260.0 394.5 264.7 394.9 268.9 395.9 273.4 396.8 277.6 396.9 282.4 396.4 286.4 396.1 291.5 396.3 295.8 396.0 300.4 396.7 305.5 397.9 310.3 398.9 315.2 399.5 319.8 399.6 324.8 400.0 330.3 400.0 335.6M396.8 277.6 396.7 282.3 396.7 286.9 396.0 291.4 395.7 295.8 395.9 300.4 396.8 305.4 398.0 310.1 398.5 314.7 399.4 319.8 399.9 324.3 399.9 329.7 400.2 334.3 400.3 339.1 401.0 343.5 400.7 347.8 401.0 351.6 402.0 355.7 402.1 360.2 402.3 365.1 402.6 369.4 402.9 374.2 405.6 381.3 404.8 385.6 404.4 389.2 403.8 393.6 405.0 397.6 405.6 402.0M497.8 260.0 495.8 264.3 493.2 268.6 490.8 272.8 488.5 276.9 486.4 281.1 484.2 284.6 482.2 288.3 479.4 291.9 477.2 295.4 475.5 298.4 472.8 301.9 470.6 305.7 468.4 309.7 465.5 313.7 463.1 317.1 461.1 321.4 458.3 325.0 454.5 328.8 451.3 332.1 448.1 335.1 444.2 337.7 440.5 340.6 437.5 343.5 433.7 346.1 430.5 349.3 427.7 352.0 424.8 355.1 421.4 358.4 417.6 362.7 414.4 367.2 411.7 371.7 409.1 376.0 405.6 381.3M414.4 367.2 418.7 366.7 422.6 365.9 426.5 364.8 430.6 364.4 434.6 363.7 438.1 363.0 442.5 362.3 447.0 362.6 451.0 363.7 454.9 364.0 459.4 364.7 463.6 365.1 467.8 364.8 472.0 364.4 476.6 363.5 480.8 363.3 484.9 362.7 489.3 362.4 493.4 361.6 497.6 360.6 501.3 359.3 504.9 358.5 508.7 357.6 512.8 356.3 516.8 355.7 521.4 355.3 525.6 354.4 530.0 354.0M405.6 381.3 401.3 382.8 397.1 383.9 392.2 385.3 388.0 386.5 384.2 389.5 379.5 392.3 375.7 395.3 371.7 396.0 368.0 397.2 363.7 398.0 359.5 398.9 355.7 400.3 351.3 400.7 347.6 402.0M400.3 369.0 395.7 372.3 391.5 376.0 390.0 380.9 388.3 385.4 386.2 390.1 382.5 393.8 379.2 397.1M522.8 237.9 527.1 241.2 530.9 244.1 535.1 247.6 536.0 251.9 536.7 256.2 537.5 260.6 538.7 265.1 539.8 269.0 541.5 273.1 542.7 277.0 543.9 281.0 544.1 286.0 543.9 291.5 546.6 294.7 548.9 298.1 551.4 301.1 553.5 304.0 556.2 307.3 557.4 312.3 558.0 317.9 563.0 319.4 568.5 321.4 571.0 324.8 573.2 328.3 574.8 332.1 577.3 335.4 578.3 339.9 579.6 344.9 580.8 349.5M584.4 294.1 582.3 297.9 579.8 301.4 577.3 305.6 575.4 309.8 573.5 313.6 572.1 317.9 569.4 324.9M700.0 281.0 695.5 282.2 691.7 283.2 687.5 284.2 683.5 285.1 679.3 286.2 675.5 288.0 672.5 290.5 668.9 292.7 665.2 294.4 661.7 296.8 658.0 299.3 654.1 301.8 650.1 304.7 645.9 307.3 641.5 310.1 637.8 313.5 633.6 316.1 629.0 317.4 624.7 318.2 619.7 319.6 615.4 321.2 610.7 322.3 607.5 324.8 604.0 327.3 600.4 330.4 596.8 332.9 593.1 335.4 590.5 339.2 586.9 342.7 584.4 346.0M500.0 359.2 504.2 358.3 508.8 357.8 513.5 356.5 517.5 355.8 522.1 355.1 526.4 354.7 530.6 353.9 535.1 353.0 539.9 352.3 544.4 351.0 548.9 349.5 553.4 349.0 558.0 347.8 562.3 347.8 566.5 347.7 571.5 347.7 575.6 347.8 579.1 348.7 583.1 350.0 587.3 350.9 591.1 352.2 594.9 353.0 599.6 354.8 603.7 356.6 608.1 358.5 612.5 360.1 616.8 360.6 620.5 361.5 624.5 362.5 628.6 363.4 632.7 363.6 636.4 364.4 640.6 365.3 644.9 365.7 649.2 365.9 653.7 366.9 658.4 367.0 662.7 367.7 667.0 368.1 671.1 368.4 675.7 368.8 680.0 369.1 683.5 369.7 687.7 369.8 691.9 369.7 696.1 370.6 700.0 370.6M577.3 336.3 582.0 335.3 586.1 334.6 593.1 336.3 593.6 341.4 594.4 346.2 594.9 351.3 593.2 356.4 591.4 360.9 586.0 361.5 580.8 361.8 578.5 357.7 575.6 353.0 575.5 347.9 575.6 342.5 577.3 336.3M580.8 353.0 582.8 358.0 584.4 363.6 588.1 367.5 591.4 372.0M580.8 361.8 577.6 365.6 573.8 368.8 568.5 372.0M650.0 305.9 653.5 303.4 656.9 300.1 660.5 297.1 664.1 294.7 667.8 292.4 671.8 290.1 675.9 287.6 679.8 285.8 683.7 283.4 688.1 281.7 692.2 280.8 696.3 279.3 700.9 278.0 704.7 276.1 709.1 275.0 712.4 272.5 715.8 270.5 719.6 268.7 723.1 266.6 725.5 261.7 728.0 256.7 733.2 255.3 738.6 253.9 742.3 251.2 746.6 249.2 750.4 246.8 754.0 244.1 759.7 240.5 763.8 238.4 767.9 236.8 772.5 235.1 776.5 232.8 783.6 230.0M755.4 230.0 757.4 235.5 759.7 240.5 760.6 244.7 761.4 248.6 762.5 252.5 763.5 256.9 764.1 261.3 765.3 265.1 767.0 270.3 768.3 275.2 770.2 279.9M738.6 254.6 740.0 260.9 744.4 265.0 748.4 269.4 752.1 272.4 755.8 274.8 759.7 277.8 765.1 279.8 770.2 281.3 774.2 283.6 778.1 286.5 782.2 289.1 786.5 293.4 790.6 297.5 795.0 301.3 799.0 304.5 805.4 308.0M650.0 366.0 654.4 367.0 659.2 367.1 664.1 368.1 668.8 367.8 673.6 367.7 679.1 367.7 683.7 367.4 688.2 368.6 692.8 370.3 697.8 371.6 702.5 371.6 708.0 371.9 712.8 371.6 717.5 371.6 722.2 371.7 727.3 372.0 732.4 371.9 737.2 372.3 741.9 372.8 746.2 373.1 751.2 373.7 755.7 371.9 759.7 369.5 763.6 367.2 768.0 364.9 772.2 361.9 776.5 359.7 781.5 357.6 786.2 355.3 790.6 353.4 794.0 350.1 798.3 346.4 801.6 343.4 805.4 340.0M450.0 472.5 454.3 471.7 458.2 471.5 462.3 470.7 467.1 469.3 471.4 467.9 476.2 466.3 480.4 465.3 485.1 463.7 488.8 461.3 492.4 459.2 496.4 457.6 500.5 455.1 503.9 453.1 507.8 450.7 511.5 448.8 514.3 445.4 516.2 441.5 518.8 437.6 521.1 434.1 523.8 430.3 526.4 427.4 529.2 424.3 532.6 421.1 535.2 417.9 537.9 414.5 540.2 410.6 542.8 406.7 546.1 402.3 548.4 398.7 550.5 394.6 552.2 390.0 553.6 385.7 555.4 381.1 557.7 378.1 560.8 374.9 563.4 371.6 566.0 368.8 570.3 366.3 574.2 363.6 578.3 360.9M581.8 360.0 586.4 363.8 590.6 367.0 593.2 370.0 596.1 372.8 598.7 376.0 601.1 379.3 602.5 383.4 604.0 387.3 605.6 390.9 607.0 394.5 608.2 398.7 611.1 402.0 613.4 406.0 616.1 409.3 618.7 412.7 622.0 415.6 624.4 418.7 627.5 421.5 631.1 424.3 634.5 426.8 638.9 430.3 635.9 433.9 632.8 437.3 632.9 441.4 632.0 445.4 632.1 449.5 631.4 453.2 631.3 457.2 631.6 461.4 631.0 465.4 631.0 469.4 630.7 473.6 630.5 477.5 629.9 481.5 629.6 486.3 629.6 490.1M627.5 421.5 630.8 423.8 634.8 426.0 638.0 428.5 640.7 431.5 643.9 434.5 647.3 437.7 650.0 440.8M627.5 422.4 629.4 426.1 631.9 430.3 633.7 437.3M383.6 390.0 380.1 392.3 376.8 394.4 373.0 397.0 368.5 397.9 363.3 399.1 359.0 400.5 354.5 401.2 349.7 401.7 344.9 402.3 341.2 405.7 338.0 409.2 334.4 412.8 331.5 416.4 328.7 419.5 325.9 422.6 322.9 425.3 320.3 428.7 316.6 432.1 313.4 435.0 310.0 438.2 306.3 441.5 302.7 444.5 300.4 448.2 297.7 451.9 295.7 455.0 292.8 457.8 289.8 460.1 286.2 463.0 283.4 465.6 279.1 467.4 274.9 469.0 270.9 470.6 266.3 471.7 262.3 473.5 258.1 473.5 254.1 473.9 250.0 474.4M257.0 474.4 254.5 478.9 251.8 483.1 251.0 487.2 250.0 491.9M402.9 390.0 404.4 394.5 406.2 398.8 407.3 403.5 409.1 407.6 410.9 411.7 412.5 415.0 414.8 418.8 416.7 423.0 418.6 426.7 420.5 430.4 422.0 434.9 424.2 439.1 426.0 443.3 427.5 448.0 429.5 451.5 431.6 455.9 434.0 459.8 435.6 463.0 437.7 466.8 439.8 470.8 438.4 474.6 437.1 478.7 435.9 482.5 434.5 486.7 433.0 490.2 431.1 494.0 429.5 498.2 427.8 501.9 426.1 505.5 424.0 509.5 421.3 512.9 419.0 516.7 416.5 520.2 414.5 523.3 411.7 527.1 408.2 532.0M439.8 471.7 445.2 472.3 450.0 473.5M6.2 460.7 10.7 461.3 15.4 461.9 19.3 462.1 24.3 462.6 28.8 463.0 33.0 463.6 37.2 464.2 41.2 465.0 45.4 465.0 49.6 466.1 53.8 466.6 57.3 466.7 61.6 467.2 65.9 468.0 70.2 469.8 74.6 471.0 79.3 472.3 83.7 474.1 87.9 475.7 92.1 475.2 97.0 474.9 101.1 474.6 105.3 474.6 109.5 474.4 113.1 474.2 117.5 474.1 121.4 474.1 125.6 473.7 129.6 473.9 134.0 473.5 137.6 475.6 141.3 477.0 145.0 479.0 149.3 479.6 153.8 480.1 157.9 479.9 161.7 479.4 165.9 479.4 170.1 478.9 174.4 478.9 178.2 478.7 182.9 478.0 186.7 477.9 190.7 477.3 195.0 477.4 199.1 476.7 203.3 477.0 207.1 476.6 211.6 476.0 215.9 476.0 219.7 475.7 224.3 475.4 228.3 475.4 232.6 475.2 236.8 475.1 241.2 474.9 245.4 474.9 250.0 474.6M182.3 390.0 180.6 394.3 178.8 398.2 177.4 401.9 175.4 405.6 173.6 409.8 171.1 413.9 168.9 417.7 166.8 421.3 165.0 425.5 162.6 429.5 162.5 434.2 161.8 438.6 161.9 442.5 161.5 447.1 160.1 451.1 158.6 454.9 157.2 458.9 156.4 463.1 154.9 466.9 154.3 471.5 154.0 475.4 153.8 480.1 150.9 483.6 148.1 486.8 145.8 490.1 142.8 493.3 141.2 497.4 139.8 500.7 137.5 504.6 136.2 508.6 135.7 512.5 134.6 517.0 133.7 520.6 133.2 524.6 132.4 528.5 131.8 532.8 131.7 537.3 131.0 541.2 131.3 545.4 131.0 549.7 130.3 554.1 130.1 558.3 129.6 563.1 129.6 567.1M250.0 497.6 247.4 501.8 244.9 505.2 242.1 509.9 239.6 513.6 237.3 517.4 235.3 521.1 233.8 525.2 232.5 529.3 230.7 532.8 228.0 535.6 225.5 539.2 222.5 542.0 220.1 545.3 217.5 548.2 216.9 552.6 215.7 557.3 214.9 562.2 214.2 567.1M145.0 479.0 148.1 474.1 151.6 469.1 156.0 466.9M6.2 661.1 10.8 660.7 15.4 661.1 19.3 659.4 23.6 658.1 27.8 656.7 31.5 654.8 35.6 653.3 39.5 651.4 43.9 650.1 48.5 648.9 53.0 647.1 56.9 646.2 61.3 645.1 65.9 643.5 71.1 643.4 76.9 643.5 82.2 646.0 87.9 647.9 91.4 644.9 94.5 642.4 98.3 642.0 102.6 641.4 106.4 641.2 110.5 641.3 114.7 641.0 118.9 640.4 123.0 640.2 127.0 640.0 131.4 640.2 135.1 640.4 139.3 640.9 143.1 641.2 147.2 641.3 151.0 642.6 155.1 644.6 158.4 646.0 162.6 647.9 167.2 649.9 171.4 652.3 175.7 654.5 181.1 655.1 185.7 654.9 191.1 655.6 194.9 654.3 199.4 653.7 203.4 652.6 207.1 651.6 211.1 651.1 215.3 650.1 219.6 648.7 224.1 647.6 228.1 646.5 232.7 645.0 237.1 643.5 241.7 642.4 245.7 642.7 250.0 643.5M130.7 560.0 130.2 564.4 130.5 568.5 130.1 573.4 129.7 577.7 129.6 582.0 128.9 586.4 128.4 590.7 127.3 595.0 126.6 599.2 126.3 603.9 126.6 608.3 126.2 613.0 126.0 616.8 126.4 621.4 126.3 625.9 127.2 630.8 128.4 636.1 129.6 641.3 131.7 645.4 134.1 649.8 136.2 654.5 135.2 658.4 134.1 662.1 133.5 666.5 132.4 670.5 131.8 674.2M87.9 647.9 89.9 652.5 92.6 656.9 94.5 661.1 98.4 664.3 101.6 667.2 105.4 669.8 109.8 670.8 114.0 671.5 118.5 672.0 123.0 673.1 127.7 674.5 132.0 675.3 136.2 676.4 142.8 680.8 147.5 682.3 151.5 683.7 156.3 685.2 160.4 686.3 163.8 683.6 167.2 680.1 170.0 677.0 173.6 674.2 175.9 670.8 177.9 667.1 180.5 663.6 182.6 660.4 184.5 656.7M215.3 560.0 215.9 564.6 215.8 568.8 216.4 573.2 214.9 577.1 213.6 581.3 212.8 585.1 211.3 589.1 209.8 593.2 208.7 597.3 207.0 601.3 205.5 604.6 204.3 608.7 202.1 612.1 200.6 616.5 199.2 620.3 197.7 623.7 196.3 627.6 194.4 631.4 192.5 635.3 190.7 639.6 188.9 643.5 187.1 648.7 185.6 654.5M6.2 616.0 8.7 619.5 10.8 622.3 13.2 625.9 13.3 630.4 12.9 634.6 12.4 639.1 12.0 643.4 12.1 647.9 13.2 652.1 14.2 656.4 15.4 661.1M426.7 500.0 424.7 504.0 423.2 507.2 421.5 511.2 419.7 514.5 417.2 518.2 415.7 522.0 413.3 525.6 410.8 528.7 408.2 532.3 405.7 535.5 402.9 539.0 400.4 542.8 398.2 546.1 395.3 549.9 391.7 552.8 389.0 556.8 385.8 560.3 382.8 563.7 379.3 566.0 376.1 568.9 372.6 571.4 369.4 574.3 366.6 576.8 363.0 579.1 359.2 581.4 354.9 583.6 351.3 585.5 347.5 587.7 343.3 590.1 339.2 592.0 335.2 593.6 331.2 595.5 327.5 597.3 323.5 598.9 319.1 601.0 314.5 603.4 310.3 605.4 308.1 611.3 305.9 616.4 305.6 622.0 305.9 627.4M240.0 642.8 244.2 642.9 248.8 643.2 252.9 643.6 257.5 643.8 261.7 643.6 266.4 643.9 270.5 643.0 275.4 642.4 279.7 641.2 284.2 639.9 288.3 639.5 292.7 638.4 295.8 635.6 299.3 632.6 302.6 630.3 305.9 627.4 312.5 623.0 317.7 623.5 323.1 624.4 327.9 625.2 332.0 626.1 336.9 627.4 341.3 628.6 345.4 629.6 349.9 631.7 354.6 633.3 358.6 635.1 363.0 637.3 367.4 637.3 371.7 638.3 376.2 638.4 380.8 636.3 385.0 634.0 388.3 631.1 391.1 628.2 393.8 625.2 397.9 623.8 402.7 622.4 407.2 621.3 411.4 619.7 415.4 619.4 420.3 619.2 424.8 618.4 428.8 618.2 433.6 617.7 437.7 617.5 442.4 618.6 446.3 619.2 450.6 620.3 455.3 620.8 459.7 619.6 464.0 618.0 468.5 616.8 472.9 615.9 477.3 614.2 481.5 614.5 485.7 614.9 490.0 615.3M489.5 615.9 493.9 616.3 498.4 616.6 502.9 616.1 507.4 616.5 511.7 616.3 515.9 616.3 519.7 618.1 523.4 619.3 526.6 621.3 530.8 623.1 534.2 624.7 537.9 626.2 542.5 627.3 547.0 628.1 550.8 629.4 555.4 630.6 558.9 632.3 562.8 633.8 567.1 634.5 570.8 635.9 574.5 637.5 578.0 639.4 581.8 640.5 586.2 640.1 590.6 640.4 594.8 639.9 599.2 639.7 603.6 639.4 608.2 639.7 612.6 639.4 617.0 639.7 621.2 640.4 625.8 641.2 630.4 641.7 634.2 641.8 639.2 642.4 643.5 642.9 647.7 643.8 651.9 645.3 656.7 646.4 660.8 647.6 665.1 648.5 669.5 649.8 674.1 651.6 678.5 652.6 682.8 652.2 687.1 652.0 691.7 652.0 695.4 651.8 700.0 651.5M630.1 490.0 630.4 494.3 630.7 499.1 630.5 503.5 631.2 507.7 631.2 512.0 633.4 516.3 635.0 520.1 637.3 523.8 639.5 528.4 641.3 532.0 643.3 536.1 644.9 539.9 646.3 543.8 647.3 548.0 648.4 551.9 649.9 555.9 650.8 560.6 651.7 564.5 652.4 568.8 652.6 573.7 653.6 577.8 654.3 582.3 655.5 586.6 657.2 591.0 658.4 595.4 660.2 599.8 661.3 604.1 663.1 608.6 665.3 612.6 667.5 616.4 669.7 620.2 671.6 624.2 674.1 628.4 677.8 631.7 681.4 635.8 685.1 639.4 688.9 641.9 692.4 643.7 696.5 646.1 700.0 648.2M645.9 440.0 649.3 442.7 652.8 444.8 656.6 446.8 659.8 449.5 663.7 451.8 667.3 453.1 671.7 454.8 675.7 455.4 679.3 457.2 683.1 458.3 687.1 459.5 691.4 461.2 695.2 462.4 699.1 463.7 703.1 464.3 707.5 465.0 711.8 465.7 716.2 466.3 720.2 466.8 724.3 467.2 728.7 467.9 733.0 469.1 737.0 469.3 741.6 470.0 745.3 470.6 750.1 471.2 754.0 472.1 758.3 472.5 762.7 474.4 766.5 475.8 771.1 477.4 774.9 479.6 779.1 480.9 783.9 482.4 787.8 484.4 791.1 486.5 795.2 488.4 798.6 490.3 802.4 492.7 805.6 494.7M699.1 658.8 703.6 659.0 707.7 659.3 711.9 660.3 716.0 660.5 720.5 660.7 724.7 661.4 728.7 661.8 732.9 661.0 737.3 660.7 741.4 660.2 745.9 660.3 749.8 659.9 753.7 659.2 758.3 658.8 763.9 658.3 770.1 657.3M700.0 653.8 705.1 658.8M802.2 560.0 800.3 563.8 799.0 567.9 797.2 572.4 795.5 576.3 792.4 580.9 790.2 585.2 787.4 589.6 786.2 594.1 784.4 598.5 785.4 604.1 785.9 610.3 784.8 615.6 784.4 620.7 785.1 624.9 786.2 629.7 787.4 634.0 786.9 638.3 786.9 642.6 786.6 647.3 785.1 654.7 788.4 658.8 791.8 663.6 794.6 668.7 797.0 673.9 798.5 680.1M786.6 642.8 782.6 645.1 779.2 647.3 778.2 651.5 777.8 656.2 780.0 663.6 783.4 665.5 786.6 668.0 791.8 668.7M751.1 659.1 755.4 658.1 760.0 657.6 764.6 657.0 768.5 656.2 773.2 656.3 777.8 655.4 785.1 654.7M704.5 660.0 709.1 666.1 710.8 670.2 712.6 674.4 714.9 679.1 716.7 683.1 718.2 687.3 720.3 691.3 721.6 696.0 723.9 699.8 725.7 704.1 727.3 708.5 729.0 711.7 731.3 715.6 733.5 719.4 735.1 722.9 737.5 726.2 739.4 729.7 740.7 733.7 742.5 738.0 743.6 742.1 745.3 746.0 747.3 750.1 748.5 753.9 749.5 758.1 750.3 762.0 750.9 766.1 751.6 770.1 752.0 774.1 753.0 778.2 753.3 783.1 753.8 788.2 754.5 793.3"/></g>
<g fill="none" stroke="#000" stroke-width="1" shape-rendering="crispEdges">
<path d="M201.9 6.2 202.1 6.7 202.4 7.3 202.7 8.1 203.1 9.2 203.7 10.5 204.5 12.3 205.5 14.4 206.5 16.8 207.4 19.1 208.1 21.1 208.5 22.9 208.7 24.7 208.7 26.3 208.5 27.7 208.1 29.0 207.1 30.0 205.7 30.6 204.2 31.2 202.8 31.8 201.9 32.5 201.6 33.5 201.6 34.5 201.9 35.7 202.3 36.8 202.8 37.8 203.5 38.7 204.4 39.4 205.3 40.1 206.3 41.0 207.2 42.2 208.0 43.7 208.7 45.5 209.4 47.5 210.0 49.4 210.7 51.0 211.4 52.3 212.0 53.4 212.7 54.4 213.4 55.3 214.2 56.2 215.2 57.3 216.3 58.4 217.5 59.4 218.6 60.2 219.5 60.6 220.2 60.6 220.7 60.2 221.1 59.6 221.5 58.8 222.1 58.0 222.9 57.1 223.7 56.1 224.6 55.0 225.6 53.9 226.5 52.7 227.5 51.6 228.5 50.3 229.5 49.1 230.6 47.8 231.8 46.6 233.1 45.2 234.5 43.8 235.9 42.5 237.4 41.3 238.8 40.4 240.2 39.9 241.6 39.6 242.9 39.6 244.4 39.7 245.9 40.1 247.5 40.7 249.3 41.7 251.1 42.8 252.9 43.9 254.7 44.8 256.4 45.6 258.2 46.2 259.9 46.9 261.7 47.5 263.4 48.3 265.2 49.3 267.0 50.5 268.8 51.7 270.6 52.8 272.2 53.6 273.8 54.2 275.3 54.7 276.7 54.9 278.1 54.9 279.3 54.5 280.4 53.6 281.5 52.2 282.5 50.6 283.3 49.0 283.7 47.5 283.6 46.0 283.2 44.6 282.5 43.1 281.8 41.7 281.0 40.4 280.2 39.3 279.1 38.3 278.1 37.3 277.2 36.3 276.6 35.1 276.4 33.8 276.4 32.4 276.6 30.9 277.0 29.4 277.5 28.1 278.2 26.9 279.2 25.7 280.3 24.6 281.5 23.6 282.8 22.8 284.0 22.4 285.3 22.3 286.7 22.2 288.2 22.2 289.8 22.0 291.8 21.5 294.1 20.9 296.5 20.3 298.6 19.7 300.0 19.3M226.5 53.6 226.5 54.5 226.3 55.7 226.2 57.2 226.2 58.6 226.5 59.8 227.4 60.5 228.6 61.1 229.9 61.6 231.1 62.3 231.8 63.3 232.1 64.8 232.1 66.7 231.8 68.7 231.4 70.6 230.9 72.1 230.1 73.1 229.0 73.8 227.8 74.3 226.9 74.8 226.5 75.6 227.0 76.5 228.1 77.6 229.4 78.8 230.5 79.9 230.9 80.8 230.4 81.6 229.1 82.3 227.7 82.9 226.4 83.6 225.7 84.4 225.8 85.3 226.4 86.3 227.2 87.4 228.0 88.5 228.3 89.6 228.1 90.8 227.7 92.2 227.0 93.5 226.3 94.7 225.7 95.8 225.0 96.8 224.4 97.7 223.7 98.5 223.0 99.1 222.1 99.3 221.2 99.0 220.0 98.4 218.9 97.5 217.8 96.6 216.9 95.8 216.2 94.9 215.6 93.9 215.2 93.0 214.7 92.4 214.2 92.3 213.7 92.9 213.2 94.0 212.7 95.4 212.1 97.0 211.6 98.4 211.1 99.9 210.6 101.4 210.1 103.0 209.5 104.4 209.0 105.4 208.3 106.3 207.5 106.9 206.7 107.3 206.0 107.4 205.4 107.2 205.2 106.4 205.1 105.2 205.0 103.7 204.9 102.2 204.6 101.1 203.9 100.1 203.0 99.1 202.0 98.3 201.0 97.8 200.2 97.5 199.4 97.8 198.7 98.4 198.1 99.3 197.6 100.2 197.5 101.1 197.9 101.7 198.6 102.2 199.5 102.8 200.4 103.6 201.1 104.6 201.5 105.9 201.9 107.4 202.2 109.0 202.2 110.8 201.9 112.5 201.0 114.3 199.5 116.2 197.8 118.1 196.4 119.8 195.8 121.3 196.2 122.3 197.5 123.1 199.1 123.8 200.1 124.3 200.2 124.8 198.6 125.1 195.8 125.3 192.7 125.4 190.1 125.8 188.8 126.5 189.3 127.9 191.2 129.6 193.5 131.6 195.6 133.6 196.7 135.3 196.4 136.9 195.2 138.5 193.8 139.9 192.3 141.1 191.4 142.0M5.1 105.1 154.5 105.1 155.7 106.2 156.3 107.7 156.5 109.5 156.7 111.2 157.1 112.5 157.8 113.2 158.7 113.6 159.5 113.9 160.2 114.3 160.6 115.1 160.8 116.4 160.8 117.9 160.6 119.7 160.3 121.4 159.8 123.0 159.0 124.5 158.0 126.0 156.9 127.4 155.7 128.8 154.5 130.1 153.2 131.2 151.7 132.2 150.2 133.2 148.8 134.2 147.5 135.3 146.2 136.7 145.0 138.2 143.8 139.7 142.9 141.1 142.2 142.0M209.8 104.7 300.0 105.1M300.0 105.1 301.8 105.3 304.4 105.8 307.2 106.1 309.8 106.0 311.4 105.1 309.7 88.8 324.6 90.5 325.4 90.9 325.3 91.3 324.8 91.7 324.7 92.0 325.5 92.3 361.5 91.7 401.9 90.5 421.3 91.4 445.9 92.3 475.7 94.0 500.0 94.9M304.4 6.2 305.1 6.7 306.1 7.5 307.2 8.4 308.2 9.5 308.8 10.5 309.1 11.7 309.2 13.1 309.0 14.5 308.6 15.7 307.9 16.7 306.7 17.4 304.9 17.8 302.9 18.1 301.2 18.3 300.0 18.5M500.0 94.6 543.9 94.9 572.1 96.3 614.2 97.0 635.3 96.7 667.0 96.3 700.0 96.3M635.3 96.7 636.2 95.9 637.4 94.8 638.8 93.6 640.5 92.4 642.4 91.4 644.5 90.7 647.1 90.2 649.7 89.7 652.3 89.3 654.7 88.8 656.6 88.1 658.2 87.4 659.8 86.6 661.5 85.9 663.4 85.2 666.0 84.7 668.9 84.3 671.9 83.9 674.6 83.4 676.6 82.6 677.8 81.4 678.2 79.9 678.4 78.3 678.6 76.8 679.3 75.6 680.4 74.6 681.7 73.8 683.1 73.2 684.7 72.6 686.3 72.1 688.0 71.7 690.0 71.6 691.9 71.4 693.7 71.1 695.1 70.3 696.0 68.9 696.6 67.0 697.0 64.9 697.3 63.0 697.7 61.5 698.2 60.5 698.8 59.9 699.3 59.4 699.7 59.1 700.0 58.9M650.0 89.3 650.9 89.2 652.2 89.1 653.7 89.0 655.1 88.8 656.3 88.6 657.0 88.3 657.4 87.9 657.8 87.4 658.5 87.0 659.8 86.5 676.0 83.0 677.1 82.2 677.4 81.4 677.3 80.5 677.2 79.6 677.4 78.7 677.8 77.8 678.1 76.7 678.5 75.6 679.1 74.6 680.2 73.8 681.9 73.2 684.1 72.8 686.5 72.5 688.9 72.1 690.8 71.7 692.3 71.3 693.6 70.8 694.8 70.4 695.7 69.7 696.4 68.9 696.7 67.7 696.6 66.2 696.4 64.6 696.2 63.1 696.4 61.9 696.9 61.0 697.7 60.4 698.6 60.0 699.6 59.5 700.6 59.1 701.8 58.6 703.3 58.1 704.7 57.7 706.0 57.1 706.9 56.2 707.3 55.1 707.2 53.7 707.0 52.2 707.0 50.6 707.6 49.2 709.0 47.9 710.9 46.6 713.0 45.3 715.3 44.0 717.5 42.9 719.7 41.8 722.0 40.8 724.3 39.8 726.6 38.9 728.7 38.0 730.8 37.1 732.8 36.4 734.7 35.6 736.6 34.8 738.6 33.7 740.6 32.4 742.6 30.9 744.6 29.3 746.5 27.6 748.4 26.0 750.2 24.4 752.0 22.8 753.6 21.2 755.3 19.7 756.9 18.3 758.5 16.9 760.1 15.6 761.6 14.4 763.0 13.4 763.9 12.7M748.4 5.9 748.8 6.5 749.2 7.3 749.8 8.3 750.4 9.2 751.2 9.8 752.2 10.3 753.2 10.6 754.4 10.8 755.6 11.0 756.9 11.2 758.2 11.5 759.8 11.8 761.4 12.1 762.8 12.4 763.9 12.7 764.7 12.9 765.4 13.2 765.8 13.4 766.0 13.7 766.0 14.1 765.6 14.4 764.8 14.8 763.9 15.2 763.0 15.6 762.5 16.2 762.2 16.8 762.0 17.4 762.0 18.2 762.2 18.9 762.5 19.7 763.1 20.5 764.1 21.3 765.1 22.2 766.1 23.0 766.7 23.9 766.9 24.7 766.7 25.5 766.5 26.3 766.4 27.2 766.7 28.1 767.5 29.2 768.6 30.5 769.9 31.8 771.2 32.9 772.3 33.7 773.3 34.2 774.1 34.2 774.9 34.2 775.7 34.2 776.5 34.4 777.4 35.0 778.2 35.6 779.1 36.4 779.9 37.2 780.8 38.0 781.6 38.7 782.4 39.5 783.2 40.3 784.0 41.0 785.0 41.5 786.0 41.7 787.0 41.9 788.1 41.8 789.3 41.7 790.6 41.5 792.1 41.1 793.9 40.6 795.7 40.0 797.5 39.3 799.0 38.7 800.4 38.0 801.7 37.3 802.8 36.5 803.8 35.8 804.7 35.1 805.2 34.5 805.6 33.8 805.8 33.2 805.9 32.7 806.1 32.3M643.0 95.6 666.9 96.3 741.4 96.7 765.3 96.3 766.2 96.0 766.2 95.6 765.8 95.2 765.8 94.8 766.7 94.5 787.1 94.5 788.3 94.9 788.7 95.4 788.9 96.0 789.4 96.6 790.6 97.0 806.1 97.7M787.1 94.5 786.6 94.9 785.8 95.6 785.0 96.3 784.2 97.3 783.6 98.4 783.2 99.8 782.9 101.5 782.6 103.4 782.4 105.2 782.2 106.9 781.9 108.5 781.5 110.2 781.2 111.7 780.9 113.1 780.8 114.0M154.7 130.0 153.4 130.9 151.7 132.1 149.7 133.5 147.7 135.2 145.9 137.0 138.0 149.0 186.3 149.0M192.4 130.0 193.2 131.0 194.5 132.3 195.8 133.9 196.7 135.6 196.8 137.0 196.0 138.3 194.3 139.6 192.3 140.8 190.4 142.0 188.9 143.2 187.9 144.3 187.1 145.5 186.5 146.6 186.2 147.7 186.3 149.0 187.2 150.4 188.8 152.0 190.6 153.5 192.0 155.1 192.4 156.4 191.6 157.4 189.7 158.3 187.5 159.1 185.6 159.9 184.5 160.8 184.9 161.6 186.2 162.4 187.8 163.2 188.9 164.1 188.9 165.1 175.7 172.2 174.0 172.6 172.5 172.7 171.2 172.6 170.2 172.6 169.6 173.1 169.4 174.0 169.6 175.3 170.1 176.8 170.7 178.2 171.4 179.2 172.2 179.8 173.4 180.1 174.6 180.2 175.5 180.5 175.7 181.0 175.1 181.8 173.6 182.8 171.9 184.0 170.4 185.1 169.6 186.2 169.7 187.4 170.6 188.6 171.6 189.8 172.3 190.9 172.2 191.5 171.1 191.6 169.1 191.1 166.8 190.5 164.8 190.2 163.4 190.6 163.2 192.0 163.6 194.1 164.3 196.5 164.7 198.7 164.3 200.3 162.8 201.1 160.5 201.4 158.0 201.5 155.9 201.6 154.7 202.1 154.8 202.9 155.8 203.8 157.3 204.9 158.5 206.1 159.1 207.3 158.6 208.7 157.5 210.2 156.2 211.7 155.1 213.1 154.7 214.4 155.0 215.2 156.0 215.8 157.2 216.4 158.3 217.0 159.1 217.9 159.4 219.1 159.7 220.6 159.7 222.2 159.5 223.7 159.1 224.9 158.1 225.8 156.8 226.5 155.3 227.1 153.9 227.7 152.9 228.4 152.4 229.4 152.1 230.6 152.0 231.8 151.8 232.8 151.1 233.7 150.0 234.2 148.4 234.5 146.7 234.7 145.2 235.0 144.1 235.4 143.5 236.2 143.1 237.0 142.9 238.0 143.0 238.9 143.2 239.8 143.9 240.7 144.9 241.6 146.1 242.4 147.1 243.3 147.6 244.2 147.8 245.3 147.6 246.4 147.2 247.5 146.7 248.6 145.9 249.5 144.8 250.3 143.5 251.1 142.0 251.7 140.4 252.1 138.8 252.1 137.1 251.5 135.2 250.3 133.4 248.9 131.9 247.9 130.9 247.8 131.0 248.8 131.7 250.7 132.8 252.9 133.5 255.0 133.6 256.5 132.5 257.3 130.6 257.5 128.4 257.6 126.6 257.7 125.7 258.3 125.9 259.4 127.1 261.0 128.5 262.6 129.7 264.2 130.1 265.3 129.2 266.0 127.6 266.3 125.6 266.4 123.9 266.6 123.0 267.1 123.1 267.9 123.8 269.1 124.9 270.2 125.9 271.3 126.5 272.0M144.1 238.1 200.0 238.1M189.5 238.4 299.3 238.4 300.1 238.2 300.0 238.0 299.5 237.7 299.4 237.4 300.2 237.2 335.3 237.2 336.3 237.3 336.3 237.5 336.1 237.8 336.1 238.0 337.1 238.1 400.0 238.1M299.3 238.4 299.6 239.1 300.0 240.1 300.6 241.3 301.2 242.4 301.9 243.4 302.9 244.0 304.2 244.4 305.4 244.8 306.5 245.5 307.2 246.9 305.4 272.0M400.0 238.1 443.9 238.6 600.0 239.0M492.3 239.0 494.9 253.0 497.5 272.0M588.0 239.0 589.8 217.9 590.8 216.4 592.0 215.5 593.4 214.9 594.8 214.6 596.0 214.4 597.0 214.4 597.9 214.8 598.8 215.3 599.5 215.8 600.0 216.1M782.7 100.0 782.9 101.3 783.2 103.3 783.5 105.5 783.7 107.6 783.6 109.2 783.1 110.3 782.2 111.0 781.2 111.6 780.4 112.1 779.9 112.9 780.1 114.0 780.7 115.3 781.5 116.6 782.0 117.7 781.8 118.5 780.7 118.6 779.1 118.2 777.2 117.7 775.2 117.3 773.5 117.5 771.9 118.3 770.4 119.4 768.9 120.7 767.4 122.3 766.1 124.0 764.9 126.0 763.7 128.4 762.7 130.9 761.6 133.2 760.5 135.1 759.5 136.5 758.5 137.8 757.5 138.8 756.4 139.4 755.0 139.7 753.4 139.2 751.7 138.1 749.8 136.8 747.8 135.6 745.8 135.1 743.6 135.2 741.3 135.9 739.0 136.7 736.7 137.8 734.7 138.8 733.0 139.7 731.5 140.7 730.1 141.8 728.7 143.0 727.3 144.3 725.8 145.9 724.2 147.9 722.7 149.9 721.2 151.6 719.9 152.6 718.8 152.8 717.6 152.4 716.6 151.7 715.9 150.7 715.3 149.8 715.3 148.8 715.6 147.5 716.1 146.2 716.4 145.1 716.3 144.3 715.6 143.8 714.7 143.4 713.5 143.4 712.2 143.6 710.7 144.3 709.1 145.7 707.2 147.7 705.2 150.0 703.3 152.1 701.5 153.5 699.8 154.1 698.1 154.1 696.6 153.9 695.2 153.9 694.1 154.4 693.4 155.7 693.2 157.3 693.0 159.2 692.8 161.1 692.3 162.7 691.5 164.3 690.5 165.8 689.4 167.2 688.1 168.4 686.7 169.2 685.1 169.5 683.2 169.4 681.2 169.2 679.3 169.0 677.5 169.2 675.9 169.8 674.5 170.7 673.1 171.7 671.7 172.8 670.1 173.8 668.4 174.8 666.7 175.8 664.8 176.9 662.9 178.1 660.9 179.4 658.8 181.0 656.6 182.9 654.3 184.9 652.1 186.5 649.8 187.7 647.6 188.0 645.4 187.8 643.2 187.3 641.0 186.9 638.8 186.7 636.5 186.8 634.3 187.0 632.1 187.4 629.9 187.9 627.7 188.6 625.4 189.6 623.0 190.8 620.6 192.2 618.5 193.7 616.6 195.0 615.1 196.3 613.8 197.5 612.8 198.7 611.9 200.0 611.1 201.5 610.5 203.2 610.2 205.2 610.1 207.2 609.8 209.1 609.2 210.7 608.3 212.0 607.2 213.1 605.9 214.0 604.7 214.7 603.7 215.3 602.8 215.8 601.9 216.0 601.1 216.1 600.5 216.2 600.0 216.3M600.0 239.3 679.4 238.0 703.3 231.0 719.9 224.6 722.0 223.8 723.8 223.2 725.5 222.7 727.3 222.3 729.2 221.8 731.2 221.3 733.3 220.9 735.5 220.5 737.8 220.2 740.2 219.9 766.1 220.9 805.8 223.3M679.4 238.0 677.5 243.9 669.2 248.9M126.5 260.0 127.3 261.0 128.5 262.6 129.8 264.3 130.7 265.8 130.9 267.0 130.1 267.6 128.5 267.8 126.6 267.8 124.9 268.1 123.9 268.8 123.8 270.2 124.2 272.0 124.9 274.0 125.5 275.9 125.7 277.6 125.2 278.8 124.4 279.8 123.5 280.7 122.7 281.7 122.1 282.8 122.2 284.3 122.6 286.0 123.2 287.8 123.4 289.4 123.0 290.8 121.7 291.7 119.7 292.4 117.5 293.0 115.5 293.6 114.2 294.3 113.9 295.2 114.2 296.3 114.8 297.4 115.2 298.2 115.1 298.7 114.2 298.4 112.9 297.7 111.4 296.8 110.0 296.1 109.0 296.0 108.6 296.8 108.6 298.1 108.7 299.6 108.6 301.1 108.1 302.2 106.7 302.7 104.8 302.9 102.7 303.1 101.0 303.3 100.2 303.9 100.6 305.1 102.0 306.6 103.7 308.3 105.0 309.8 105.4 311.0 104.6 311.6 102.9 311.9 100.9 312.0 98.9 312.2 97.5 312.7 96.7 313.6 96.1 314.7 95.7 315.9 95.6 317.1 95.8 318.0 96.6 318.6 97.9 319.1 99.4 319.5 100.6 319.9 101.1 320.6 100.6 321.7 99.5 323.0 98.1 324.4 96.5 325.7 94.9 326.8 93.1 327.6 90.8 328.1 88.6 328.6 86.9 329.0 86.1 329.4 86.7 329.8 88.4 330.0 90.5 330.2 92.3 330.6 93.1 331.2 92.6 332.1 91.3 333.4 89.6 334.7 88.0 336.1 87.0 337.3 86.7 338.5 86.7 339.6 86.9 340.7 87.4 341.7 87.9 342.6 88.8 343.4 90.1 344.2 91.4 344.9 92.2 345.6 92.3 346.1 91.1 346.5 88.9 346.8 86.4 347.0 84.1 347.3 82.6 347.9 81.9 348.7 81.6 349.9 81.7 351.1 82.1 352.2 82.6 353.1 83.7 353.9 85.5 354.5 87.3 355.0 88.5 355.5 88.8 355.8 87.4 355.9 85.0 355.8 82.0 355.6 79.3 355.5 77.3 355.8 76.2 356.4 75.6 357.3 75.2 358.3 75.3 359.3 75.6 360.2 76.5 360.8 78.1 361.3 79.8 361.7 81.2 362.2 81.7 362.8 81.0 363.6 79.4 364.4 77.4 365.3 75.7 366.2 74.7 367.2 74.5 368.2 74.8 369.3 75.5 370.5 76.4 371.5 77.3 372.5 78.5 373.3 80.0 374.0 81.7 374.7 83.2 375.3 84.4 376.0 85.4 376.8 86.3 377.6 87.0 378.4 87.3 379.0 87.0 379.5 85.7 379.6 83.4 379.4 80.9 379.2 78.7 379.1 77.3 379.5 77.0 380.5 77.4 381.9 78.1 383.6 79.1 385.2 80.0 386.5 80.9 387.6 82.0 388.6 83.2 389.4 84.3 390.2 85.2 390.9 86.0 391.5 86.7 391.8 87.3 392.2 87.7 392.7 87.9 393.6 87.6 395.0 87.1 396.9 86.4 399.0 85.7 400.8 85.2 402.0M306.0 260.0 301.9 295.1 297.5 339.1 294.0 374.2 291.4 402.0M497.0 260.0 504.0 303.9 512.8 356.7 520.7 402.0M500.0 238.8 587.9 238.8 658.2 238.8 679.3 237.9 700.0 231.8M587.9 230.0 587.9 238.8M678.8 238.4 703.4 230.7 707.6 230.0M678.8 238.4 678.6 239.1 678.4 240.1 678.1 241.2 677.6 242.3 676.7 243.4 675.4 244.2 673.6 245.0 671.7 245.7 669.8 246.6 668.3 247.6 667.0 248.8 666.0 250.1 665.0 251.5 664.1 253.0 663.4 254.6 662.5 256.4 661.7 258.3 661.0 260.3 660.6 262.2 660.5 263.7 661.0 265.0 661.7 265.9 662.8 266.8 664.0 267.7 665.5 268.7 667.1 269.8 669.1 271.0 671.2 272.2 673.4 273.5 675.3 275.0 677.1 276.8 678.7 278.9 680.3 281.0 681.9 282.9 683.7 284.1 685.8 284.5 688.1 284.1 690.5 283.5 692.6 283.1 694.3 283.4 695.4 284.5 696.1 286.1 696.5 288.0 697.0 290.0 697.8 291.9 699.0 293.6 700.3 295.4 701.8 297.2 703.1 299.1 704.1 301.0 704.7 303.1 705.0 305.2 705.2 307.4 705.6 309.6 706.2 311.5 707.4 313.4 708.8 315.1 710.4 316.7 712.0 318.3 713.3 320.0 714.2 321.7 715.0 323.4 715.6 325.1 716.4 326.8 717.5 328.4 718.9 329.9 720.4 331.3 722.1 332.7 724.0 334.1 725.9 335.4 728.2 337.0 730.8 338.6 733.3 340.2 735.6 341.5 737.2 342.5M732.2 340.0 733.6 340.9 735.5 342.2 737.6 343.7 739.7 345.3 741.4 347.0 742.5 348.9 743.4 350.9 744.1 353.1 744.8 355.1 745.6 356.9 746.6 358.4 747.7 359.8 748.8 361.1 750.0 362.2 751.2 363.2 752.6 363.9 754.1 364.4 755.6 364.9 757.0 365.3 758.3 366.0 759.3 367.0 760.1 368.1 760.9 369.4 761.7 370.6 762.5 371.6 763.4 372.5 764.4 373.3 765.4 374.0 766.2 374.8 766.7 375.9 766.6 377.2 766.1 378.8 765.5 380.4 765.1 382.1 765.3 383.6 766.2 385.0 767.8 386.3 769.5 387.6 771.1 388.8 772.3 389.9 772.9 391.0 773.1 392.1 773.2 393.1 773.3 394.0 773.7 394.8 774.6 395.5 775.6 396.0 776.8 396.4 777.9 396.9 778.6 397.6 778.9 398.6 778.9 399.7 778.7 400.9 778.8 402.1 779.3 403.3 780.5 404.3 782.1 405.3 784.0 406.3 785.9 407.2 787.8 408.2 789.7 409.1 791.7 410.0 793.7 410.9 795.5 411.9 796.9 413.1 797.8 414.6 798.1 416.2 798.3 417.9 798.5 419.7 799.0 421.5 799.9 423.5 801.0 425.5 802.2 427.6 803.2 429.6 804.0 431.4 804.4 433.1 804.6 434.7 804.6 436.2 804.6 437.5 804.7 438.4M513.3 360.0 520.3 403.9 525.6 430.3 526.2 432.3 527.0 434.1 527.7 435.7 528.4 437.3 529.1 439.1 529.6 441.1 530.0 443.2 530.5 445.3 531.0 447.5 531.7 449.6 532.8 451.8 534.1 454.0 535.5 456.2 536.8 458.3 537.9 460.2 538.7 461.8 539.4 463.2 540.0 464.4 540.4 465.7 540.5 467.2 540.2 468.9 539.3 470.8 538.4 472.6 537.8 474.4 537.9 476.0 539.0 477.3 540.9 478.4 543.0 479.3 544.8 480.3 545.8 481.3 545.7 482.3 545.0 483.4 543.9 484.4 542.6 485.5 541.4 486.5 540.1 487.5 538.5 488.4 536.9 489.3 535.4 490.4 534.4 491.8 533.8 493.7 533.5 496.0 533.5 498.4 533.5 500.5 533.5 502.0M292.2 390.0 287.8 425.1 283.4 477.9 279.9 532.0M6.2 415.3 79.1 415.3M84.6 390.0 85.2 390.5 86.3 391.2 87.3 392.0 88.0 393.1 87.9 394.4 76.9 405.4 77.2 407.2 78.6 409.0 80.3 410.7 81.8 412.4 82.4 414.2 81.6 416.0 79.8 418.0 77.8 419.9 76.2 421.6 75.8 423.0 77.0 423.7 79.3 423.9 82.0 424.0 84.4 424.3 85.7 425.1 85.4 426.8 84.2 428.9 82.5 431.3 81.0 433.8 80.2 436.1 80.2 438.4 80.6 440.8 81.3 443.2 82.3 445.3 83.5 447.1 85.2 448.3 87.4 449.1 89.8 449.8 91.5 450.5 92.3 451.5 91.3 453.1 89.1 454.9 86.4 456.9 84.3 458.8 83.5 460.3 84.6 461.4 87.0 462.1 89.9 462.8 92.7 463.5 94.5 464.7 95.1 466.5 95.0 468.8 94.6 471.2 94.3 473.3 94.5 474.6 95.4 474.8 96.7 474.1 98.1 473.1 99.3 472.4 100.0 472.4 99.9 473.3 99.5 474.8 98.8 476.6 97.8 478.4 96.7 480.1 95.3 481.5 93.5 482.9 91.7 484.2 89.7 485.5 87.9 486.7 85.8 487.7 83.4 488.7 81.2 489.6 79.6 490.4 79.1 491.1 80.3 491.5 82.9 491.8 86.0 492.0 88.7 492.4 90.1 493.3 89.9 494.6 88.6 496.4 86.9 498.4 85.0 500.3 83.5 502.0 82.3 503.5 81.2 504.7 80.1 505.9 79.1 507.2 78.0 508.6 76.9 510.3 75.9 512.2 74.9 514.1 73.7 515.9 72.5 517.4 70.9 518.6 68.8 519.4 66.9 520.2 65.4 520.9 64.8 521.8 65.6 522.9 67.6 524.0 69.9 525.2 71.8 526.3 72.5 527.3 71.7 528.0 69.9 528.5 67.5 529.0 65.3 529.6 63.7 530.6 62.9 532.1 62.6 534.1 62.5 536.2 62.2 538.0 61.5 539.4 60.1 540.0 58.3 540.1 56.3 539.9 54.7 540.0 53.8 540.5 54.1 541.5 55.3 542.9 56.8 544.5 58.0 546.3 58.2 548.2 49.4 559.2 49.9 559.9 51.4 560.0 53.4 559.9 55.1 559.8 56.0 560.3 55.9 561.4 55.3 562.9 54.3 564.6 53.3 566.0 52.7 567.1M52.7 560.0 52.7 561.3 52.6 563.2 52.5 565.3 52.2 567.3 51.6 568.8 50.5 569.5 49.0 569.7 47.3 569.8 45.9 570.1 45.0 571.0 45.0 572.6 45.5 574.7 46.2 577.1 46.9 579.6 47.2 582.0 46.8 584.5 45.9 587.3 45.0 590.0 44.5 592.4 45.0 594.1 186.7 594.5 187.0 595.7 186.3 597.4 185.0 599.4 183.5 601.7 182.3 603.9 181.4 606.4 180.3 609.0 179.3 611.8 178.5 614.6 177.9 617.1 177.7 619.4 177.6 621.7 177.8 623.8 178.3 625.9 179.0 628.1 187.8 640.2 188.8 642.6 189.5 645.0 190.0 647.5 190.5 649.9 191.1 652.3 191.8 654.6 192.5 657.1 193.3 659.4 193.9 661.5 194.4 663.3 194.8 664.6 195.1 665.7 195.3 666.5 195.4 667.2 195.5 667.6M279.5 500.0 280.6 522.0 282.8 576.9 285.0 631.8 285.7 651.6M344.3 594.5 490.0 594.5M344.3 594.5 343.7 596.0 342.8 598.3 341.8 600.8 341.1 603.4 341.1 605.4 341.8 607.0 343.0 608.3 344.6 609.5 346.2 610.7 347.6 612.0 348.8 613.5 349.9 615.1 350.9 616.8 352.0 618.3 353.1 619.7 354.5 620.9 356.1 621.9 357.6 622.9 358.9 623.9 359.7 625.2 360.0 626.8 359.9 628.6 359.6 630.5 359.1 632.3 358.6 634.0 358.0 635.5 357.1 636.8 356.2 638.1 355.5 639.3 355.3 640.6 355.8 642.0 356.7 643.6 357.9 645.0 359.0 646.3 359.7 647.2M534.6 490.0 534.4 491.4 534.2 493.5 533.9 495.8 533.7 498.4 533.5 501.0 533.0 516.4 533.5 539.4 533.5 541.9 533.6 544.3 533.7 546.7 533.7 549.0 533.5 551.5 529.1 571.3 529.1 573.4 529.4 575.1 529.9 576.8 530.5 578.4 531.3 580.1 532.2 581.8 533.4 583.5 534.7 585.2 535.8 587.0 536.8 588.9 537.4 591.1 537.9 593.5 538.3 596.0 538.6 598.2 539.0 599.8 539.4 600.9 540.0 601.5 540.4 601.7 540.9 601.9 541.2 602.0M439.0 594.8 536.8 594.3M547.8 620.1 603.8 622.9 669.7 627.3 700.0 629.5M699.1 629.2 743.5 632.2 746.4 647.0 748.4 648.6 751.0 650.0 753.8 650.8 756.4 651.1 758.3 650.5 760.6 635.2 757.7 617.4 758.3 615.4 759.4 613.6 760.7 612.1 761.9 610.9 762.7 610.0M760.0 613.3 760.8 612.7 762.0 611.8 763.4 610.8 764.7 610.0 765.9 609.6 766.9 609.6 767.7 610.0 768.4 610.6 769.3 611.2 770.4 611.8 771.6 612.3 773.1 612.9 774.7 613.6 776.2 614.2 777.8 614.7 779.2 615.2 780.6 615.7 782.0 616.2 783.5 616.6 785.1 617.0 787.2 617.2 789.6 617.4 792.0 617.5 794.0 617.6 795.5 617.7"/></g><!--/MAP-->
<g fill="none" stroke="#e4e4e4" stroke-width="0.88">
<circle cx="407" cy="407" r="159.5"/><circle cx="407" cy="407" r="279.5"/><circle cx="407" cy="407" r="399.5"/><circle cx="407" cy="407" r="519.5"/>
</g>
<g fill="#5d4f4a"><rect x="396" y="6" width="20.5" height="6"/><rect x="396" y="123" width="20.5" height="9"/><rect x="396" y="243" width="20.5" height="9"/></g>
<g font-family="DejaVu Sans, sans-serif" font-size="10" fill="#ffff8c" text-anchor="middle" letter-spacing="0.6">
<text x="406.200" y="11">313</text><text x="406.200" y="131">219</text><text x="406.200" y="251">125</text><text x="406" y="371">31</text>
</g>
<circle cx="407" cy="407" r="39.5" fill="none" stroke="#ff0000" stroke-width="1.1"/>
<g stroke="#ffff00" stroke-width="1" fill="none"><path d="M503 121.5h7M506.500 118v7M497 175.500h7M500.500 172v7"/></g>
</svg>
<!--LEGEND--><div class="a" style="left:3px;top:753px;width:243px;height:44px;box-sizing:border-box;border:1px solid #a8a8a8;background:#000"></div>
<div class="a lg" style="left:7.4px;top:758.00px;color:#fff;font-size:9.1px">Symbols</div>
<div class="a lg" style="left:47px;top:758.00px;color:#fff;font-size:9.1px">-CG</div>
<div class="a lg" style="left:72px;top:758.00px;color:#fff;font-size:9.1px">-IC</div>
<div class="a lg" style="left:93px;top:758.00px;color:#fff;font-size:9.1px">+CG</div>
<div class="a lg" style="left:118px;top:758.00px;color:#fff;font-size:9.1px">+IC</div>
<div class="a lg" style="left:147px;top:758.00px;color:#fff;font-size:9.0px">Strike age color codes</div>
<div class="a lg" style="left:7.4px;top:770.00px;color:#fff;font-size:9.1px">Recent</div>
<div class="a lg" style="left:7.4px;top:783.00px;color:#fff;font-size:9.1px">Old</div>
<div class="a lg" style="left:148px;top:770.00px;color:#d8c800;font-size:9.1px">15+</div>
<div class="a lg" style="left:183px;top:770.00px;color:#d8a000;font-size:9.1px">30+</div>
<div class="a lg" style="left:217.6px;top:770.00px;color:#e08800;font-size:9.1px">45+</div>
<div class="a lg" style="left:148px;top:783.00px;color:#d87000;font-size:9.1px">60+</div>
<div class="a lg" style="left:183px;top:783.00px;color:#d85000;font-size:9.1px">75+</div>
<div class="a lg" style="left:217.6px;top:783.00px;color:#e03000;font-size:9.1px">90+</div>
<svg class="a" style="left:44px;top:768px" width="100" height="30" viewBox="50 774 100 30" fill="none" stroke-width="1">
<g stroke="#00ffff"><circle cx="60.5" cy="780.5" r="4"/><path d="M58 780.5h5M82 780.5h7M108 780.5h5M110.500 778.0v5M132 780.5h7M135.500 777.0v7"/><circle cx="110.500" cy="780.5" r="4"/></g>
<g stroke="#ffff00"><circle cx="60.5" cy="793.5" r="4"/><path d="M58 793.5h5M82 793.5h7M108 793.5h5M110.500 791.0v5M132 793.5h7M135.500 790.0v7"/><circle cx="110.500" cy="793.5" r="4"/></g>
</svg>
<div class="a" style="left:680px;top:786px;width:120px;height:14px;background:#000"></div>
<div class="a lg" style="left:683.5px;top:788.00px;color:#fff;font-size:9.3px">©2005 Astrogenic Systems</div>
<!--/LEGEND-->
</div>
<!--PANELS--><div class="pn" style="left:812px;top:8px;width:320px;height:320px"></div>
<div class="pn" style="left:812px;top:333px;width:320px;height:115px"></div>
<div class="pn" style="left:812px;top:453px;width:320px;height:350px"></div>
<div class="btn" style="left:819px;top:16px;width:58px;height:18px;background:#5a0000;color:#cfcfcf;font-size:12px;line-height:18px;font-weight:bold;letter-spacing:0.25px;">STRIKE</div>
<div class="btn" style="left:883px;top:16px;width:58px;height:18px;background:#333;color:#c0c0c0;font-size:12px;line-height:18px;font-weight:bold;letter-spacing:0.6px;">NOISE</div>
<div class="btn" style="left:994px;top:16px;width:128px;height:18px;background:#333"></div>
<div class="a " style="left:999px;top:20.00px;font-size:12px;font-weight:bold;">Bng 19°</div>
<div class="a gr" style="right:20px;top:20.00px;font-size:12px;font-weight:bold;">235mi</div>
<div class="btn" style="left:821px;top:64px;width:82px;height:16px;background:#555;color:#fff;font-size:11.7px;line-height:14px;">Strikes/min</div>
<div class="btn" style="left:931px;top:64px;width:82px;height:16px;background:#555;color:#fff;font-size:11.7px;line-height:14px;">Close/min</div>
<div class="btn" style="left:1041px;top:64px;width:82px;height:16px;background:#555;color:#fff;font-size:11.7px;line-height:14px;">Noises/min</div>
<div class="a " style="right:235.5px;top:89.00px;font-size:26.67px;font-weight:bold;">0</div>
<div class="a " style="right:235.5px;top:133.00px;font-size:12.5px;">Total Strikes</div>
<div class="a " style="right:235.5px;top:151.00px;font-size:12.5px;">43</div>
<div class="a " style="right:125.5px;top:89.00px;font-size:26.67px;font-weight:bold;">0</div>
<div class="a " style="right:125.5px;top:133.00px;font-size:12.5px;">Total Close</div>
<div class="a " style="right:125.5px;top:151.00px;font-size:12.5px;">0</div>
<div class="a g" style="right:15.5px;top:89.00px;font-size:26.67px;font-weight:bold;">0</div>
<div class="a g" style="right:15.5px;top:133.00px;font-size:12.5px;">Total Noises</div>
<div class="a g" style="right:15.5px;top:151.00px;font-size:12.5px;">85</div>
<div class="a g" style="left:821px;top:205.00px;font-size:12.5px;">Lightning type distribution</div>
<div class="hl" style="left:821px;top:217px;width:303px"></div>
<div class="a " style="left:821px;top:227.00px;font-size:12.2px;font-family:'DejaVu Sans Condensed','DejaVu Sans',sans-serif;font-weight:bold;">Cloud-ground</div>
<div class="a " style="left:912px;top:227.00px;font-size:12.5px;">+</div>
<div class="bar" style="left:925px;top:227px"><i style="width:9px;background:#ff0000"></i></div>
<div class="a " style="left:980px;top:227.00px;font-size:12.2px;font-family:'DejaVu Sans Condensed','DejaVu Sans',sans-serif;font-weight:bold;letter-spacing:0.9px;">19%</div>
<div class="a " style="left:1015px;top:227.00px;font-size:12.2px;font-family:'DejaVu Sans Condensed','DejaVu Sans',sans-serif;font-weight:bold;">−</div>
<div class="bar" style="left:1028px;top:227px"><i style="width:24px;background:#99ccff"></i></div>
<div class="a " style="left:1082px;top:227.00px;font-size:12.2px;font-family:'DejaVu Sans Condensed','DejaVu Sans',sans-serif;font-weight:bold;letter-spacing:0.9px;">49%</div>
<div class="a g" style="left:821px;top:251.00px;font-size:12.2px;font-family:'DejaVu Sans Condensed','DejaVu Sans',sans-serif;font-weight:bold;letter-spacing:0.3px;">Count</div>
<div class="a " style="left:925px;top:251.00px;font-size:12.2px;font-family:'DejaVu Sans Condensed','DejaVu Sans',sans-serif;font-weight:bold;">8</div>
<div class="a " style="left:1028px;top:251.00px;font-size:12.2px;font-family:'DejaVu Sans Condensed','DejaVu Sans',sans-serif;font-weight:bold;">21</div>
<div class="a " style="left:821px;top:281.00px;font-size:12.2px;font-family:'DejaVu Sans Condensed','DejaVu Sans',sans-serif;font-weight:bold;">Intracloud</div>
<div class="a " style="left:912px;top:281.00px;font-size:12.5px;">+</div>
<div class="bar" style="left:925px;top:281px"><i style="width:9px;background:#f060b0"></i></div>
<div class="a " style="left:980px;top:281.00px;font-size:12.2px;font-family:'DejaVu Sans Condensed','DejaVu Sans',sans-serif;font-weight:bold;letter-spacing:0.9px;">19%</div>
<div class="a " style="left:1015px;top:281.00px;font-size:12.2px;font-family:'DejaVu Sans Condensed','DejaVu Sans',sans-serif;font-weight:bold;">−</div>
<div class="bar" style="left:1028px;top:281px"><i style="width:7px;background:#00ee00"></i></div>
<div class="a " style="left:1082px;top:281.00px;font-size:12.2px;font-family:'DejaVu Sans Condensed','DejaVu Sans',sans-serif;font-weight:bold;letter-spacing:0.9px;">14%</div>
<div class="a g" style="left:821px;top:305.00px;font-size:12.2px;font-family:'DejaVu Sans Condensed','DejaVu Sans',sans-serif;font-weight:bold;letter-spacing:0.3px;">Count</div>
<div class="a " style="left:925px;top:305.00px;font-size:12.2px;font-family:'DejaVu Sans Condensed','DejaVu Sans',sans-serif;font-weight:bold;">8</div>
<div class="a " style="left:1028px;top:305.00px;font-size:12.2px;font-family:'DejaVu Sans Condensed','DejaVu Sans',sans-serif;font-weight:bold;">6</div>
<div class="a gr" style="left:821px;top:340.00px;font-size:16.5px;font-weight:bold;">2/24/2026 4:35:02 PM</div>
<div class="hl" style="left:821px;top:358px;width:302px"></div>
<div class="a " style="left:821px;top:378.00px;font-size:12.5px;">Squelch</div>
<div class="a " style="left:909.5px;top:378.00px;font-size:12.5px;">0</div>
<div class="a " style="left:981px;top:378.00px;font-size:12.5px;">Upload</div>
<div class="a g" style="left:1061px;top:378.00px;font-size:12.5px;">Disabled</div>
<div class="a " style="left:821px;top:398.00px;font-size:12.5px;">Persistence</div>
<div class="a " style="left:909.5px;top:398.00px;font-size:12.5px;">90 min</div>
<div class="a " style="left:981px;top:398.00px;font-size:12.5px;">Capture</div>
<div class="a gr" style="left:1061px;top:398.00px;font-size:12.5px;">Active</div>
<div class="a " style="left:821px;top:418.00px;font-size:12.5px;">Range</div>
<div class="a " style="left:909.5px;top:418.00px;font-size:12.5px;">313 mi</div>
<div class="a " style="left:981px;top:418.00px;font-size:12.5px;">Receiver</div>
<div class="a gr" style="left:1061px;top:418.00px;font-size:12.5px;">Enabled</div>
<div class="a g" style="left:821px;top:465.00px;font-size:12.5px;">Uptime</div>
<div class="a " style="left:909.5px;top:465.00px;font-size:12.5px;">1036:20</div>
<div class="a g" style="left:981px;top:465.00px;font-size:12.5px;">Peak time</div>
<div class="a g" style="left:1061px;top:465.00px;font-size:12.5px;">Plot</div>
<div class="a g" style="left:821px;top:488.00px;font-size:12.5px;">Peak rate</div>
<div class="a " style="left:909.5px;top:488.00px;font-size:12.5px;">2/min</div>
<div class="a " style="left:981px;top:488.00px;font-size:12.5px;">6:24 AM</div>
<div class="a " style="left:1061px;top:488.00px;font-size:12.5px;">Strike</div>
<div class="a g" style="left:822px;top:518.00px;font-size:12.5px;">Trend graph</div>
<div class="a " style="left:908.5px;top:518.00px;font-size:12.5px;">60 min</div>
<svg class="a" style="left:812px;top:530px" width="320" height="272" viewBox="812 530 320 272">
<g stroke="#c8c8c8" stroke-width="1" fill="none" shape-rendering="crispEdges"><path d="M822.5 777.5H1088.5V542.5M822.5 775V779M866.5 775V779M911.5 775V779M955.5 775V779M999.5 775V779M1044.5 775V779M1088.5 775V779M1085 777.5H1089M1085 738.5H1089M1085 699.5H1089M1085 659.5H1089M1085 620.5H1089M1085 581.5H1089M1085 542.5H1089"/></g>
<path d="M1047.500 777.5L1049.500 769.500H1052L1054.500 777.500L1056 769.500H1059L1061 777.5" stroke="#fff" stroke-width="1" fill="none"/>
<g font-family="Liberation Sans, sans-serif" font-size="11.6" fill="#c8c8c8"><text x="820.6" y="793">60</text><text x="865.2" y="793">50</text><text x="909.7" y="793">40</text><text x="954.3" y="793">30</text><text x="998.8" y="793">20</text><text x="1043.4" y="793">10</text><text x="1087.500" y="793">0</text><text x="1100.500" y="793">min</text><text x="1092.500" y="547">30</text><text x="1092.500" y="625">20</text><text x="1092.500" y="703.7">10</text></g></svg>
<!--/PANELS-->
</body></html>
